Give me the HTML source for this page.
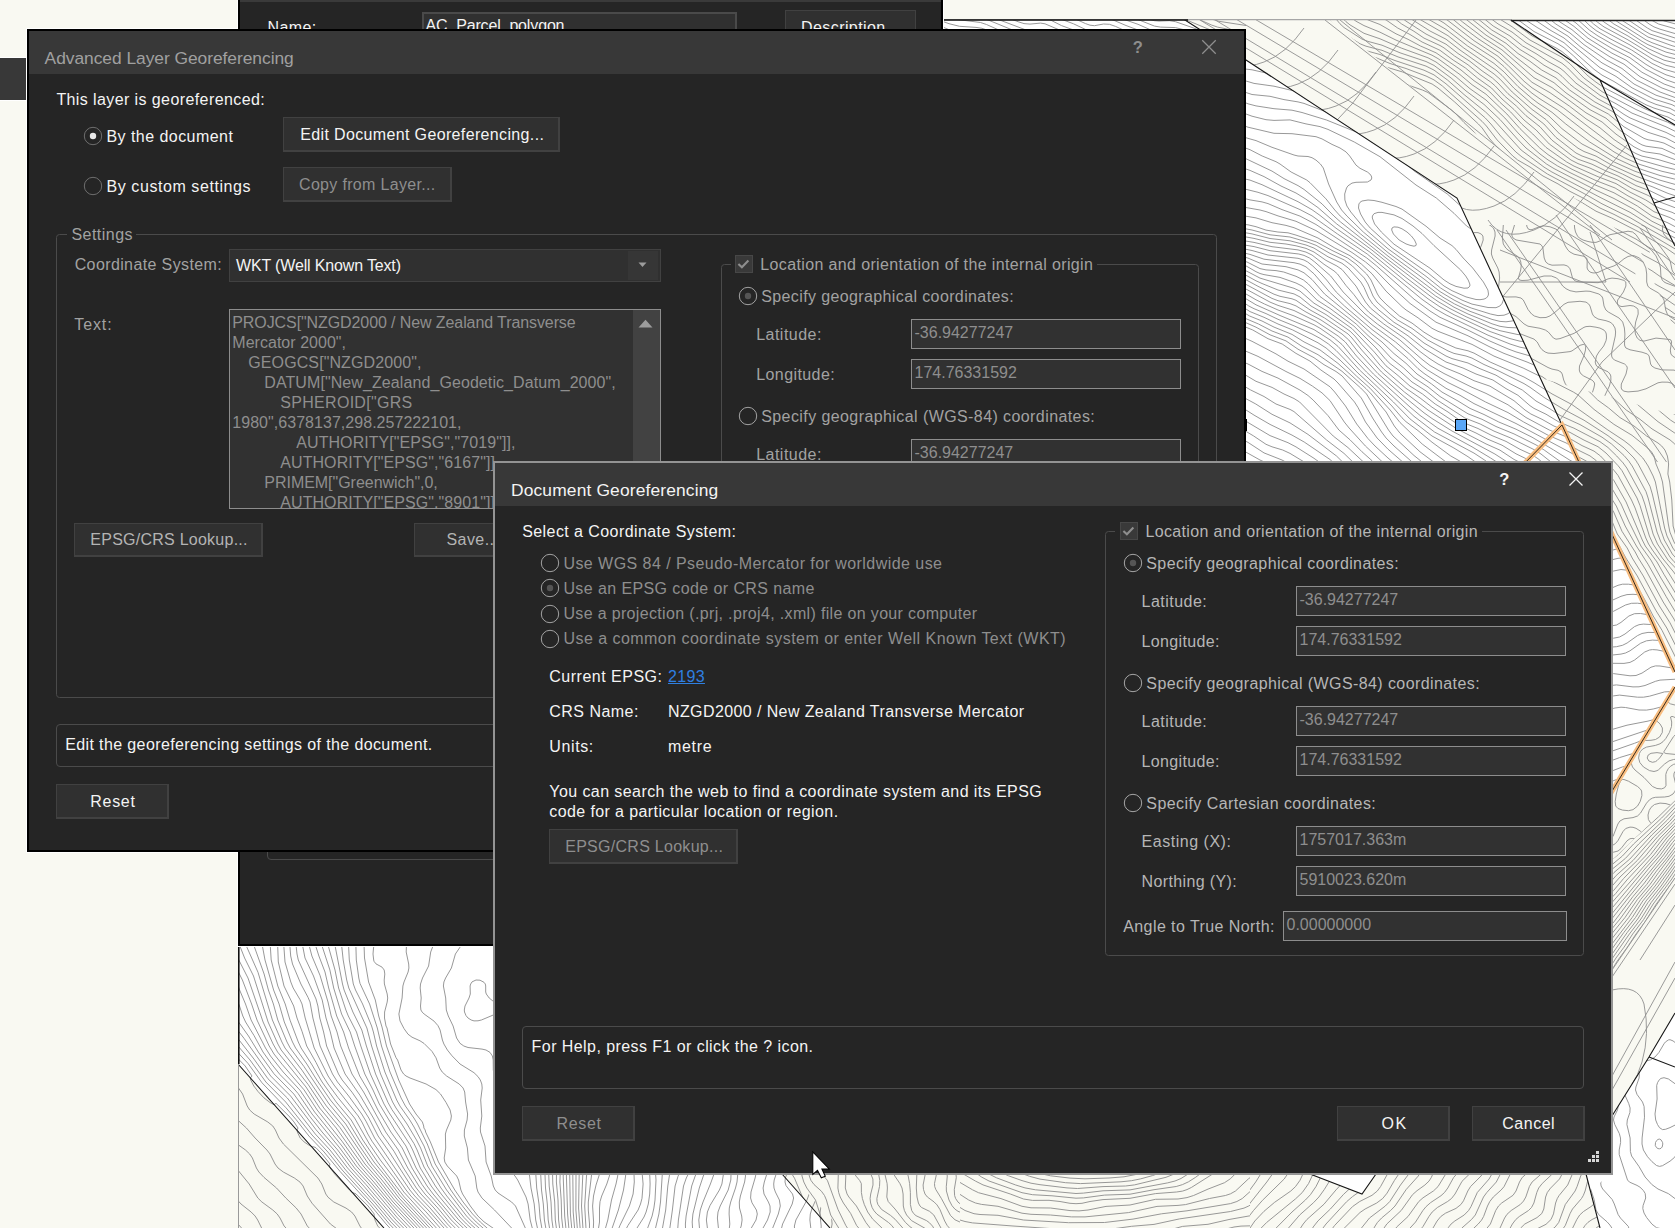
<!DOCTYPE html>
<html><head><meta charset="utf-8"><title>Document Georeferencing</title>
<style>
html,body{margin:0;padding:0;}
body{width:1675px;height:1228px;overflow:hidden;background:#f9f9f2;position:relative;font-family:"Liberation Sans",sans-serif;}
.b{position:absolute;box-sizing:border-box;}
.t{position:absolute;white-space:pre;font-family:"Liberation Sans",sans-serif;}
.dlg{position:absolute;box-sizing:border-box;overflow:hidden;}
.dlg .in{position:absolute;}
</style></head><body>

<svg class="b" style="left:0;top:0" width="1675" height="1228" viewBox="0 0 1675 1228"><defs><clipPath id="mapclip"><rect x="238" y="19" width="1437" height="1209"/></clipPath><clipPath id="c1"><path d="M1244 58 L1457 198 L1562 425 L1612 532 L1675 672 L1675 687 L1612 791 L1560 880 L1244 880Z"/></clipPath><clipPath id="c2"><path d="M1511 20 L1675 20 L1675 125 L1600 80Z"/><path d="M1600 80 L1675 125 L1675 197 L1654 203Z"/><path d="M1654 203 L1675 197 L1675 246 L1668 232Z"/></clipPath><clipPath id="c3"><path d="M1330 20 L1511 20 L1600 80 L1654 203 L1675 246 L1675 330 L1640 250 L1600 215 L1440 110Z"/></clipPath><clipPath id="c4"><path d="M1185 20 L1511 20 L1600 80 L1654 203 L1675 246 L1675 462 L1575 462 L1562 425 L1457 198 L1246 60 L1199 29Z"/></clipPath><clipPath id="c5"><path d="M1470 225 L1675 225 L1675 415 L1540 378Z"/></clipPath><clipPath id="c6"><path d="M1540 378 L1675 415 L1675 462 L1575 462 L1562 425Z"/></clipPath><clipPath id="c7"><path d="M1457 198 L1675 198 L1675 462 L1575 462 L1562 425Z"/></clipPath><clipPath id="c8"><path d="M1610 528 L1612 532 L1675 672 L1675 687 L1612 791 L1610 795Z"/></clipPath><clipPath id="c9"><path d="M1612 462 L1675 462 L1675 672 L1612 532Z"/></clipPath><clipPath id="c10"><path d="M1612 791 L1675 687 L1675 800 L1612 860Z"/></clipPath><clipPath id="c11"><path d="M1612 860 L1675 800 L1675 878 L1612 970Z"/></clipPath><clipPath id="c12"><path d="M1612 870 L1675 870 L1675 1013 L1649 1057 L1612 1116Z"/></clipPath><clipPath id="c13"><path d="M1612 1116 L1649 1057 L1675 1013 L1675 1228 L1600 1228 L1590 1190 L1612 1174Z"/></clipPath><clipPath id="c14"><path d="M238 944 L494 944 L494 1174 L790 1174 L840 1228 L238 1228Z"/></clipPath><clipPath id="c15"><path d="M782 1174 L960 1174 L960 1228 L830 1228Z"/></clipPath><clipPath id="c16"><path d="M960 1174 L1250 1174 L1250 1228 L960 1228Z"/></clipPath><clipPath id="c17"><path d="M1250 1174 L1310 1174 L1362 1194 L1376 1174 L1586 1174 L1600 1228 L1250 1228Z"/></clipPath><clipPath id="c18"><path d="M943 20 L1246 20 L1246 29 L943 29Z"/></clipPath></defs><g clip-path="url(#mapclip)"><rect x="238" y="20" width="1437" height="1208" fill="#ffffff"/><path d="M1185 20 L1511 20 L1600 80 L1654 203 L1668 232 L1675 246 L1675 1013 L1649 1057 L1612 1116 L1560 1195 L1560 880 L1612 791 L1675 687 L1675 672 L1562 425 L1457 198 L1246 60 L1199 29Z" fill="#f9f9f2"/><path d="M740 1128 L1290 1128 L1310 1174 L1362 1194 L1376 1174 L1586 1174 L1600 1228 L830 1228Z" fill="#f9f9f2"/><path d="M238 1064 L384 1228 L238 1228Z" fill="#f9f9f2"/><path clip-path="url(#c1)" d="M1666.5 16 L1680 19.8 M1654.4 16 L1658 18.3 L1664 20.9 L1680 25.1 M1646.4 16 L1652 20.4 L1658.6 24 L1680 30.1 M1638.4 16 L1649.1 24 L1654 26.9 L1660 29.2 L1680 35 M1629.9 16 L1647.4 28 L1652 30.6 L1680 39.6 M1622.6 16 L1644 30.5 L1650 34 L1680 43.8 M1616.3 16 L1621.5 20 L1648 37 L1672 45.7 L1680 47.9 M1610.1 16 L1617.8 22 L1646.2 40 L1652 42.7 L1668 48.6 L1680 51.8 M1603.5 16 L1613.9 24 L1628 32.1 L1642 41.3 L1648 44.7 L1666 52.1 L1680 55.7 M1596.8 16 L1604 22 L1609.9 26 L1628 36 L1648 48.5 L1664 55.8 L1670 57.6 L1680 59.7 M1590.8 16 L1597.3 22 L1604 26.9 L1628 39.9 L1652 54.6 L1664 60.2 L1680 64 M1585.3 16 L1593.6 24 L1600 28.8 L1630 45 L1654 60.1 L1666 65.3 L1680 68.7 M1579.9 16 L1590 25.8 L1596 30.5 L1610 38.7 L1631.7 50 L1652 63.4 L1664 69.2 L1680 73.8 M1573.7 16 L1589.3 30 L1598 36 L1614 45.1 L1630 53.2 L1646 64.4 L1654 69.1 L1666 74.8 L1680 79.2 M1566.4 16 L1576 23 L1586 32 L1591.2 36 L1612 48.5 L1630 57.8 L1646 69.4 L1666 79.8 L1680 84.6 M1559 16 L1574 26.4 L1588 38.2 L1612 53.2 L1626 60.2 L1642 72.3 L1664.1 84 L1680 89.7 M1552.5 16 L1560 22 L1572 29.7 L1586 41.5 L1610 56.9 L1624 64.2 L1640 76.7 L1662 88 L1680 94.6 M1546.1 16 L1555.8 24 L1570 33 L1584 44.7 L1606.4 60 L1622 68.5 L1636.3 80 L1660 92 L1680 99.4 M1538.3 16 L1552 26.3 L1568 36.2 L1580 46.5 L1602 62.9 L1618.6 72 L1634 84 L1656 95.2 L1672 100.4 L1680 104.1 M1529.1 16 L1550 30 L1564 38 L1600 67.7 L1616 76.4 L1632 87.8 L1654 99.1 L1672 104.7 L1680 108.9 M1520.7 16 L1528 21.5 L1538 28 L1564 42.7 L1594 69.3 L1602 75.1 L1614 81.5 L1630 91.6 L1648 101.1 L1656 104.4 L1670 108.4 L1680 113.8 M1512.9 16 L1534 31.5 L1558 43.8 L1564 47.7 L1573.7 56 L1592 73.6 L1602 80.9 L1646 104.8 L1654 108.1 L1670 113 L1680 118.6 M1504 16 L1514 22.6 L1532 35.9 L1556 47.9 L1562 51.6 L1572 59.9 L1588.1 76 L1596 82.2 L1604 87.6 L1644 108.4 L1652 111.8 L1668 117.1 L1680 123.5 M1494.9 16 L1512 26.7 L1529.9 40 L1562 57.3 L1570 63.8 L1583.9 78 L1602 91.6 L1636 109.5 L1650 115.7 L1667.3 122 L1680 128.5 M1487.5 16 L1498 23.9 L1512 32 L1526 42.8 L1562 63.3 L1567.7 68 L1579.4 80 L1600 95.3 L1616 103.7 L1632 113.1 L1666 126.8 L1680 133.7 M1480.9 16 L1493.2 26 L1510 36 L1522.7 46 L1536 53.6 L1548 61.5 L1560 68.1 L1564 71.3 L1576 83.2 L1598 98.9 L1614 107.5 L1624 114.4 L1630 117.9 L1652 127.1 L1666 132.4 L1680 139.4 M1474.5 16 L1491.8 30 L1506 38.4 L1520 49.5 L1534 58 L1544 65.2 L1558 73 L1562 76.3 L1570 84.3 L1574.7 88 L1594.9 102 L1612 111.2 L1626 121.8 L1648 132.3 L1666 138 L1680 145.4 M1468.1 16 L1490 33.4 L1506 43.3 L1518 53.5 L1530 61.3 L1541.7 70 L1556 77.9 L1569.6 90 L1592 105.4 L1608.3 114 L1624 126.8 L1644 138.4 L1648 139.8 L1658 141.5 L1664 143.1 L1680 151.2 M1461.9 16 L1486 35.1 L1503.1 46 L1516 57.2 L1536 72.6 L1554 82.7 L1566 92.9 L1590 109.7 L1606 118.2 L1620 130.4 L1638 142.7 L1642 144.9 L1646 146.2 L1662 148.4 L1680 156.6 M1455.7 16 L1462.6 22 L1483.7 38 L1502 49.9 L1534 77.7 L1552 87.6 L1586 112.8 L1602.1 122 L1616 134.1 L1634 146.8 L1642 150.9 L1646 152 L1660 154 L1680 161.5 M1449 16 L1461.1 26 L1478 38.6 L1500 53.1 L1532 82.3 L1550 92.7 L1569.3 106 L1586 118.8 L1600 127.8 L1614 139.5 L1629.6 150 L1636 153.6 L1642 156.1 L1658 159.5 L1680 166.1 M1441.1 16 L1448 20.6 L1474 40.7 L1498 56.3 L1508.7 66 L1524 81.2 L1532 87.8 L1563.7 108 L1608.4 142 L1617 148 L1630.7 156 L1640 160 L1664 166.8 L1680 170.7 M1432.1 16 L1444 23 L1470 42.8 L1494 58.2 L1504 66.6 L1522 84.8 L1532 93.2 L1540 98.9 L1557.6 110 L1591.1 136 L1614 151.9 L1624.9 158 L1640 164.5 L1662 171.3 L1680 175.4 M1422.9 16 L1446 29.4 L1467.7 46 L1494 63.4 L1504 71.9 L1518 86.5 L1532 98.5 L1538 103.1 L1552 112.3 L1565.8 124 L1589.7 142 L1615.4 158 L1632 165.7 L1642 169.6 L1660 175.5 L1680 180.4 M1414.1 16 L1448 35.7 L1463.8 48 L1496 70.1 L1502 75.4 L1513.8 88 L1532 103.9 L1548.9 116 L1562 128.7 L1582 144 L1598 152.2 L1614.1 162 L1634 170.9 L1660 180.2 L1680 185.8 M1406.5 16 L1430 31 L1446 39.2 L1460 50 L1494.1 74 L1500 79.1 L1512.2 92 L1532 109.4 L1546 119.6 L1559.7 134 L1578 148.2 L1584 151.5 L1596 156.1 L1612 165.3 L1636 176.2 L1666 187.1 L1680 191.5 M1399.4 16 L1406 21.1 L1426 34 L1446 44.2 L1458 53.5 L1470 61.4 L1482 70.8 L1492.4 78 L1498 83 L1508 93.7 L1518 102 L1528 111.6 L1543.9 124 L1556 137.4 L1576 153 L1582 156 L1596 161 L1608 167.6 L1622.4 174 L1636 180.9 L1652 186.6 L1668 193.4 L1680 197.4 M1391.4 16 L1401.7 24 L1414 31.3 L1424 38.1 L1440 45.5 L1444 47.9 L1454.6 56 L1468 64.8 L1480 74.6 L1490.7 82 L1495.3 86 L1504.6 96 L1516.3 106 L1526 115.7 L1540 126.8 L1552 140.2 L1572.4 156 L1578 159.2 L1592 164.2 L1606 171 L1618 176 L1636 185.6 L1650 190.8 L1666 198.5 L1680 203.3 M1375.6 16 L1386 19.9 L1397.7 28 L1410 34.5 L1422.1 42 L1440 50.3 L1453.1 60 L1465.5 68 L1477.5 78 L1491.5 88 L1502 99 L1514 109.5 L1524 120 L1536.1 130 L1549.3 144 L1571 160 L1578 163.6 L1590 168.1 L1602.7 174 L1617.7 180 L1632 188.4 L1648 195.4 L1660 202 L1680 209.6 M1360.3 16 L1368 19.9 L1380 24.5 L1396 33.8 L1408 39.3 L1420.5 46 L1436 52.8 L1461 70 L1474 80.7 L1486 88.8 L1489.9 92 L1500 102.4 L1510.7 112 L1522 124.3 L1532.8 134 L1546 147.4 L1566.7 162 L1574 166.1 L1598 176.7 L1616 183.6 L1630 192.1 L1645.8 200 L1656 206.5 L1660 208.3 L1672 212.3 L1680 216.3 M1348.9 16 L1356 21.2 L1364 25.6 L1380 32.2 L1396 40.1 L1432 55.2 L1438 58.6 L1460 74.6 L1472 84.7 L1486 94.2 L1506.9 114 L1520 128.6 L1539.8 148 L1548 154.6 L1559.1 162 L1572 169.3 L1596 180.6 L1615.1 188 L1628 195.9 L1640 202.2 L1654 211.7 L1670 217.6 L1680 223 M1340.5 16 L1346 21.7 L1350 24.9 L1364 33.3 L1380 38.8 L1401.2 48 L1428 57.8 L1436 62 L1456 76.8 L1470 88.7 L1486 100 L1504.9 118 L1518 132.9 L1530.8 146 L1540 154 L1548 159.9 L1557.7 166 L1570 172.6 L1596 185.3 L1614 192.8 L1637.3 206 L1652 216.2 L1668 222.9 L1680 229.3 M1333.5 16 L1340 23.8 L1344 27.5 L1362 39.1 L1368 41.4 L1382 45.2 L1400 52.8 L1426 61.5 L1434 65.4 L1451.1 78 L1466 90.9 L1484 104.4 L1500 119.5 L1518 139.7 L1526 148 L1546.5 164 L1554 168.6 L1570 176.9 L1596 190.2 L1614 198.5 L1634 209.3 L1652 221.3 L1680 235.1 M1325.1 16 L1328 18.4 L1338.8 30 L1360 43.8 L1366 46.2 L1382 50.3 L1398 56.9 L1426 66.1 L1434 70.1 L1447.5 80 L1464 94.5 L1485.6 112 L1493.9 120 L1521.1 150 L1544 167.1 L1551.9 172 L1600 197.3 L1630 212.3 L1650 224.9 L1680 240.6 M1304.7 16 L1318 20.3 L1322 22.2 L1335.4 34 L1360 48.6 L1366 50.7 L1380 54.5 L1394 60.2 L1424 70.2 L1434 74.9 L1446 83.8 L1485.3 118 L1490.9 124 L1500.7 136 L1515.9 152 L1522 157 L1547.4 174 L1586 194.6 L1602 203.8 L1630 217.6 L1650 229.4 L1680 246.1 M1291.1 16 L1302 22.2 L1318 28.2 L1332.1 38 L1358 52 L1376 57.7 L1390 63.5 L1406 68.5 L1426 76 L1434 79.9 L1442.4 86 L1482 121.3 L1486.4 126 L1497.2 140 L1512.8 156 L1517.7 160 L1530 167 L1543 176 L1558 183.9 L1570 191.4 L1584 198.5 L1600 208 L1614 214.4 L1638 226.9 L1680 251.8 M1277.4 16 L1296 26.3 L1315.7 34 L1330 42.5 L1342 48 L1354 54.5 L1360 57 L1374 61.5 L1386 67 L1402.7 72 L1432.1 84 L1438 88 L1454.7 102 L1478.4 124 L1482.2 128 L1489.1 138 L1494 143.8 L1510 159.9 L1516 164.6 L1526.3 170 L1540 179.1 L1553.7 186 L1570 196.6 L1581 202 L1596 211.2 L1611.7 218 L1639 232 L1666 248 L1680 257.7 M1251.6 16 L1258 17.5 L1264 19.9 L1279.1 30 L1288 34.4 L1316 44.9 L1350 60.6 L1369.7 68 L1384 75.4 L1398 80.2 L1410.7 86 L1422.4 90 L1428 92.5 L1451.5 110 L1456 114 L1464 122.5 L1476 133.9 L1484 145.1 L1488.2 150 L1504.7 166 L1510 170.4 L1534 185.6 L1551.6 194 L1564 202.4 L1576 208.8 L1590 217.6 L1608 224.7 L1636 239.1 L1648 246.9 L1662 254.6 L1680 268.5 M1240 26.7 L1254 28.5 L1260 30.3 L1274 38.7 L1294 47.9 L1300 50.1 L1314 53.7 L1320 56 L1342 66.2 L1366 75.7 L1402 95.4 L1408 97.6 L1418 100.1 L1424 102.8 L1448 119.7 L1458 130.2 L1468.6 140 L1478.3 152 L1484 158 L1504 175.7 L1528 193.4 L1534 197 L1546 202.5 L1570 215 L1586 224.9 L1604 231.8 L1628 243.8 L1644 255.3 L1658 262.8 L1669.9 272 L1680 278.9 M1240 39.7 L1254 42.5 L1266 47.2 L1280 51.7 L1296 59 L1310 62.3 L1316 64.3 L1366 86.9 L1398 105.8 L1406 109.3 L1418 113.5 L1428 118.7 L1437 124 L1442.4 128 L1462 146.9 L1476 161.9 L1486 171.2 L1516 195.8 L1530 206.4 L1540 212 L1566 222.5 L1584 232.4 L1600 239.3 L1622 250 L1627.9 254 L1640 263.9 L1652 270.8 L1662.3 278 L1674 284.9 L1680 289.1 M1240 55 L1250 56.2 L1274 61.7 L1290 67.2 L1306.9 72 L1320 78.4 L1335.7 84 L1350 91.9 L1364 97.5 L1378.5 106 L1404 119.3 L1424 128.9 L1436 136.5 L1446 144.3 L1482 178.7 L1495.8 190 L1508 201.4 L1528 216.9 L1536 221.1 L1572 235.1 L1613.4 256 L1620 260.1 L1636 272.4 L1658 285.6 L1670 292.1 L1680 299.3 M1240 68.4 L1252 69.8 L1300 80.7 L1316 88.5 L1330 93.8 L1342 99.5 L1358 105.1 L1374 113.8 L1390 120.9 L1401.9 128 L1416 135.5 L1429.8 146 L1442 154.1 L1453.1 164 L1466 174.1 L1478 185.9 L1490 195.6 L1502.2 208 L1524 225.8 L1530 228.9 L1542 233 L1556 239.1 L1570 244.1 L1598 257.7 L1608.2 264 L1634 282.1 L1664 297.7 L1680 308.7 M1240 79.2 L1254 83.4 L1274 86.2 L1302 92.8 L1336 107.2 L1356 113.5 L1368.8 120 L1384 126.8 L1410 142.1 L1424 154.2 L1436 162.3 L1448 172.7 L1460 180.7 L1472 192 L1484 201.2 L1497.2 214 L1522 234.9 L1526 237 L1548 246.4 L1564 252.4 L1580 261.3 L1590 264.6 L1596 267.2 L1618 281.3 L1632 291 L1658 303 L1670 310.4 L1680 317.8 M1240 89.7 L1246 92.5 L1252 94.5 L1270 96.3 L1284 99.6 L1298 101.9 L1304 103.4 L1336 115.7 L1354 121.7 L1378 132.5 L1404 149.2 L1418 161.6 L1430 169.7 L1442 179.5 L1454.2 188 L1468 200.7 L1480 209.5 L1502.4 228 L1515.6 240 L1522 244.6 L1540 254.9 L1558.5 262 L1572 270.4 L1576 272.1 L1592 276.9 L1612 286.6 L1632 299.9 L1648 306.9 L1666 316.8 L1672 320.9 L1680 328 M1392 228 L1391.7 230 L1393.4 234 L1399.1 240 L1406 243.9 L1410 245.3 L1414 246.2 L1416 245.5 L1416.3 244 L1414.5 240 L1411.4 236 L1407 232 L1402 228.8 L1398 227.2 L1394 226.9 L1392 228 M1240 100.5 L1248 103.8 L1256 105.9 L1274 108.7 L1292 110.2 L1302 112.5 L1326.5 120 L1361.2 134 L1373.9 140 L1396.5 156 L1414 170.8 L1447.3 194 L1468 212.6 L1496.4 234 L1518 252.7 L1528 260.2 L1542 268.3 L1566 279.9 L1586 285.6 L1606 292.4 L1612 295.1 L1628 305.8 L1640.3 312 L1664.7 326 L1669.9 330 L1680 339.4 M1374 213.7 L1372.4 216 L1372.3 218 L1374.6 224 L1381.3 232 L1394 244.2 L1430 268.2 L1444.1 280 L1450 283.8 L1456 286.4 L1464 288.2 L1468 288 L1469.9 286 L1469.8 284 L1468.2 280 L1465.7 276 L1460.7 270 L1434 245.6 L1422 233.5 L1413 226 L1402 218.5 L1394 214.9 L1382 212.4 L1378 212.4 L1374 213.7 M1240 111.8 L1252 116.2 L1266 119.7 L1274 120.4 L1290 119.9 L1306 123.9 L1320 126.6 L1328 129.4 L1354.3 142 L1380 156.7 L1416 185 L1436.3 198 L1454 213.3 L1466.6 226 L1481.8 236 L1486.9 240 L1503.9 254 L1514 264.6 L1518 267.8 L1544.6 282 L1562 289.5 L1570 291.9 L1584 294.7 L1598 298.4 L1604 300.3 L1610 302.9 L1622 310.7 L1636 318.7 L1648 327.2 L1659.3 334 L1664 337.7 L1672.6 346 L1680 351 M1368 200 L1362 201 L1360 202.3 L1358.9 204 L1358.5 208 L1360.6 214 L1365.2 222 L1370.2 228 L1392 247.8 L1428 273 L1444 286 L1452 290.7 L1466 296.9 L1476 299.5 L1480 299.7 L1484 299.1 L1486.4 298 L1488 296 L1488.5 294 L1487.9 290 L1483.4 282 L1472.7 268 L1463.2 258 L1456 249.4 L1452 245.6 L1440 238 L1426 226.2 L1402 209.1 L1396 206.5 L1382 202.3 L1374 200.5 L1368 200 M1240 124.3 L1248 127.2 L1274 133.3 L1292 133.7 L1316 136.7 L1322 138.9 L1332 144.4 L1340 148 L1346 151.9 L1349.7 156 L1356 165.1 L1360 168.3 L1367.4 172 L1369.9 174 L1371.3 176 L1371.8 178 L1371 180 L1367.4 182 L1356 182.3 L1352 183.1 L1348 185.8 L1346.5 188 L1344.7 194 L1344.9 200 L1346.9 206 L1350.8 212 L1360.7 224 L1366.3 230 L1388 248.8 L1426 276.3 L1440.6 288 L1450.1 294 L1462 300.1 L1472 304.1 L1488 307.5 L1496 307.7 L1499.9 306 L1502 303.5 L1503.4 300 L1505.2 290 L1506 287.8 L1507.5 286 L1512 284.4 L1520 284.4 L1526 285.6 L1548 293.3 L1566 300.9 L1572 302.2 L1586 303.9 L1596 306.3 L1602 308.4 L1608 311.3 L1631.2 326 L1654 342 L1670 356.2 L1680 363.3 M1240 136.1 L1256 140.6 L1272 147.3 L1294 155 L1298 156 L1308 156.5 L1312 157.7 L1316 160.1 L1320.4 164 L1323.3 168 L1328.6 184 L1336.7 202 L1341.6 210 L1346.9 216 L1363.3 232 L1388 252.6 L1424 279 L1440 291.6 L1454 300 L1464 305.1 L1471.2 308 L1490.5 314 L1498 315.6 L1504 315.2 L1508 313.7 L1512 310.7 L1518 304.3 L1522 301.8 L1526 300.7 L1534 300.2 L1540 300.5 L1546 301.7 L1566 310.2 L1586 313.1 L1596 315.7 L1604 319.1 L1610 322.6 L1626 334.3 L1646 347.8 L1656 355.5 L1674 371.4 L1680 375.9 M1240 146 L1250 149.7 L1262.2 156 L1276 161.7 L1280 164 L1291.1 172 L1306.7 180 L1310 182.7 L1326 198.9 L1334.8 210 L1340.2 216 L1360.6 234 L1388 256.1 L1436 292.4 L1444 297.8 L1454.7 304 L1470 311.3 L1492 319.4 L1500 321.4 L1506 321.8 L1512 321 L1516 319.7 L1530 313 L1536 311.5 L1542 311.4 L1548 312.8 L1562 318.1 L1600 327.8 L1607.7 332 L1620 342 L1634 350.9 L1654 365.2 L1659.6 370 L1670 380.7 L1680 387.9 M1240 155.9 L1272 171.1 L1284 178.6 L1298 185.6 L1304 189.4 L1322 203.9 L1333.9 216 L1340.6 222 L1388 259.6 L1435.6 296 L1454 307.2 L1468 314 L1492 323.8 L1500 326.3 L1508 327.5 L1516 327.8 L1522 327.1 L1536 324.1 L1544 324.2 L1568 329.7 L1582 334.7 L1598 338.9 L1603.8 342 L1614 349.5 L1628 357.5 L1650 373.5 L1654.8 378 L1664 388.9 L1680 401.6 M1240 166.9 L1250 170.4 L1264 176.6 L1281 186 L1296 193 L1306 199.2 L1318 207.6 L1336.8 224 L1371.9 250 L1406 277.5 L1430 295.9 L1438 301.5 L1450 308.6 L1466 316.7 L1490 327.3 L1500 330.7 L1518 334.6 L1524 334.9 L1536 334.4 L1544 335.3 L1568 341.3 L1588 347.2 L1594 349.5 L1608 357.8 L1622 364.6 L1643.5 380 L1648 384.2 L1660 398.7 L1674 410.9 L1680 415.3 M1240 177.8 L1250 180.1 L1262 184.7 L1298 201.7 L1312 209.7 L1320 215.4 L1336 228.2 L1370 252.2 L1406 281.7 L1428 298.8 L1440 306.9 L1454 314.7 L1490 331.5 L1510 338.6 L1520 341.2 L1536 342.6 L1542 343.9 L1556 348.6 L1582 355.5 L1594 360.7 L1616.8 374 L1636 387.1 L1641.6 392 L1652.4 404 L1660.7 412 L1670.4 420 L1680 426.3 M1240 187.8 L1258 192.3 L1268 195.6 L1300 209.6 L1312 215.9 L1337.5 234 L1367.2 254 L1422 299.3 L1436 309.2 L1446 314.9 L1488 335.2 L1510 344 L1520 347.2 L1536 350.3 L1552 355.8 L1566 359.9 L1586 367.1 L1594 371 L1601.4 376 L1622.6 392 L1658 421.7 L1680 436.6 M1240 197.4 L1250 199.9 L1262 201.9 L1268 203.6 L1282 209.6 L1300 216.1 L1316 224.5 L1366.8 258 L1376.7 266 L1414 299.1 L1430 311 L1440 317.3 L1468 330.1 L1490 341.1 L1508 348.9 L1516 351.9 L1532 356.5 L1546 361.7 L1560.3 366 L1588 378.3 L1593.6 382 L1604 391.3 L1614 398.8 L1626.2 410 L1640 419.3 L1652 428.9 L1670 439.9 L1674.8 444 L1680 449.6 M1240 206.5 L1260 210 L1266 211.6 L1278 215.9 L1296 221.3 L1316 230.6 L1352 252.5 L1365.6 262 L1375.2 270 L1390 285 L1410 303.4 L1436 322.2 L1468 335.8 L1490 347 L1504 353.4 L1527 362 L1542 368.4 L1558 373.6 L1582.3 386 L1587.6 390 L1597.7 400 L1608.7 408 L1620 417.6 L1634 426 L1646.6 436 L1658 443 L1661.7 446 L1664.9 450 L1667.4 456 L1668.4 462 L1668.2 470 M1240 215.2 L1256 217.9 L1272 222.7 L1286 225.4 L1294 227.7 L1318 238 L1334.8 248 L1350 255.7 L1361.3 264 L1372 273.8 L1386 291.1 L1402 306.6 L1406.1 310 L1418 317.8 L1432 328.3 L1438 331.3 L1472 344.4 L1494 356.1 L1523.1 368 L1538 375.3 L1553.8 382 L1573.3 392 L1578 394.9 L1594 409.4 L1614 424.4 L1632 435.3 L1647.7 448 L1651.6 452 L1654 456 L1656 464 L1658.6 470 M1240 224 L1248 224.8 L1256 226.7 L1266 230.1 L1277.9 232 L1288 232.8 L1296 235.1 L1316.5 242 L1332 250.4 L1347.7 258 L1355.9 264 L1366.6 274 L1371 280 L1377.4 294 L1380 298 L1385.9 304 L1399.5 316 L1412 323.1 L1424 332.2 L1433.5 338 L1455.9 348 L1468 350.8 L1474 353.1 L1490.1 362 L1524 377 L1534 382.6 L1552 393.9 L1572 404.6 L1607.9 430 L1624 440.6 L1630 445.3 L1642.8 458 L1646.9 464 L1650.2 470 M1240 227.8 L1252 230 L1270 234.8 L1290 237 L1308 242.3 L1316 245.3 L1330 253.4 L1344.3 260 L1352.4 266 L1364.3 278 L1368 284 L1373 296 L1377 302 L1390.1 314 L1397.6 320 L1412 328.4 L1427.7 340 L1448 350.9 L1454 353.4 L1466 356 L1472 358.1 L1484 364.5 L1498 370.6 L1524 383.6 L1530 387.3 L1545 398 L1564 409.5 L1584 420.2 L1608 435.7 L1624.1 448 L1634 458 L1637 462 L1641.6 470 M1240 231.8 L1252 233.9 L1270 238.5 L1290 240.8 L1306 245 L1314 248.1 L1328 256.8 L1342 263.3 L1348.2 268 L1360.8 282 L1364 287.3 L1368.7 298 L1372.7 304 L1378.9 310 L1394 322.3 L1410 332.1 L1424 343 L1446 356 L1452 358.6 L1468 363 L1480 368.7 L1496 375.2 L1510 383.7 L1522.3 390 L1536 401 L1550 408.9 L1560 415.4 L1580 424.6 L1602 437.2 L1611.5 444 L1624 455.5 L1629.6 462 L1634.3 470 M1240 235.9 L1254 238.4 L1270 242.3 L1286 244 L1296 245.8 L1306 248.4 L1314 252 L1326 260.4 L1336.9 266 L1342 269.5 L1356 286.1 L1365.5 302 L1370.4 308 L1388 322.5 L1408 335.8 L1424 348.6 L1446 362 L1463 368 L1476 374 L1492.9 380 L1506 388.6 L1518 395.3 L1530 405.7 L1534 408.4 L1546 414.2 L1558.9 422 L1574 428.2 L1600 441.7 L1608 447.5 L1616.7 456 L1624 463.9 L1628 470 M1240 240.1 L1254 242.4 L1272 246.7 L1298 249.9 L1306 252.1 L1312 255 L1324 264.3 L1334 270.9 L1337.5 274 L1346 285.5 L1354 294.7 L1361 304 L1368.6 312 L1383.8 324 L1404 338 L1420 351.5 L1430 358.9 L1438 364 L1446 368.1 L1460 373.8 L1474 380.7 L1490 386.2 L1514 400.7 L1525 410 L1530.9 414 L1542 419.3 L1554 426.1 L1570 432.4 L1584 440.1 L1598 446.7 L1606 453 L1618 465.6 L1621.5 470 M1240 244.2 L1254 246.6 L1270 250.7 L1298.8 254 L1304 255.4 L1309.5 258 L1314.8 262 L1330.7 276 L1343.2 292 L1365 314 L1377.3 324 L1399.9 340 L1422 359.3 L1430 365.5 L1444 373.5 L1472 387.3 L1486 393.4 L1508 404.8 L1526 417.5 L1549.3 430 L1568 437.5 L1582 445.6 L1594 451.1 L1600.5 456 L1613.7 470 M1240 248.1 L1252 250.5 L1268 255 L1298 258.3 L1304 260 L1307.7 262 L1312.8 266 L1321.1 274 L1326.6 280 L1336.2 292 L1352.7 308 L1372 324.8 L1395.6 342 L1409.6 354 L1422 365.8 L1427.5 370 L1448 382.5 L1462 389.4 L1485.6 402 L1508 412.6 L1523.7 422 L1548 435.2 L1566 442.9 L1578 450 L1590 455.9 L1596 460.4 L1604.7 470 M1240 252 L1250 254.4 L1264 259.2 L1294 262.7 L1300 264.1 L1306 266.9 L1314 273.8 L1329.6 292 L1344.5 306 L1372 329.5 L1388.7 342 L1408 358.6 L1418 368.6 L1424 373.4 L1446 388.3 L1460 395.3 L1474 403.6 L1516 423.5 L1586 460.9 L1590.3 464 L1596.3 470 M1240 255.8 L1248 258.1 L1262 264 L1286 266.7 L1298 269.9 L1304 272.8 L1312 279.5 L1324.6 294 L1358 321.5 L1372 334.2 L1382 342 L1394 353.6 L1406 363.3 L1417 374 L1431.6 384 L1442 392.1 L1458 401 L1470 408.4 L1484 414.5 L1498.8 422 L1516 429.2 L1532 437.2 L1553.7 450 L1570 460.3 L1584 467.7 L1587.2 470 M1240 259.6 L1247 262 L1260 268.6 L1266 269.9 L1276 270.6 L1283.7 272 L1296 276.3 L1303.5 280 L1308.4 284 L1320 296.5 L1332 305.2 L1356.2 324 L1368 335.5 L1380 346 L1391.1 358 L1403.8 368 L1414 377.7 L1428 386.9 L1440 396.5 L1468 413.8 L1482 419.3 L1496 426.5 L1514 433.9 L1536 444.9 L1544.2 450 L1572.1 470 M1240 263.5 L1246 265.9 L1256 271.7 L1260 273.5 L1264 274.6 L1280 277.4 L1296 283 L1302 286 L1306 289.2 L1316.9 300 L1330 308.4 L1354 326.2 L1376.1 348 L1386 359.7 L1390 363.6 L1400 371.2 L1412 382 L1426 390.9 L1438 400.6 L1464.9 418 L1480.2 424 L1494 431.1 L1510 437.7 L1534.8 450 L1541 454 L1561 470 M1240 267.7 L1260 278.1 L1294 288.3 L1300 291.1 L1314 303.2 L1328 311.6 L1352 328.6 L1374.3 352 L1386 365.8 L1398 375.5 L1410 386.1 L1422.5 394 L1435.2 404 L1448 412 L1460 420.6 L1466 423.7 L1478 428.5 L1492 435.6 L1506 441.4 L1520 449.3 L1532 454.8 L1538 458.7 L1551.3 470 M1240 272 L1256 280.8 L1262 283.5 L1278 290 L1294 293.9 L1300 297 L1311 306 L1326 314.6 L1350 331.1 L1354.9 336 L1362 344.7 L1370.8 354 L1380 365.2 L1384 369.3 L1406 388.3 L1420.1 398 L1432 407.2 L1460 425.7 L1476 433 L1488 439.3 L1502 445.2 L1516 453.8 L1530 460.6 L1534.8 464 L1541.5 470 M1240 276.6 L1258 286.3 L1274 294.2 L1280 296.3 L1292 298.8 L1296 300.3 L1310 309.9 L1324.6 318 L1348.1 334 L1352 338 L1361.7 350 L1381.5 372 L1404.4 392 L1428 410 L1456 428.3 L1486 443.9 L1500 450.2 L1514 459.4 L1526 465.5 L1532.1 470 M1240 281.2 L1272 298.4 L1278 300.7 L1290 303.6 L1296 305.9 L1306 312 L1321 320 L1342 334 L1348.8 340 L1358.2 352 L1378 373.6 L1404 396.6 L1424 412.8 L1432 418.5 L1452 431 L1494.9 454 L1510 463.8 L1521.7 470 M1240 285.8 L1270 302.1 L1278 305.4 L1294 310.5 L1316 321.4 L1338.1 336 L1345.3 342 L1356.5 356 L1373.4 374 L1410 407 L1420 415.4 L1438 428.3 L1472 446.8 L1490.6 458 L1509.1 470 M1240 290.5 L1256 299.8 L1264.5 304 L1278 310 L1294 315.9 L1314 324.8 L1320 328.2 L1334.2 338 L1342 344.5 L1353.2 358 L1366.5 372 L1414 416.3 L1434.5 432 L1474 453.1 L1484.5 460 L1497.5 470 M1240 295.2 L1256 304.8 L1280 315.5 L1314 329.6 L1330 339.8 L1338 346.4 L1359.6 370 L1393.4 402 L1410 418.9 L1432 436 L1453.9 448 L1468 456.7 L1475.5 462 L1485.1 470 M1240 300 L1248.8 306 L1254 308.7 L1266 313.6 L1278 319.3 L1294 325.8 L1312 334 L1320 338.3 L1328.5 344 L1336 350.4 L1358 373.1 L1374.2 388 L1391.9 406 L1402 417.8 L1406 421.7 L1418 430.6 L1432 442.2 L1450.8 456 L1466 464.6 L1473.7 470 M1240 305.1 L1250 311.6 L1264 317.3 L1278 324 L1292.8 330 L1318 342.8 L1326.1 348 L1340 360 L1356.4 376 L1370 388.2 L1390.2 410 L1400 422.5 L1422.2 444 L1448 463.5 L1459.8 470 M1240 310.3 L1249.6 316 L1262 321 L1274 327.1 L1292 334.4 L1304 341.9 L1320 349.9 L1338 363.4 L1366 388.6 L1371.2 394 L1386.1 412 L1394.3 426 L1400 433.2 L1420 451.8 L1444.3 470 M1240 315.3 L1246 318.7 L1258.5 324 L1272 331 L1288 337.1 L1302 346.4 L1318 354.7 L1342 371.3 L1360.7 388 L1366.5 394 L1388.5 430 L1393 436 L1414 455.5 L1432.1 470 M1240 320.1 L1256 327.2 L1270 334.8 L1286 340.9 L1298 349.2 L1314 357.7 L1324 364.7 L1336 371.5 L1342 375.9 L1361.3 398 L1372.6 418 L1381.6 432 L1386.1 438 L1394 446 L1421.2 470 M1240 324.8 L1252.8 330 L1268 338.7 L1282.2 344 L1296 353.4 L1310 361.1 L1320.9 370 L1334 379 L1338 383 L1354.5 402 L1358 407.5 L1365.5 422 L1377.1 438 L1388 449.2 L1411.9 470 M1240 336 L1252 341.3 L1276 353.9 L1288 361.2 L1304 369 L1330 386.8 L1334.7 392 L1345.5 406 L1356.7 424 L1368 438.6 L1375 446 L1388 458 L1402.4 470 M1240 348.7 L1258 356.4 L1286 371.5 L1300 378.4 L1312.3 386 L1322 392.9 L1330 400.6 L1344.3 422 L1349.1 428 L1365.4 446 L1391 470 M1240 360.7 L1248 364 L1262 371.4 L1278 378.1 L1300 390.1 L1308 395.5 L1313.1 400 L1328 415.6 L1338.9 430 L1350 439.8 L1362 451.8 L1372 460.7 L1380.6 470 M1240 371.8 L1256 381.3 L1272 387.4 L1284 394 L1294 398.5 L1299.6 402 L1333.2 436 L1348 447.6 L1366 464.4 L1371.3 470 M1240 383.8 L1250.7 390 L1264 396.5 L1276 404 L1290 409.4 L1294 411.6 L1326.6 440 L1344 453.4 L1361.1 470 M1240 395.5 L1255.8 404 L1272 414.3 L1290 422.9 L1308 434.4 L1336.5 456 L1350.7 470 M1240 406.2 L1254 415.1 L1270 424.4 L1292 435.1 L1304.2 442 L1330 459.5 L1341.2 470 M1240 416.9 L1248 422.5 L1270 435.6 L1288 442.7 L1296 446.9 L1314 458.3 L1330.3 470 M1240 427.8 L1253.7 436 L1266 444.3 L1272 446.8 L1282.7 450 L1290 453.4 L1307.5 464 L1315.4 470 M1240 438.3 L1248 442.4 L1264 452.9 L1282 460 L1300.5 470 M1240 448.8 L1260 460 L1272.9 466 L1280.1 470 M1240 459.7 L1260.9 470" fill="none" stroke="#8c8c8c" stroke-width="0.9" /><path clip-path="url(#c2)" d="M1666.5 16 L1680 19.8 M1654.4 16 L1658 18.3 L1664 20.9 L1680 25.1 M1646.4 16 L1652 20.4 L1658.6 24 L1680 30.1 M1638.4 16 L1649.1 24 L1654 26.9 L1660 29.2 L1680 35 M1629.9 16 L1647.4 28 L1652 30.6 L1680 39.6 M1622.6 16 L1644 30.5 L1650 34 L1680 43.8 M1616.3 16 L1621.5 20 L1648 37 L1672 45.7 L1680 47.9 M1610.1 16 L1617.8 22 L1646.2 40 L1652 42.7 L1668 48.6 L1680 51.8 M1603.5 16 L1613.9 24 L1628 32.1 L1642 41.3 L1648 44.7 L1666 52.1 L1680 55.7 M1596.8 16 L1604 22 L1609.9 26 L1628 36 L1648 48.5 L1664 55.8 L1670 57.6 L1680 59.7 M1590.8 16 L1597.3 22 L1604 26.9 L1628 39.9 L1652 54.6 L1664 60.2 L1680 64 M1585.3 16 L1593.6 24 L1600 28.8 L1630 45 L1654 60.1 L1666 65.3 L1680 68.7 M1579.9 16 L1590 25.8 L1596 30.5 L1610 38.7 L1631.7 50 L1652 63.4 L1664 69.2 L1680 73.8 M1573.7 16 L1589.3 30 L1598 36 L1614 45.1 L1630 53.2 L1646 64.4 L1654 69.1 L1666 74.8 L1680 79.2 M1566.4 16 L1576 23 L1586 32 L1591.2 36 L1612 48.5 L1630 57.8 L1646 69.4 L1666 79.8 L1680 84.6 M1559 16 L1574 26.4 L1588 38.2 L1612 53.2 L1626 60.2 L1642 72.3 L1664.1 84 L1680 89.7 M1552.5 16 L1560 22 L1572 29.7 L1586 41.5 L1610 56.9 L1624 64.2 L1640 76.7 L1662 88 L1680 94.6 M1546.1 16 L1555.8 24 L1570 33 L1584 44.7 L1606.4 60 L1622 68.5 L1636.3 80 L1660 92 L1680 99.4 M1538.3 16 L1552 26.3 L1568 36.2 L1580 46.5 L1602 62.9 L1618.6 72 L1634 84 L1656 95.2 L1672 100.4 L1680 104.1 M1529.1 16 L1550 30 L1564 38 L1600 67.7 L1616 76.4 L1632 87.8 L1654 99.1 L1672 104.7 L1680 108.9 M1520.7 16 L1528 21.5 L1538 28 L1564 42.7 L1594 69.3 L1602 75.1 L1614 81.5 L1630 91.6 L1648 101.1 L1656 104.4 L1670 108.4 L1680 113.8 M1512.9 16 L1534 31.5 L1558 43.8 L1564 47.7 L1573.7 56 L1592 73.6 L1602 80.9 L1646 104.8 L1654 108.1 L1670 113 L1680 118.6 M1504 16 L1514 22.6 L1532 35.9 L1556 47.9 L1562 51.6 L1572 59.9 L1588.1 76 L1596 82.2 L1604 87.6 L1644 108.4 L1652 111.8 L1668 117.1 L1680 123.5 M1494.9 16 L1512 26.7 L1529.9 40 L1562 57.3 L1570 63.8 L1583.9 78 L1602 91.6 L1636 109.5 L1650 115.7 L1667.3 122 L1680 128.5 M1487.5 16 L1498 23.9 L1512 32 L1526 42.8 L1562 63.3 L1567.7 68 L1579.4 80 L1600 95.3 L1616 103.7 L1632 113.1 L1666 126.8 L1680 133.7 M1480.9 16 L1493.2 26 L1510 36 L1522.7 46 L1536 53.6 L1548 61.5 L1560 68.1 L1564 71.3 L1576 83.2 L1598 98.9 L1614 107.5 L1624 114.4 L1630 117.9 L1652 127.1 L1666 132.4 L1680 139.4 M1474.5 16 L1491.8 30 L1506 38.4 L1520 49.5 L1534 58 L1544 65.2 L1558 73 L1562 76.3 L1570 84.3 L1574.7 88 L1594.9 102 L1612 111.2 L1626 121.8 L1648 132.3 L1666 138 L1680 145.4 M1468.1 16 L1490 33.4 L1506 43.3 L1518 53.5 L1530 61.3 L1541.7 70 L1556 77.9 L1569.6 90 L1592 105.4 L1608.3 114 L1624 126.8 L1644 138.4 L1648 139.8 L1658 141.5 L1664 143.1 L1680 151.2 M1461.9 16 L1486 35.1 L1503.1 46 L1516 57.2 L1536 72.6 L1554 82.7 L1566 92.9 L1590 109.7 L1606 118.2 L1620 130.4 L1638 142.7 L1642 144.9 L1646 146.2 L1662 148.4 L1680 156.6 M1455.7 16 L1462.6 22 L1483.7 38 L1502 49.9 L1534 77.7 L1552 87.6 L1586 112.8 L1602.1 122 L1616 134.1 L1634 146.8 L1642 150.9 L1646 152 L1660 154 L1680 161.5 M1449 16 L1461.1 26 L1478 38.6 L1500 53.1 L1532 82.3 L1550 92.7 L1569.3 106 L1586 118.8 L1600 127.8 L1614 139.5 L1629.6 150 L1636 153.6 L1642 156.1 L1658 159.5 L1680 166.1 M1441.1 16 L1448 20.6 L1474 40.7 L1498 56.3 L1508.7 66 L1524 81.2 L1532 87.8 L1563.7 108 L1608.4 142 L1617 148 L1630.7 156 L1640 160 L1664 166.8 L1680 170.7 M1432.1 16 L1444 23 L1470 42.8 L1494 58.2 L1504 66.6 L1522 84.8 L1532 93.2 L1540 98.9 L1557.6 110 L1591.1 136 L1614 151.9 L1624.9 158 L1640 164.5 L1662 171.3 L1680 175.4 M1422.9 16 L1446 29.4 L1467.7 46 L1494 63.4 L1504 71.9 L1518 86.5 L1532 98.5 L1538 103.1 L1552 112.3 L1565.8 124 L1589.7 142 L1615.4 158 L1632 165.7 L1642 169.6 L1660 175.5 L1680 180.4 M1414.1 16 L1448 35.7 L1463.8 48 L1496 70.1 L1502 75.4 L1513.8 88 L1532 103.9 L1548.9 116 L1562 128.7 L1582 144 L1598 152.2 L1614.1 162 L1634 170.9 L1660 180.2 L1680 185.8 M1406.5 16 L1430 31 L1446 39.2 L1460 50 L1494.1 74 L1500 79.1 L1512.2 92 L1532 109.4 L1546 119.6 L1559.7 134 L1578 148.2 L1584 151.5 L1596 156.1 L1612 165.3 L1636 176.2 L1666 187.1 L1680 191.5 M1399.4 16 L1406 21.1 L1426 34 L1446 44.2 L1458 53.5 L1470 61.4 L1482 70.8 L1492.4 78 L1498 83 L1508 93.7 L1518 102 L1528 111.6 L1543.9 124 L1556 137.4 L1576 153 L1582 156 L1596 161 L1608 167.6 L1622.4 174 L1636 180.9 L1652 186.6 L1668 193.4 L1680 197.4 M1391.4 16 L1401.7 24 L1414 31.3 L1424 38.1 L1440 45.5 L1444 47.9 L1454.6 56 L1468 64.8 L1480 74.6 L1490.7 82 L1495.3 86 L1504.6 96 L1516.3 106 L1526 115.7 L1540 126.8 L1552 140.2 L1572.4 156 L1578 159.2 L1592 164.2 L1606 171 L1618 176 L1636 185.6 L1650 190.8 L1666 198.5 L1680 203.3 M1375.6 16 L1386 19.9 L1397.7 28 L1410 34.5 L1422.1 42 L1440 50.3 L1453.1 60 L1465.5 68 L1477.5 78 L1491.5 88 L1502 99 L1514 109.5 L1524 120 L1536.1 130 L1549.3 144 L1571 160 L1578 163.6 L1590 168.1 L1602.7 174 L1617.7 180 L1632 188.4 L1648 195.4 L1660 202 L1680 209.6 M1360.3 16 L1368 19.9 L1380 24.5 L1396 33.8 L1408 39.3 L1420.5 46 L1436 52.8 L1461 70 L1474 80.7 L1486 88.8 L1489.9 92 L1500 102.4 L1510.7 112 L1522 124.3 L1532.8 134 L1546 147.4 L1566.7 162 L1574 166.1 L1598 176.7 L1616 183.6 L1630 192.1 L1645.8 200 L1656 206.5 L1660 208.3 L1672 212.3 L1680 216.3 M1348.9 16 L1356 21.2 L1364 25.6 L1380 32.2 L1396 40.1 L1432 55.2 L1438 58.6 L1460 74.6 L1472 84.7 L1486 94.2 L1506.9 114 L1520 128.6 L1539.8 148 L1548 154.6 L1559.1 162 L1572 169.3 L1596 180.6 L1615.1 188 L1628 195.9 L1640 202.2 L1654 211.7 L1670 217.6 L1680 223 M1340.5 16 L1346 21.7 L1350 24.9 L1364 33.3 L1380 38.8 L1401.2 48 L1428 57.8 L1436 62 L1456 76.8 L1470 88.7 L1486 100 L1504.9 118 L1518 132.9 L1530.8 146 L1540 154 L1548 159.9 L1557.7 166 L1570 172.6 L1596 185.3 L1614 192.8 L1637.3 206 L1652 216.2 L1668 222.9 L1680 229.3 M1333.5 16 L1340 23.8 L1344 27.5 L1362 39.1 L1368 41.4 L1382 45.2 L1400 52.8 L1426 61.5 L1434 65.4 L1451.1 78 L1466 90.9 L1484 104.4 L1500 119.5 L1518 139.7 L1526 148 L1546.5 164 L1554 168.6 L1570 176.9 L1596 190.2 L1614 198.5 L1634 209.3 L1652 221.3 L1680 235.1 M1325.1 16 L1328 18.4 L1338.8 30 L1360 43.8 L1366 46.2 L1382 50.3 L1398 56.9 L1426 66.1 L1434 70.1 L1447.5 80 L1464 94.5 L1485.6 112 L1493.9 120 L1521.1 150 L1544 167.1 L1551.9 172 L1600 197.3 L1630 212.3 L1650 224.9 L1680 240.6 M1304.7 16 L1318 20.3 L1322 22.2 L1335.4 34 L1360 48.6 L1366 50.7 L1380 54.5 L1394 60.2 L1424 70.2 L1434 74.9 L1446 83.8 L1485.3 118 L1490.9 124 L1500.7 136 L1515.9 152 L1522 157 L1547.4 174 L1586 194.6 L1602 203.8 L1630 217.6 L1650 229.4 L1680 246.1 M1291.1 16 L1302 22.2 L1318 28.2 L1332.1 38 L1358 52 L1376 57.7 L1390 63.5 L1406 68.5 L1426 76 L1434 79.9 L1442.4 86 L1482 121.3 L1486.4 126 L1497.2 140 L1512.8 156 L1517.7 160 L1530 167 L1543 176 L1558 183.9 L1570 191.4 L1584 198.5 L1600 208 L1614 214.4 L1638 226.9 L1680 251.8 M1277.4 16 L1296 26.3 L1315.7 34 L1330 42.5 L1342 48 L1354 54.5 L1360 57 L1374 61.5 L1386 67 L1402.7 72 L1432.1 84 L1438 88 L1454.7 102 L1478.4 124 L1482.2 128 L1489.1 138 L1494 143.8 L1510 159.9 L1516 164.6 L1526.3 170 L1540 179.1 L1553.7 186 L1570 196.6 L1581 202 L1596 211.2 L1611.7 218 L1639 232 L1666 248 L1680 257.7 M1251.6 16 L1258 17.5 L1264 19.9 L1279.1 30 L1288 34.4 L1316 44.9 L1350 60.6 L1369.7 68 L1384 75.4 L1398 80.2 L1410.7 86 L1422.4 90 L1428 92.5 L1451.5 110 L1456 114 L1464 122.5 L1476 133.9 L1484 145.1 L1488.2 150 L1504.7 166 L1510 170.4 L1534 185.6 L1551.6 194 L1564 202.4 L1576 208.8 L1590 217.6 L1608 224.7 L1636 239.1 L1648 246.9 L1662 254.6 L1680 268.5 M1240 26.7 L1254 28.5 L1260 30.3 L1274 38.7 L1294 47.9 L1300 50.1 L1314 53.7 L1320 56 L1342 66.2 L1366 75.7 L1402 95.4 L1408 97.6 L1418 100.1 L1424 102.8 L1448 119.7 L1458 130.2 L1468.6 140 L1478.3 152 L1484 158 L1504 175.7 L1528 193.4 L1534 197 L1546 202.5 L1570 215 L1586 224.9 L1604 231.8 L1628 243.8 L1644 255.3 L1658 262.8 L1669.9 272 L1680 278.9 M1240 39.7 L1254 42.5 L1266 47.2 L1280 51.7 L1296 59 L1310 62.3 L1316 64.3 L1366 86.9 L1398 105.8 L1406 109.3 L1418 113.5 L1428 118.7 L1437 124 L1442.4 128 L1462 146.9 L1476 161.9 L1486 171.2 L1516 195.8 L1530 206.4 L1540 212 L1566 222.5 L1584 232.4 L1600 239.3 L1622 250 L1627.9 254 L1640 263.9 L1652 270.8 L1662.3 278 L1674 284.9 L1680 289.1 M1240 55 L1250 56.2 L1274 61.7 L1290 67.2 L1306.9 72 L1320 78.4 L1335.7 84 L1350 91.9 L1364 97.5 L1378.5 106 L1404 119.3 L1424 128.9 L1436 136.5 L1446 144.3 L1482 178.7 L1495.8 190 L1508 201.4 L1528 216.9 L1536 221.1 L1572 235.1 L1613.4 256 L1620 260.1 L1636 272.4 L1658 285.6 L1670 292.1 L1680 299.3 M1240 68.4 L1252 69.8 L1300 80.7 L1316 88.5 L1330 93.8 L1342 99.5 L1358 105.1 L1374 113.8 L1390 120.9 L1401.9 128 L1416 135.5 L1429.8 146 L1442 154.1 L1453.1 164 L1466 174.1 L1478 185.9 L1490 195.6 L1502.2 208 L1524 225.8 L1530 228.9 L1542 233 L1556 239.1 L1570 244.1 L1598 257.7 L1608.2 264 L1634 282.1 L1664 297.7 L1680 308.7 M1240 79.2 L1254 83.4 L1274 86.2 L1302 92.8 L1336 107.2 L1356 113.5 L1368.8 120 L1384 126.8 L1410 142.1 L1424 154.2 L1436 162.3 L1448 172.7 L1460 180.7 L1472 192 L1484 201.2 L1497.2 214 L1522 234.9 L1526 237 L1548 246.4 L1564 252.4 L1580 261.3 L1590 264.6 L1596 267.2 L1618 281.3 L1632 291 L1658 303 L1670 310.4 L1680 317.8 M1240 89.7 L1246 92.5 L1252 94.5 L1270 96.3 L1284 99.6 L1298 101.9 L1304 103.4 L1336 115.7 L1354 121.7 L1378 132.5 L1404 149.2 L1418 161.6 L1430 169.7 L1442 179.5 L1454.2 188 L1468 200.7 L1480 209.5 L1502.4 228 L1515.6 240 L1522 244.6 L1540 254.9 L1558.5 262 L1572 270.4 L1576 272.1 L1592 276.9 L1612 286.6 L1632 299.9 L1648 306.9 L1666 316.8 L1672 320.9 L1680 328 M1392 228 L1391.7 230 L1393.4 234 L1399.1 240 L1406 243.9 L1410 245.3 L1414 246.2 L1416 245.5 L1416.3 244 L1414.5 240 L1411.4 236 L1407 232 L1402 228.8 L1398 227.2 L1394 226.9 L1392 228 M1240 100.5 L1248 103.8 L1256 105.9 L1274 108.7 L1292 110.2 L1302 112.5 L1326.5 120 L1361.2 134 L1373.9 140 L1396.5 156 L1414 170.8 L1447.3 194 L1468 212.6 L1496.4 234 L1518 252.7 L1528 260.2 L1542 268.3 L1566 279.9 L1586 285.6 L1606 292.4 L1612 295.1 L1628 305.8 L1640.3 312 L1664.7 326 L1669.9 330 L1680 339.4 M1374 213.7 L1372.4 216 L1372.3 218 L1374.6 224 L1381.3 232 L1394 244.2 L1430 268.2 L1444.1 280 L1450 283.8 L1456 286.4 L1464 288.2 L1468 288 L1469.9 286 L1469.8 284 L1468.2 280 L1465.7 276 L1460.7 270 L1434 245.6 L1422 233.5 L1413 226 L1402 218.5 L1394 214.9 L1382 212.4 L1378 212.4 L1374 213.7 M1240 111.8 L1252 116.2 L1266 119.7 L1274 120.4 L1290 119.9 L1306 123.9 L1320 126.6 L1328 129.4 L1354.3 142 L1380 156.7 L1416 185 L1436.3 198 L1454 213.3 L1466.6 226 L1481.8 236 L1486.9 240 L1503.9 254 L1514 264.6 L1518 267.8 L1544.6 282 L1562 289.5 L1570 291.9 L1584 294.7 L1598 298.4 L1604 300.3 L1610 302.9 L1622 310.7 L1636 318.7 L1648 327.2 L1659.3 334 L1664 337.7 L1672.6 346 L1680 351 M1368 200 L1362 201 L1360 202.3 L1358.9 204 L1358.5 208 L1360.6 214 L1365.2 222 L1370.2 228 L1392 247.8 L1428 273 L1444 286 L1452 290.7 L1466 296.9 L1476 299.5 L1480 299.7 L1484 299.1 L1486.4 298 L1488 296 L1488.5 294 L1487.9 290 L1483.4 282 L1472.7 268 L1463.2 258 L1456 249.4 L1452 245.6 L1440 238 L1426 226.2 L1402 209.1 L1396 206.5 L1382 202.3 L1374 200.5 L1368 200 M1240 124.3 L1248 127.2 L1274 133.3 L1292 133.7 L1316 136.7 L1322 138.9 L1332 144.4 L1340 148 L1346 151.9 L1349.7 156 L1356 165.1 L1360 168.3 L1367.4 172 L1369.9 174 L1371.3 176 L1371.8 178 L1371 180 L1367.4 182 L1356 182.3 L1352 183.1 L1348 185.8 L1346.5 188 L1344.7 194 L1344.9 200 L1346.9 206 L1350.8 212 L1360.7 224 L1366.3 230 L1388 248.8 L1426 276.3 L1440.6 288 L1450.1 294 L1462 300.1 L1472 304.1 L1488 307.5 L1496 307.7 L1499.9 306 L1502 303.5 L1503.4 300 L1505.2 290 L1506 287.8 L1507.5 286 L1512 284.4 L1520 284.4 L1526 285.6 L1548 293.3 L1566 300.9 L1572 302.2 L1586 303.9 L1596 306.3 L1602 308.4 L1608 311.3 L1631.2 326 L1654 342 L1670 356.2 L1680 363.3 M1240 136.1 L1256 140.6 L1272 147.3 L1294 155 L1298 156 L1308 156.5 L1312 157.7 L1316 160.1 L1320.4 164 L1323.3 168 L1328.6 184 L1336.7 202 L1341.6 210 L1346.9 216 L1363.3 232 L1388 252.6 L1424 279 L1440 291.6 L1454 300 L1464 305.1 L1471.2 308 L1490.5 314 L1498 315.6 L1504 315.2 L1508 313.7 L1512 310.7 L1518 304.3 L1522 301.8 L1526 300.7 L1534 300.2 L1540 300.5 L1546 301.7 L1566 310.2 L1586 313.1 L1596 315.7 L1604 319.1 L1610 322.6 L1626 334.3 L1646 347.8 L1656 355.5 L1674 371.4 L1680 375.9 M1240 146 L1250 149.7 L1262.2 156 L1276 161.7 L1280 164 L1291.1 172 L1306.7 180 L1310 182.7 L1326 198.9 L1334.8 210 L1340.2 216 L1360.6 234 L1388 256.1 L1436 292.4 L1444 297.8 L1454.7 304 L1470 311.3 L1492 319.4 L1500 321.4 L1506 321.8 L1512 321 L1516 319.7 L1530 313 L1536 311.5 L1542 311.4 L1548 312.8 L1562 318.1 L1600 327.8 L1607.7 332 L1620 342 L1634 350.9 L1654 365.2 L1659.6 370 L1670 380.7 L1680 387.9 M1240 155.9 L1272 171.1 L1284 178.6 L1298 185.6 L1304 189.4 L1322 203.9 L1333.9 216 L1340.6 222 L1388 259.6 L1435.6 296 L1454 307.2 L1468 314 L1492 323.8 L1500 326.3 L1508 327.5 L1516 327.8 L1522 327.1 L1536 324.1 L1544 324.2 L1568 329.7 L1582 334.7 L1598 338.9 L1603.8 342 L1614 349.5 L1628 357.5 L1650 373.5 L1654.8 378 L1664 388.9 L1680 401.6 M1240 166.9 L1250 170.4 L1264 176.6 L1281 186 L1296 193 L1306 199.2 L1318 207.6 L1336.8 224 L1371.9 250 L1406 277.5 L1430 295.9 L1438 301.5 L1450 308.6 L1466 316.7 L1490 327.3 L1500 330.7 L1518 334.6 L1524 334.9 L1536 334.4 L1544 335.3 L1568 341.3 L1588 347.2 L1594 349.5 L1608 357.8 L1622 364.6 L1643.5 380 L1648 384.2 L1660 398.7 L1674 410.9 L1680 415.3 M1240 177.8 L1250 180.1 L1262 184.7 L1298 201.7 L1312 209.7 L1320 215.4 L1336 228.2 L1370 252.2 L1406 281.7 L1428 298.8 L1440 306.9 L1454 314.7 L1490 331.5 L1510 338.6 L1520 341.2 L1536 342.6 L1542 343.9 L1556 348.6 L1582 355.5 L1594 360.7 L1616.8 374 L1636 387.1 L1641.6 392 L1652.4 404 L1660.7 412 L1670.4 420 L1680 426.3 M1240 187.8 L1258 192.3 L1268 195.6 L1300 209.6 L1312 215.9 L1337.5 234 L1367.2 254 L1422 299.3 L1436 309.2 L1446 314.9 L1488 335.2 L1510 344 L1520 347.2 L1536 350.3 L1552 355.8 L1566 359.9 L1586 367.1 L1594 371 L1601.4 376 L1622.6 392 L1658 421.7 L1680 436.6 M1240 197.4 L1250 199.9 L1262 201.9 L1268 203.6 L1282 209.6 L1300 216.1 L1316 224.5 L1366.8 258 L1376.7 266 L1414 299.1 L1430 311 L1440 317.3 L1468 330.1 L1490 341.1 L1508 348.9 L1516 351.9 L1532 356.5 L1546 361.7 L1560.3 366 L1588 378.3 L1593.6 382 L1604 391.3 L1614 398.8 L1626.2 410 L1640 419.3 L1652 428.9 L1670 439.9 L1674.8 444 L1680 449.6 M1240 206.5 L1260 210 L1266 211.6 L1278 215.9 L1296 221.3 L1316 230.6 L1352 252.5 L1365.6 262 L1375.2 270 L1390 285 L1410 303.4 L1436 322.2 L1468 335.8 L1490 347 L1504 353.4 L1527 362 L1542 368.4 L1558 373.6 L1582.3 386 L1587.6 390 L1597.7 400 L1608.7 408 L1620 417.6 L1634 426 L1646.6 436 L1658 443 L1661.7 446 L1664.9 450 L1667.4 456 L1668.4 462 L1668.2 470 M1240 215.2 L1256 217.9 L1272 222.7 L1286 225.4 L1294 227.7 L1318 238 L1334.8 248 L1350 255.7 L1361.3 264 L1372 273.8 L1386 291.1 L1402 306.6 L1406.1 310 L1418 317.8 L1432 328.3 L1438 331.3 L1472 344.4 L1494 356.1 L1523.1 368 L1538 375.3 L1553.8 382 L1573.3 392 L1578 394.9 L1594 409.4 L1614 424.4 L1632 435.3 L1647.7 448 L1651.6 452 L1654 456 L1656 464 L1658.6 470 M1240 224 L1248 224.8 L1256 226.7 L1266 230.1 L1277.9 232 L1288 232.8 L1296 235.1 L1316.5 242 L1332 250.4 L1347.7 258 L1355.9 264 L1366.6 274 L1371 280 L1377.4 294 L1380 298 L1385.9 304 L1399.5 316 L1412 323.1 L1424 332.2 L1433.5 338 L1455.9 348 L1468 350.8 L1474 353.1 L1490.1 362 L1524 377 L1534 382.6 L1552 393.9 L1572 404.6 L1607.9 430 L1624 440.6 L1630 445.3 L1642.8 458 L1646.9 464 L1650.2 470 M1240 227.8 L1252 230 L1270 234.8 L1290 237 L1308 242.3 L1316 245.3 L1330 253.4 L1344.3 260 L1352.4 266 L1364.3 278 L1368 284 L1373 296 L1377 302 L1390.1 314 L1397.6 320 L1412 328.4 L1427.7 340 L1448 350.9 L1454 353.4 L1466 356 L1472 358.1 L1484 364.5 L1498 370.6 L1524 383.6 L1530 387.3 L1545 398 L1564 409.5 L1584 420.2 L1608 435.7 L1624.1 448 L1634 458 L1637 462 L1641.6 470 M1240 231.8 L1252 233.9 L1270 238.5 L1290 240.8 L1306 245 L1314 248.1 L1328 256.8 L1342 263.3 L1348.2 268 L1360.8 282 L1364 287.3 L1368.7 298 L1372.7 304 L1378.9 310 L1394 322.3 L1410 332.1 L1424 343 L1446 356 L1452 358.6 L1468 363 L1480 368.7 L1496 375.2 L1510 383.7 L1522.3 390 L1536 401 L1550 408.9 L1560 415.4 L1580 424.6 L1602 437.2 L1611.5 444 L1624 455.5 L1629.6 462 L1634.3 470 M1240 235.9 L1254 238.4 L1270 242.3 L1286 244 L1296 245.8 L1306 248.4 L1314 252 L1326 260.4 L1336.9 266 L1342 269.5 L1356 286.1 L1365.5 302 L1370.4 308 L1388 322.5 L1408 335.8 L1424 348.6 L1446 362 L1463 368 L1476 374 L1492.9 380 L1506 388.6 L1518 395.3 L1530 405.7 L1534 408.4 L1546 414.2 L1558.9 422 L1574 428.2 L1600 441.7 L1608 447.5 L1616.7 456 L1624 463.9 L1628 470 M1240 240.1 L1254 242.4 L1272 246.7 L1298 249.9 L1306 252.1 L1312 255 L1324 264.3 L1334 270.9 L1337.5 274 L1346 285.5 L1354 294.7 L1361 304 L1368.6 312 L1383.8 324 L1404 338 L1420 351.5 L1430 358.9 L1438 364 L1446 368.1 L1460 373.8 L1474 380.7 L1490 386.2 L1514 400.7 L1525 410 L1530.9 414 L1542 419.3 L1554 426.1 L1570 432.4 L1584 440.1 L1598 446.7 L1606 453 L1618 465.6 L1621.5 470 M1240 244.2 L1254 246.6 L1270 250.7 L1298.8 254 L1304 255.4 L1309.5 258 L1314.8 262 L1330.7 276 L1343.2 292 L1365 314 L1377.3 324 L1399.9 340 L1422 359.3 L1430 365.5 L1444 373.5 L1472 387.3 L1486 393.4 L1508 404.8 L1526 417.5 L1549.3 430 L1568 437.5 L1582 445.6 L1594 451.1 L1600.5 456 L1613.7 470 M1240 248.1 L1252 250.5 L1268 255 L1298 258.3 L1304 260 L1307.7 262 L1312.8 266 L1321.1 274 L1326.6 280 L1336.2 292 L1352.7 308 L1372 324.8 L1395.6 342 L1409.6 354 L1422 365.8 L1427.5 370 L1448 382.5 L1462 389.4 L1485.6 402 L1508 412.6 L1523.7 422 L1548 435.2 L1566 442.9 L1578 450 L1590 455.9 L1596 460.4 L1604.7 470 M1240 252 L1250 254.4 L1264 259.2 L1294 262.7 L1300 264.1 L1306 266.9 L1314 273.8 L1329.6 292 L1344.5 306 L1372 329.5 L1388.7 342 L1408 358.6 L1418 368.6 L1424 373.4 L1446 388.3 L1460 395.3 L1474 403.6 L1516 423.5 L1586 460.9 L1590.3 464 L1596.3 470 M1240 255.8 L1248 258.1 L1262 264 L1286 266.7 L1298 269.9 L1304 272.8 L1312 279.5 L1324.6 294 L1358 321.5 L1372 334.2 L1382 342 L1394 353.6 L1406 363.3 L1417 374 L1431.6 384 L1442 392.1 L1458 401 L1470 408.4 L1484 414.5 L1498.8 422 L1516 429.2 L1532 437.2 L1553.7 450 L1570 460.3 L1584 467.7 L1587.2 470 M1240 259.6 L1247 262 L1260 268.6 L1266 269.9 L1276 270.6 L1283.7 272 L1296 276.3 L1303.5 280 L1308.4 284 L1320 296.5 L1332 305.2 L1356.2 324 L1368 335.5 L1380 346 L1391.1 358 L1403.8 368 L1414 377.7 L1428 386.9 L1440 396.5 L1468 413.8 L1482 419.3 L1496 426.5 L1514 433.9 L1536 444.9 L1544.2 450 L1572.1 470 M1240 263.5 L1246 265.9 L1256 271.7 L1260 273.5 L1264 274.6 L1280 277.4 L1296 283 L1302 286 L1306 289.2 L1316.9 300 L1330 308.4 L1354 326.2 L1376.1 348 L1386 359.7 L1390 363.6 L1400 371.2 L1412 382 L1426 390.9 L1438 400.6 L1464.9 418 L1480.2 424 L1494 431.1 L1510 437.7 L1534.8 450 L1541 454 L1561 470 M1240 267.7 L1260 278.1 L1294 288.3 L1300 291.1 L1314 303.2 L1328 311.6 L1352 328.6 L1374.3 352 L1386 365.8 L1398 375.5 L1410 386.1 L1422.5 394 L1435.2 404 L1448 412 L1460 420.6 L1466 423.7 L1478 428.5 L1492 435.6 L1506 441.4 L1520 449.3 L1532 454.8 L1538 458.7 L1551.3 470 M1240 272 L1256 280.8 L1262 283.5 L1278 290 L1294 293.9 L1300 297 L1311 306 L1326 314.6 L1350 331.1 L1354.9 336 L1362 344.7 L1370.8 354 L1380 365.2 L1384 369.3 L1406 388.3 L1420.1 398 L1432 407.2 L1460 425.7 L1476 433 L1488 439.3 L1502 445.2 L1516 453.8 L1530 460.6 L1534.8 464 L1541.5 470 M1240 276.6 L1258 286.3 L1274 294.2 L1280 296.3 L1292 298.8 L1296 300.3 L1310 309.9 L1324.6 318 L1348.1 334 L1352 338 L1361.7 350 L1381.5 372 L1404.4 392 L1428 410 L1456 428.3 L1486 443.9 L1500 450.2 L1514 459.4 L1526 465.5 L1532.1 470 M1240 281.2 L1272 298.4 L1278 300.7 L1290 303.6 L1296 305.9 L1306 312 L1321 320 L1342 334 L1348.8 340 L1358.2 352 L1378 373.6 L1404 396.6 L1424 412.8 L1432 418.5 L1452 431 L1494.9 454 L1510 463.8 L1521.7 470 M1240 285.8 L1270 302.1 L1278 305.4 L1294 310.5 L1316 321.4 L1338.1 336 L1345.3 342 L1356.5 356 L1373.4 374 L1410 407 L1420 415.4 L1438 428.3 L1472 446.8 L1490.6 458 L1509.1 470 M1240 290.5 L1256 299.8 L1264.5 304 L1278 310 L1294 315.9 L1314 324.8 L1320 328.2 L1334.2 338 L1342 344.5 L1353.2 358 L1366.5 372 L1414 416.3 L1434.5 432 L1474 453.1 L1484.5 460 L1497.5 470 M1240 295.2 L1256 304.8 L1280 315.5 L1314 329.6 L1330 339.8 L1338 346.4 L1359.6 370 L1393.4 402 L1410 418.9 L1432 436 L1453.9 448 L1468 456.7 L1475.5 462 L1485.1 470 M1240 300 L1248.8 306 L1254 308.7 L1266 313.6 L1278 319.3 L1294 325.8 L1312 334 L1320 338.3 L1328.5 344 L1336 350.4 L1358 373.1 L1374.2 388 L1391.9 406 L1402 417.8 L1406 421.7 L1418 430.6 L1432 442.2 L1450.8 456 L1466 464.6 L1473.7 470 M1240 305.1 L1250 311.6 L1264 317.3 L1278 324 L1292.8 330 L1318 342.8 L1326.1 348 L1340 360 L1356.4 376 L1370 388.2 L1390.2 410 L1400 422.5 L1422.2 444 L1448 463.5 L1459.8 470 M1240 310.3 L1249.6 316 L1262 321 L1274 327.1 L1292 334.4 L1304 341.9 L1320 349.9 L1338 363.4 L1366 388.6 L1371.2 394 L1386.1 412 L1394.3 426 L1400 433.2 L1420 451.8 L1444.3 470 M1240 315.3 L1246 318.7 L1258.5 324 L1272 331 L1288 337.1 L1302 346.4 L1318 354.7 L1342 371.3 L1360.7 388 L1366.5 394 L1388.5 430 L1393 436 L1414 455.5 L1432.1 470 M1240 320.1 L1256 327.2 L1270 334.8 L1286 340.9 L1298 349.2 L1314 357.7 L1324 364.7 L1336 371.5 L1342 375.9 L1361.3 398 L1372.6 418 L1381.6 432 L1386.1 438 L1394 446 L1421.2 470 M1240 324.8 L1252.8 330 L1268 338.7 L1282.2 344 L1296 353.4 L1310 361.1 L1320.9 370 L1334 379 L1338 383 L1354.5 402 L1358 407.5 L1365.5 422 L1377.1 438 L1388 449.2 L1411.9 470 M1240 336 L1252 341.3 L1276 353.9 L1288 361.2 L1304 369 L1330 386.8 L1334.7 392 L1345.5 406 L1356.7 424 L1368 438.6 L1375 446 L1388 458 L1402.4 470 M1240 348.7 L1258 356.4 L1286 371.5 L1300 378.4 L1312.3 386 L1322 392.9 L1330 400.6 L1344.3 422 L1349.1 428 L1365.4 446 L1391 470 M1240 360.7 L1248 364 L1262 371.4 L1278 378.1 L1300 390.1 L1308 395.5 L1313.1 400 L1328 415.6 L1338.9 430 L1350 439.8 L1362 451.8 L1372 460.7 L1380.6 470 M1240 371.8 L1256 381.3 L1272 387.4 L1284 394 L1294 398.5 L1299.6 402 L1333.2 436 L1348 447.6 L1366 464.4 L1371.3 470 M1240 383.8 L1250.7 390 L1264 396.5 L1276 404 L1290 409.4 L1294 411.6 L1326.6 440 L1344 453.4 L1361.1 470 M1240 395.5 L1255.8 404 L1272 414.3 L1290 422.9 L1308 434.4 L1336.5 456 L1350.7 470 M1240 406.2 L1254 415.1 L1270 424.4 L1292 435.1 L1304.2 442 L1330 459.5 L1341.2 470 M1240 416.9 L1248 422.5 L1270 435.6 L1288 442.7 L1296 446.9 L1314 458.3 L1330.3 470 M1240 427.8 L1253.7 436 L1266 444.3 L1272 446.8 L1282.7 450 L1290 453.4 L1307.5 464 L1315.4 470 M1240 438.3 L1248 442.4 L1264 452.9 L1282 460 L1300.5 470 M1240 448.8 L1260 460 L1272.9 466 L1280.1 470 M1240 459.7 L1260.9 470" fill="none" stroke="#8c8c8c" stroke-width="0.9" /><path clip-path="url(#c3)" d="M1666.5 16 L1680 19.8 M1654.4 16 L1658 18.3 L1664 20.9 L1680 25.1 M1646.4 16 L1652 20.4 L1658.6 24 L1680 30.1 M1638.4 16 L1649.1 24 L1654 26.9 L1660 29.2 L1680 35 M1629.9 16 L1647.4 28 L1652 30.6 L1680 39.6 M1622.6 16 L1644 30.5 L1650 34 L1680 43.8 M1616.3 16 L1621.5 20 L1648 37 L1672 45.7 L1680 47.9 M1610.1 16 L1617.8 22 L1646.2 40 L1652 42.7 L1668 48.6 L1680 51.8 M1603.5 16 L1613.9 24 L1628 32.1 L1642 41.3 L1648 44.7 L1666 52.1 L1680 55.7 M1596.8 16 L1604 22 L1609.9 26 L1628 36 L1648 48.5 L1664 55.8 L1670 57.6 L1680 59.7 M1590.8 16 L1597.3 22 L1604 26.9 L1628 39.9 L1652 54.6 L1664 60.2 L1680 64 M1585.3 16 L1593.6 24 L1600 28.8 L1630 45 L1654 60.1 L1666 65.3 L1680 68.7 M1579.9 16 L1590 25.8 L1596 30.5 L1610 38.7 L1631.7 50 L1652 63.4 L1664 69.2 L1680 73.8 M1573.7 16 L1589.3 30 L1598 36 L1614 45.1 L1630 53.2 L1646 64.4 L1654 69.1 L1666 74.8 L1680 79.2 M1566.4 16 L1576 23 L1586 32 L1591.2 36 L1612 48.5 L1630 57.8 L1646 69.4 L1666 79.8 L1680 84.6 M1559 16 L1574 26.4 L1588 38.2 L1612 53.2 L1626 60.2 L1642 72.3 L1664.1 84 L1680 89.7 M1552.5 16 L1560 22 L1572 29.7 L1586 41.5 L1610 56.9 L1624 64.2 L1640 76.7 L1662 88 L1680 94.6 M1546.1 16 L1555.8 24 L1570 33 L1584 44.7 L1606.4 60 L1622 68.5 L1636.3 80 L1660 92 L1680 99.4 M1538.3 16 L1552 26.3 L1568 36.2 L1580 46.5 L1602 62.9 L1618.6 72 L1634 84 L1656 95.2 L1672 100.4 L1680 104.1 M1529.1 16 L1550 30 L1564 38 L1600 67.7 L1616 76.4 L1632 87.8 L1654 99.1 L1672 104.7 L1680 108.9 M1520.7 16 L1528 21.5 L1538 28 L1564 42.7 L1594 69.3 L1602 75.1 L1614 81.5 L1630 91.6 L1648 101.1 L1656 104.4 L1670 108.4 L1680 113.8 M1512.9 16 L1534 31.5 L1558 43.8 L1564 47.7 L1573.7 56 L1592 73.6 L1602 80.9 L1646 104.8 L1654 108.1 L1670 113 L1680 118.6 M1504 16 L1514 22.6 L1532 35.9 L1556 47.9 L1562 51.6 L1572 59.9 L1588.1 76 L1596 82.2 L1604 87.6 L1644 108.4 L1652 111.8 L1668 117.1 L1680 123.5 M1494.9 16 L1512 26.7 L1529.9 40 L1562 57.3 L1570 63.8 L1583.9 78 L1602 91.6 L1636 109.5 L1650 115.7 L1667.3 122 L1680 128.5 M1487.5 16 L1498 23.9 L1512 32 L1526 42.8 L1562 63.3 L1567.7 68 L1579.4 80 L1600 95.3 L1616 103.7 L1632 113.1 L1666 126.8 L1680 133.7 M1480.9 16 L1493.2 26 L1510 36 L1522.7 46 L1536 53.6 L1548 61.5 L1560 68.1 L1564 71.3 L1576 83.2 L1598 98.9 L1614 107.5 L1624 114.4 L1630 117.9 L1652 127.1 L1666 132.4 L1680 139.4 M1474.5 16 L1491.8 30 L1506 38.4 L1520 49.5 L1534 58 L1544 65.2 L1558 73 L1562 76.3 L1570 84.3 L1574.7 88 L1594.9 102 L1612 111.2 L1626 121.8 L1648 132.3 L1666 138 L1680 145.4 M1468.1 16 L1490 33.4 L1506 43.3 L1518 53.5 L1530 61.3 L1541.7 70 L1556 77.9 L1569.6 90 L1592 105.4 L1608.3 114 L1624 126.8 L1644 138.4 L1648 139.8 L1658 141.5 L1664 143.1 L1680 151.2 M1461.9 16 L1486 35.1 L1503.1 46 L1516 57.2 L1536 72.6 L1554 82.7 L1566 92.9 L1590 109.7 L1606 118.2 L1620 130.4 L1638 142.7 L1642 144.9 L1646 146.2 L1662 148.4 L1680 156.6 M1455.7 16 L1462.6 22 L1483.7 38 L1502 49.9 L1534 77.7 L1552 87.6 L1586 112.8 L1602.1 122 L1616 134.1 L1634 146.8 L1642 150.9 L1646 152 L1660 154 L1680 161.5 M1449 16 L1461.1 26 L1478 38.6 L1500 53.1 L1532 82.3 L1550 92.7 L1569.3 106 L1586 118.8 L1600 127.8 L1614 139.5 L1629.6 150 L1636 153.6 L1642 156.1 L1658 159.5 L1680 166.1 M1441.1 16 L1448 20.6 L1474 40.7 L1498 56.3 L1508.7 66 L1524 81.2 L1532 87.8 L1563.7 108 L1608.4 142 L1617 148 L1630.7 156 L1640 160 L1664 166.8 L1680 170.7 M1432.1 16 L1444 23 L1470 42.8 L1494 58.2 L1504 66.6 L1522 84.8 L1532 93.2 L1540 98.9 L1557.6 110 L1591.1 136 L1614 151.9 L1624.9 158 L1640 164.5 L1662 171.3 L1680 175.4 M1422.9 16 L1446 29.4 L1467.7 46 L1494 63.4 L1504 71.9 L1518 86.5 L1532 98.5 L1538 103.1 L1552 112.3 L1565.8 124 L1589.7 142 L1615.4 158 L1632 165.7 L1642 169.6 L1660 175.5 L1680 180.4 M1414.1 16 L1448 35.7 L1463.8 48 L1496 70.1 L1502 75.4 L1513.8 88 L1532 103.9 L1548.9 116 L1562 128.7 L1582 144 L1598 152.2 L1614.1 162 L1634 170.9 L1660 180.2 L1680 185.8 M1406.5 16 L1430 31 L1446 39.2 L1460 50 L1494.1 74 L1500 79.1 L1512.2 92 L1532 109.4 L1546 119.6 L1559.7 134 L1578 148.2 L1584 151.5 L1596 156.1 L1612 165.3 L1636 176.2 L1666 187.1 L1680 191.5 M1399.4 16 L1406 21.1 L1426 34 L1446 44.2 L1458 53.5 L1470 61.4 L1482 70.8 L1492.4 78 L1498 83 L1508 93.7 L1518 102 L1528 111.6 L1543.9 124 L1556 137.4 L1576 153 L1582 156 L1596 161 L1608 167.6 L1622.4 174 L1636 180.9 L1652 186.6 L1668 193.4 L1680 197.4 M1391.4 16 L1401.7 24 L1414 31.3 L1424 38.1 L1440 45.5 L1444 47.9 L1454.6 56 L1468 64.8 L1480 74.6 L1490.7 82 L1495.3 86 L1504.6 96 L1516.3 106 L1526 115.7 L1540 126.8 L1552 140.2 L1572.4 156 L1578 159.2 L1592 164.2 L1606 171 L1618 176 L1636 185.6 L1650 190.8 L1666 198.5 L1680 203.3 M1375.6 16 L1386 19.9 L1397.7 28 L1410 34.5 L1422.1 42 L1440 50.3 L1453.1 60 L1465.5 68 L1477.5 78 L1491.5 88 L1502 99 L1514 109.5 L1524 120 L1536.1 130 L1549.3 144 L1571 160 L1578 163.6 L1590 168.1 L1602.7 174 L1617.7 180 L1632 188.4 L1648 195.4 L1660 202 L1680 209.6 M1360.3 16 L1368 19.9 L1380 24.5 L1396 33.8 L1408 39.3 L1420.5 46 L1436 52.8 L1461 70 L1474 80.7 L1486 88.8 L1489.9 92 L1500 102.4 L1510.7 112 L1522 124.3 L1532.8 134 L1546 147.4 L1566.7 162 L1574 166.1 L1598 176.7 L1616 183.6 L1630 192.1 L1645.8 200 L1656 206.5 L1660 208.3 L1672 212.3 L1680 216.3 M1348.9 16 L1356 21.2 L1364 25.6 L1380 32.2 L1396 40.1 L1432 55.2 L1438 58.6 L1460 74.6 L1472 84.7 L1486 94.2 L1506.9 114 L1520 128.6 L1539.8 148 L1548 154.6 L1559.1 162 L1572 169.3 L1596 180.6 L1615.1 188 L1628 195.9 L1640 202.2 L1654 211.7 L1670 217.6 L1680 223 M1340.5 16 L1346 21.7 L1350 24.9 L1364 33.3 L1380 38.8 L1401.2 48 L1428 57.8 L1436 62 L1456 76.8 L1470 88.7 L1486 100 L1504.9 118 L1518 132.9 L1530.8 146 L1540 154 L1548 159.9 L1557.7 166 L1570 172.6 L1596 185.3 L1614 192.8 L1637.3 206 L1652 216.2 L1668 222.9 L1680 229.3 M1333.5 16 L1340 23.8 L1344 27.5 L1362 39.1 L1368 41.4 L1382 45.2 L1400 52.8 L1426 61.5 L1434 65.4 L1451.1 78 L1466 90.9 L1484 104.4 L1500 119.5 L1518 139.7 L1526 148 L1546.5 164 L1554 168.6 L1570 176.9 L1596 190.2 L1614 198.5 L1634 209.3 L1652 221.3 L1680 235.1 M1325.1 16 L1328 18.4 L1338.8 30 L1360 43.8 L1366 46.2 L1382 50.3 L1398 56.9 L1426 66.1 L1434 70.1 L1447.5 80 L1464 94.5 L1485.6 112 L1493.9 120 L1521.1 150 L1544 167.1 L1551.9 172 L1600 197.3 L1630 212.3 L1650 224.9 L1680 240.6 M1304.7 16 L1318 20.3 L1322 22.2 L1335.4 34 L1360 48.6 L1366 50.7 L1380 54.5 L1394 60.2 L1424 70.2 L1434 74.9 L1446 83.8 L1485.3 118 L1490.9 124 L1500.7 136 L1515.9 152 L1522 157 L1547.4 174 L1586 194.6 L1602 203.8 L1630 217.6 L1650 229.4 L1680 246.1 M1291.1 16 L1302 22.2 L1318 28.2 L1332.1 38 L1358 52 L1376 57.7 L1390 63.5 L1406 68.5 L1426 76 L1434 79.9 L1442.4 86 L1482 121.3 L1486.4 126 L1497.2 140 L1512.8 156 L1517.7 160 L1530 167 L1543 176 L1558 183.9 L1570 191.4 L1584 198.5 L1600 208 L1614 214.4 L1638 226.9 L1680 251.8 M1277.4 16 L1296 26.3 L1315.7 34 L1330 42.5 L1342 48 L1354 54.5 L1360 57 L1374 61.5 L1386 67 L1402.7 72 L1432.1 84 L1438 88 L1454.7 102 L1478.4 124 L1482.2 128 L1489.1 138 L1494 143.8 L1510 159.9 L1516 164.6 L1526.3 170 L1540 179.1 L1553.7 186 L1570 196.6 L1581 202 L1596 211.2 L1611.7 218 L1639 232 L1666 248 L1680 257.7 M1251.6 16 L1258 17.5 L1264 19.9 L1279.1 30 L1288 34.4 L1316 44.9 L1350 60.6 L1369.7 68 L1384 75.4 L1398 80.2 L1410.7 86 L1422.4 90 L1428 92.5 L1451.5 110 L1456 114 L1464 122.5 L1476 133.9 L1484 145.1 L1488.2 150 L1504.7 166 L1510 170.4 L1534 185.6 L1551.6 194 L1564 202.4 L1576 208.8 L1590 217.6 L1608 224.7 L1636 239.1 L1648 246.9 L1662 254.6 L1680 268.5 M1240 26.7 L1254 28.5 L1260 30.3 L1274 38.7 L1294 47.9 L1300 50.1 L1314 53.7 L1320 56 L1342 66.2 L1366 75.7 L1402 95.4 L1408 97.6 L1418 100.1 L1424 102.8 L1448 119.7 L1458 130.2 L1468.6 140 L1478.3 152 L1484 158 L1504 175.7 L1528 193.4 L1534 197 L1546 202.5 L1570 215 L1586 224.9 L1604 231.8 L1628 243.8 L1644 255.3 L1658 262.8 L1669.9 272 L1680 278.9 M1240 39.7 L1254 42.5 L1266 47.2 L1280 51.7 L1296 59 L1310 62.3 L1316 64.3 L1366 86.9 L1398 105.8 L1406 109.3 L1418 113.5 L1428 118.7 L1437 124 L1442.4 128 L1462 146.9 L1476 161.9 L1486 171.2 L1516 195.8 L1530 206.4 L1540 212 L1566 222.5 L1584 232.4 L1600 239.3 L1622 250 L1627.9 254 L1640 263.9 L1652 270.8 L1662.3 278 L1674 284.9 L1680 289.1 M1240 55 L1250 56.2 L1274 61.7 L1290 67.2 L1306.9 72 L1320 78.4 L1335.7 84 L1350 91.9 L1364 97.5 L1378.5 106 L1404 119.3 L1424 128.9 L1436 136.5 L1446 144.3 L1482 178.7 L1495.8 190 L1508 201.4 L1528 216.9 L1536 221.1 L1572 235.1 L1613.4 256 L1620 260.1 L1636 272.4 L1658 285.6 L1670 292.1 L1680 299.3 M1240 68.4 L1252 69.8 L1300 80.7 L1316 88.5 L1330 93.8 L1342 99.5 L1358 105.1 L1374 113.8 L1390 120.9 L1401.9 128 L1416 135.5 L1429.8 146 L1442 154.1 L1453.1 164 L1466 174.1 L1478 185.9 L1490 195.6 L1502.2 208 L1524 225.8 L1530 228.9 L1542 233 L1556 239.1 L1570 244.1 L1598 257.7 L1608.2 264 L1634 282.1 L1664 297.7 L1680 308.7 M1240 79.2 L1254 83.4 L1274 86.2 L1302 92.8 L1336 107.2 L1356 113.5 L1368.8 120 L1384 126.8 L1410 142.1 L1424 154.2 L1436 162.3 L1448 172.7 L1460 180.7 L1472 192 L1484 201.2 L1497.2 214 L1522 234.9 L1526 237 L1548 246.4 L1564 252.4 L1580 261.3 L1590 264.6 L1596 267.2 L1618 281.3 L1632 291 L1658 303 L1670 310.4 L1680 317.8 M1240 89.7 L1246 92.5 L1252 94.5 L1270 96.3 L1284 99.6 L1298 101.9 L1304 103.4 L1336 115.7 L1354 121.7 L1378 132.5 L1404 149.2 L1418 161.6 L1430 169.7 L1442 179.5 L1454.2 188 L1468 200.7 L1480 209.5 L1502.4 228 L1515.6 240 L1522 244.6 L1540 254.9 L1558.5 262 L1572 270.4 L1576 272.1 L1592 276.9 L1612 286.6 L1632 299.9 L1648 306.9 L1666 316.8 L1672 320.9 L1680 328 M1392 228 L1391.7 230 L1393.4 234 L1399.1 240 L1406 243.9 L1410 245.3 L1414 246.2 L1416 245.5 L1416.3 244 L1414.5 240 L1411.4 236 L1407 232 L1402 228.8 L1398 227.2 L1394 226.9 L1392 228 M1240 100.5 L1248 103.8 L1256 105.9 L1274 108.7 L1292 110.2 L1302 112.5 L1326.5 120 L1361.2 134 L1373.9 140 L1396.5 156 L1414 170.8 L1447.3 194 L1468 212.6 L1496.4 234 L1518 252.7 L1528 260.2 L1542 268.3 L1566 279.9 L1586 285.6 L1606 292.4 L1612 295.1 L1628 305.8 L1640.3 312 L1664.7 326 L1669.9 330 L1680 339.4 M1374 213.7 L1372.4 216 L1372.3 218 L1374.6 224 L1381.3 232 L1394 244.2 L1430 268.2 L1444.1 280 L1450 283.8 L1456 286.4 L1464 288.2 L1468 288 L1469.9 286 L1469.8 284 L1468.2 280 L1465.7 276 L1460.7 270 L1434 245.6 L1422 233.5 L1413 226 L1402 218.5 L1394 214.9 L1382 212.4 L1378 212.4 L1374 213.7 M1240 111.8 L1252 116.2 L1266 119.7 L1274 120.4 L1290 119.9 L1306 123.9 L1320 126.6 L1328 129.4 L1354.3 142 L1380 156.7 L1416 185 L1436.3 198 L1454 213.3 L1466.6 226 L1481.8 236 L1486.9 240 L1503.9 254 L1514 264.6 L1518 267.8 L1544.6 282 L1562 289.5 L1570 291.9 L1584 294.7 L1598 298.4 L1604 300.3 L1610 302.9 L1622 310.7 L1636 318.7 L1648 327.2 L1659.3 334 L1664 337.7 L1672.6 346 L1680 351 M1368 200 L1362 201 L1360 202.3 L1358.9 204 L1358.5 208 L1360.6 214 L1365.2 222 L1370.2 228 L1392 247.8 L1428 273 L1444 286 L1452 290.7 L1466 296.9 L1476 299.5 L1480 299.7 L1484 299.1 L1486.4 298 L1488 296 L1488.5 294 L1487.9 290 L1483.4 282 L1472.7 268 L1463.2 258 L1456 249.4 L1452 245.6 L1440 238 L1426 226.2 L1402 209.1 L1396 206.5 L1382 202.3 L1374 200.5 L1368 200 M1240 124.3 L1248 127.2 L1274 133.3 L1292 133.7 L1316 136.7 L1322 138.9 L1332 144.4 L1340 148 L1346 151.9 L1349.7 156 L1356 165.1 L1360 168.3 L1367.4 172 L1369.9 174 L1371.3 176 L1371.8 178 L1371 180 L1367.4 182 L1356 182.3 L1352 183.1 L1348 185.8 L1346.5 188 L1344.7 194 L1344.9 200 L1346.9 206 L1350.8 212 L1360.7 224 L1366.3 230 L1388 248.8 L1426 276.3 L1440.6 288 L1450.1 294 L1462 300.1 L1472 304.1 L1488 307.5 L1496 307.7 L1499.9 306 L1502 303.5 L1503.4 300 L1505.2 290 L1506 287.8 L1507.5 286 L1512 284.4 L1520 284.4 L1526 285.6 L1548 293.3 L1566 300.9 L1572 302.2 L1586 303.9 L1596 306.3 L1602 308.4 L1608 311.3 L1631.2 326 L1654 342 L1670 356.2 L1680 363.3 M1240 136.1 L1256 140.6 L1272 147.3 L1294 155 L1298 156 L1308 156.5 L1312 157.7 L1316 160.1 L1320.4 164 L1323.3 168 L1328.6 184 L1336.7 202 L1341.6 210 L1346.9 216 L1363.3 232 L1388 252.6 L1424 279 L1440 291.6 L1454 300 L1464 305.1 L1471.2 308 L1490.5 314 L1498 315.6 L1504 315.2 L1508 313.7 L1512 310.7 L1518 304.3 L1522 301.8 L1526 300.7 L1534 300.2 L1540 300.5 L1546 301.7 L1566 310.2 L1586 313.1 L1596 315.7 L1604 319.1 L1610 322.6 L1626 334.3 L1646 347.8 L1656 355.5 L1674 371.4 L1680 375.9 M1240 146 L1250 149.7 L1262.2 156 L1276 161.7 L1280 164 L1291.1 172 L1306.7 180 L1310 182.7 L1326 198.9 L1334.8 210 L1340.2 216 L1360.6 234 L1388 256.1 L1436 292.4 L1444 297.8 L1454.7 304 L1470 311.3 L1492 319.4 L1500 321.4 L1506 321.8 L1512 321 L1516 319.7 L1530 313 L1536 311.5 L1542 311.4 L1548 312.8 L1562 318.1 L1600 327.8 L1607.7 332 L1620 342 L1634 350.9 L1654 365.2 L1659.6 370 L1670 380.7 L1680 387.9 M1240 155.9 L1272 171.1 L1284 178.6 L1298 185.6 L1304 189.4 L1322 203.9 L1333.9 216 L1340.6 222 L1388 259.6 L1435.6 296 L1454 307.2 L1468 314 L1492 323.8 L1500 326.3 L1508 327.5 L1516 327.8 L1522 327.1 L1536 324.1 L1544 324.2 L1568 329.7 L1582 334.7 L1598 338.9 L1603.8 342 L1614 349.5 L1628 357.5 L1650 373.5 L1654.8 378 L1664 388.9 L1680 401.6 M1240 166.9 L1250 170.4 L1264 176.6 L1281 186 L1296 193 L1306 199.2 L1318 207.6 L1336.8 224 L1371.9 250 L1406 277.5 L1430 295.9 L1438 301.5 L1450 308.6 L1466 316.7 L1490 327.3 L1500 330.7 L1518 334.6 L1524 334.9 L1536 334.4 L1544 335.3 L1568 341.3 L1588 347.2 L1594 349.5 L1608 357.8 L1622 364.6 L1643.5 380 L1648 384.2 L1660 398.7 L1674 410.9 L1680 415.3 M1240 177.8 L1250 180.1 L1262 184.7 L1298 201.7 L1312 209.7 L1320 215.4 L1336 228.2 L1370 252.2 L1406 281.7 L1428 298.8 L1440 306.9 L1454 314.7 L1490 331.5 L1510 338.6 L1520 341.2 L1536 342.6 L1542 343.9 L1556 348.6 L1582 355.5 L1594 360.7 L1616.8 374 L1636 387.1 L1641.6 392 L1652.4 404 L1660.7 412 L1670.4 420 L1680 426.3 M1240 187.8 L1258 192.3 L1268 195.6 L1300 209.6 L1312 215.9 L1337.5 234 L1367.2 254 L1422 299.3 L1436 309.2 L1446 314.9 L1488 335.2 L1510 344 L1520 347.2 L1536 350.3 L1552 355.8 L1566 359.9 L1586 367.1 L1594 371 L1601.4 376 L1622.6 392 L1658 421.7 L1680 436.6 M1240 197.4 L1250 199.9 L1262 201.9 L1268 203.6 L1282 209.6 L1300 216.1 L1316 224.5 L1366.8 258 L1376.7 266 L1414 299.1 L1430 311 L1440 317.3 L1468 330.1 L1490 341.1 L1508 348.9 L1516 351.9 L1532 356.5 L1546 361.7 L1560.3 366 L1588 378.3 L1593.6 382 L1604 391.3 L1614 398.8 L1626.2 410 L1640 419.3 L1652 428.9 L1670 439.9 L1674.8 444 L1680 449.6 M1240 206.5 L1260 210 L1266 211.6 L1278 215.9 L1296 221.3 L1316 230.6 L1352 252.5 L1365.6 262 L1375.2 270 L1390 285 L1410 303.4 L1436 322.2 L1468 335.8 L1490 347 L1504 353.4 L1527 362 L1542 368.4 L1558 373.6 L1582.3 386 L1587.6 390 L1597.7 400 L1608.7 408 L1620 417.6 L1634 426 L1646.6 436 L1658 443 L1661.7 446 L1664.9 450 L1667.4 456 L1668.4 462 L1668.2 470 M1240 215.2 L1256 217.9 L1272 222.7 L1286 225.4 L1294 227.7 L1318 238 L1334.8 248 L1350 255.7 L1361.3 264 L1372 273.8 L1386 291.1 L1402 306.6 L1406.1 310 L1418 317.8 L1432 328.3 L1438 331.3 L1472 344.4 L1494 356.1 L1523.1 368 L1538 375.3 L1553.8 382 L1573.3 392 L1578 394.9 L1594 409.4 L1614 424.4 L1632 435.3 L1647.7 448 L1651.6 452 L1654 456 L1656 464 L1658.6 470 M1240 224 L1248 224.8 L1256 226.7 L1266 230.1 L1277.9 232 L1288 232.8 L1296 235.1 L1316.5 242 L1332 250.4 L1347.7 258 L1355.9 264 L1366.6 274 L1371 280 L1377.4 294 L1380 298 L1385.9 304 L1399.5 316 L1412 323.1 L1424 332.2 L1433.5 338 L1455.9 348 L1468 350.8 L1474 353.1 L1490.1 362 L1524 377 L1534 382.6 L1552 393.9 L1572 404.6 L1607.9 430 L1624 440.6 L1630 445.3 L1642.8 458 L1646.9 464 L1650.2 470 M1240 227.8 L1252 230 L1270 234.8 L1290 237 L1308 242.3 L1316 245.3 L1330 253.4 L1344.3 260 L1352.4 266 L1364.3 278 L1368 284 L1373 296 L1377 302 L1390.1 314 L1397.6 320 L1412 328.4 L1427.7 340 L1448 350.9 L1454 353.4 L1466 356 L1472 358.1 L1484 364.5 L1498 370.6 L1524 383.6 L1530 387.3 L1545 398 L1564 409.5 L1584 420.2 L1608 435.7 L1624.1 448 L1634 458 L1637 462 L1641.6 470 M1240 231.8 L1252 233.9 L1270 238.5 L1290 240.8 L1306 245 L1314 248.1 L1328 256.8 L1342 263.3 L1348.2 268 L1360.8 282 L1364 287.3 L1368.7 298 L1372.7 304 L1378.9 310 L1394 322.3 L1410 332.1 L1424 343 L1446 356 L1452 358.6 L1468 363 L1480 368.7 L1496 375.2 L1510 383.7 L1522.3 390 L1536 401 L1550 408.9 L1560 415.4 L1580 424.6 L1602 437.2 L1611.5 444 L1624 455.5 L1629.6 462 L1634.3 470 M1240 235.9 L1254 238.4 L1270 242.3 L1286 244 L1296 245.8 L1306 248.4 L1314 252 L1326 260.4 L1336.9 266 L1342 269.5 L1356 286.1 L1365.5 302 L1370.4 308 L1388 322.5 L1408 335.8 L1424 348.6 L1446 362 L1463 368 L1476 374 L1492.9 380 L1506 388.6 L1518 395.3 L1530 405.7 L1534 408.4 L1546 414.2 L1558.9 422 L1574 428.2 L1600 441.7 L1608 447.5 L1616.7 456 L1624 463.9 L1628 470 M1240 240.1 L1254 242.4 L1272 246.7 L1298 249.9 L1306 252.1 L1312 255 L1324 264.3 L1334 270.9 L1337.5 274 L1346 285.5 L1354 294.7 L1361 304 L1368.6 312 L1383.8 324 L1404 338 L1420 351.5 L1430 358.9 L1438 364 L1446 368.1 L1460 373.8 L1474 380.7 L1490 386.2 L1514 400.7 L1525 410 L1530.9 414 L1542 419.3 L1554 426.1 L1570 432.4 L1584 440.1 L1598 446.7 L1606 453 L1618 465.6 L1621.5 470 M1240 244.2 L1254 246.6 L1270 250.7 L1298.8 254 L1304 255.4 L1309.5 258 L1314.8 262 L1330.7 276 L1343.2 292 L1365 314 L1377.3 324 L1399.9 340 L1422 359.3 L1430 365.5 L1444 373.5 L1472 387.3 L1486 393.4 L1508 404.8 L1526 417.5 L1549.3 430 L1568 437.5 L1582 445.6 L1594 451.1 L1600.5 456 L1613.7 470 M1240 248.1 L1252 250.5 L1268 255 L1298 258.3 L1304 260 L1307.7 262 L1312.8 266 L1321.1 274 L1326.6 280 L1336.2 292 L1352.7 308 L1372 324.8 L1395.6 342 L1409.6 354 L1422 365.8 L1427.5 370 L1448 382.5 L1462 389.4 L1485.6 402 L1508 412.6 L1523.7 422 L1548 435.2 L1566 442.9 L1578 450 L1590 455.9 L1596 460.4 L1604.7 470 M1240 252 L1250 254.4 L1264 259.2 L1294 262.7 L1300 264.1 L1306 266.9 L1314 273.8 L1329.6 292 L1344.5 306 L1372 329.5 L1388.7 342 L1408 358.6 L1418 368.6 L1424 373.4 L1446 388.3 L1460 395.3 L1474 403.6 L1516 423.5 L1586 460.9 L1590.3 464 L1596.3 470 M1240 255.8 L1248 258.1 L1262 264 L1286 266.7 L1298 269.9 L1304 272.8 L1312 279.5 L1324.6 294 L1358 321.5 L1372 334.2 L1382 342 L1394 353.6 L1406 363.3 L1417 374 L1431.6 384 L1442 392.1 L1458 401 L1470 408.4 L1484 414.5 L1498.8 422 L1516 429.2 L1532 437.2 L1553.7 450 L1570 460.3 L1584 467.7 L1587.2 470 M1240 259.6 L1247 262 L1260 268.6 L1266 269.9 L1276 270.6 L1283.7 272 L1296 276.3 L1303.5 280 L1308.4 284 L1320 296.5 L1332 305.2 L1356.2 324 L1368 335.5 L1380 346 L1391.1 358 L1403.8 368 L1414 377.7 L1428 386.9 L1440 396.5 L1468 413.8 L1482 419.3 L1496 426.5 L1514 433.9 L1536 444.9 L1544.2 450 L1572.1 470 M1240 263.5 L1246 265.9 L1256 271.7 L1260 273.5 L1264 274.6 L1280 277.4 L1296 283 L1302 286 L1306 289.2 L1316.9 300 L1330 308.4 L1354 326.2 L1376.1 348 L1386 359.7 L1390 363.6 L1400 371.2 L1412 382 L1426 390.9 L1438 400.6 L1464.9 418 L1480.2 424 L1494 431.1 L1510 437.7 L1534.8 450 L1541 454 L1561 470 M1240 267.7 L1260 278.1 L1294 288.3 L1300 291.1 L1314 303.2 L1328 311.6 L1352 328.6 L1374.3 352 L1386 365.8 L1398 375.5 L1410 386.1 L1422.5 394 L1435.2 404 L1448 412 L1460 420.6 L1466 423.7 L1478 428.5 L1492 435.6 L1506 441.4 L1520 449.3 L1532 454.8 L1538 458.7 L1551.3 470 M1240 272 L1256 280.8 L1262 283.5 L1278 290 L1294 293.9 L1300 297 L1311 306 L1326 314.6 L1350 331.1 L1354.9 336 L1362 344.7 L1370.8 354 L1380 365.2 L1384 369.3 L1406 388.3 L1420.1 398 L1432 407.2 L1460 425.7 L1476 433 L1488 439.3 L1502 445.2 L1516 453.8 L1530 460.6 L1534.8 464 L1541.5 470 M1240 276.6 L1258 286.3 L1274 294.2 L1280 296.3 L1292 298.8 L1296 300.3 L1310 309.9 L1324.6 318 L1348.1 334 L1352 338 L1361.7 350 L1381.5 372 L1404.4 392 L1428 410 L1456 428.3 L1486 443.9 L1500 450.2 L1514 459.4 L1526 465.5 L1532.1 470 M1240 281.2 L1272 298.4 L1278 300.7 L1290 303.6 L1296 305.9 L1306 312 L1321 320 L1342 334 L1348.8 340 L1358.2 352 L1378 373.6 L1404 396.6 L1424 412.8 L1432 418.5 L1452 431 L1494.9 454 L1510 463.8 L1521.7 470 M1240 285.8 L1270 302.1 L1278 305.4 L1294 310.5 L1316 321.4 L1338.1 336 L1345.3 342 L1356.5 356 L1373.4 374 L1410 407 L1420 415.4 L1438 428.3 L1472 446.8 L1490.6 458 L1509.1 470 M1240 290.5 L1256 299.8 L1264.5 304 L1278 310 L1294 315.9 L1314 324.8 L1320 328.2 L1334.2 338 L1342 344.5 L1353.2 358 L1366.5 372 L1414 416.3 L1434.5 432 L1474 453.1 L1484.5 460 L1497.5 470 M1240 295.2 L1256 304.8 L1280 315.5 L1314 329.6 L1330 339.8 L1338 346.4 L1359.6 370 L1393.4 402 L1410 418.9 L1432 436 L1453.9 448 L1468 456.7 L1475.5 462 L1485.1 470 M1240 300 L1248.8 306 L1254 308.7 L1266 313.6 L1278 319.3 L1294 325.8 L1312 334 L1320 338.3 L1328.5 344 L1336 350.4 L1358 373.1 L1374.2 388 L1391.9 406 L1402 417.8 L1406 421.7 L1418 430.6 L1432 442.2 L1450.8 456 L1466 464.6 L1473.7 470 M1240 305.1 L1250 311.6 L1264 317.3 L1278 324 L1292.8 330 L1318 342.8 L1326.1 348 L1340 360 L1356.4 376 L1370 388.2 L1390.2 410 L1400 422.5 L1422.2 444 L1448 463.5 L1459.8 470 M1240 310.3 L1249.6 316 L1262 321 L1274 327.1 L1292 334.4 L1304 341.9 L1320 349.9 L1338 363.4 L1366 388.6 L1371.2 394 L1386.1 412 L1394.3 426 L1400 433.2 L1420 451.8 L1444.3 470 M1240 315.3 L1246 318.7 L1258.5 324 L1272 331 L1288 337.1 L1302 346.4 L1318 354.7 L1342 371.3 L1360.7 388 L1366.5 394 L1388.5 430 L1393 436 L1414 455.5 L1432.1 470 M1240 320.1 L1256 327.2 L1270 334.8 L1286 340.9 L1298 349.2 L1314 357.7 L1324 364.7 L1336 371.5 L1342 375.9 L1361.3 398 L1372.6 418 L1381.6 432 L1386.1 438 L1394 446 L1421.2 470 M1240 324.8 L1252.8 330 L1268 338.7 L1282.2 344 L1296 353.4 L1310 361.1 L1320.9 370 L1334 379 L1338 383 L1354.5 402 L1358 407.5 L1365.5 422 L1377.1 438 L1388 449.2 L1411.9 470 M1240 336 L1252 341.3 L1276 353.9 L1288 361.2 L1304 369 L1330 386.8 L1334.7 392 L1345.5 406 L1356.7 424 L1368 438.6 L1375 446 L1388 458 L1402.4 470 M1240 348.7 L1258 356.4 L1286 371.5 L1300 378.4 L1312.3 386 L1322 392.9 L1330 400.6 L1344.3 422 L1349.1 428 L1365.4 446 L1391 470 M1240 360.7 L1248 364 L1262 371.4 L1278 378.1 L1300 390.1 L1308 395.5 L1313.1 400 L1328 415.6 L1338.9 430 L1350 439.8 L1362 451.8 L1372 460.7 L1380.6 470 M1240 371.8 L1256 381.3 L1272 387.4 L1284 394 L1294 398.5 L1299.6 402 L1333.2 436 L1348 447.6 L1366 464.4 L1371.3 470 M1240 383.8 L1250.7 390 L1264 396.5 L1276 404 L1290 409.4 L1294 411.6 L1326.6 440 L1344 453.4 L1361.1 470 M1240 395.5 L1255.8 404 L1272 414.3 L1290 422.9 L1308 434.4 L1336.5 456 L1350.7 470 M1240 406.2 L1254 415.1 L1270 424.4 L1292 435.1 L1304.2 442 L1330 459.5 L1341.2 470 M1240 416.9 L1248 422.5 L1270 435.6 L1288 442.7 L1296 446.9 L1314 458.3 L1330.3 470 M1240 427.8 L1253.7 436 L1266 444.3 L1272 446.8 L1282.7 450 L1290 453.4 L1307.5 464 L1315.4 470 M1240 438.3 L1248 442.4 L1264 452.9 L1282 460 L1300.5 470 M1240 448.8 L1260 460 L1272.9 466 L1280.1 470 M1240 459.7 L1260.9 470" fill="none" stroke="#8c8c8c" stroke-width="0.9" /><path clip-path="url(#c4)" d="M1200.0 20.0L1630.0 282.0 M1210.8 17.3L1635.4 273.9 M1226.4 13.4L1643.2 262.2 M1239.6 10.1L1649.8 252.3 M1325 20L1600 235 M1340 20L1612 240 M1416 20L1352 104 M1352 104L1300 160 M1627 145L1545 245 M1545 245L1500 300 M1218 52 q14 22 46 10 q22 -8 40 -34 M1252 74 q14 22 46 10 q22 -8 40 -34 M1290 96 q14 22 46 10 q22 -8 40 -34 M1328 120 q14 22 46 10 q22 -8 40 -34 M1368 144 q14 22 46 10 q22 -8 40 -34 M1408 170 q14 22 46 10 q22 -8 40 -34 M1448 196 q14 22 46 10 q22 -8 40 -34 M1488 220 q14 22 46 10 q22 -8 40 -34" fill="none" stroke="#909090" stroke-width="0.9" /><path clip-path="url(#c5)" d="M1620.4 180 L1624 181 L1642 183.4 L1650 182 L1654 181.9 L1658.7 184 L1668 192.6 L1672 194.1 L1680 194.7 M1587 180 L1590.1 186 L1593.4 190 L1598 192.5 L1608.9 196 L1611.5 198 L1616.7 204 L1620 206.1 L1622 206.7 L1626 206.7 L1632 204.9 L1636 204.6 L1644 207.7 L1648 208.6 L1662 209.7 L1672 208.8 L1674 209.3 L1674.8 210 L1674.9 212 L1674 213.5 L1666.4 218 L1664 221.2 L1662.6 226 L1662.5 230 L1663.8 234 L1667.1 238 L1672 241.8 L1680 246.8 M1566.5 180 L1572 186 L1578.4 196 L1581.3 198 L1589.3 202 L1592 204.6 L1593.9 208 L1595.9 218 L1598 221 L1602 222.3 L1614 221.3 L1630 221.1 L1638 223 L1644 226 L1646.2 228 L1650.7 236 L1659.8 246 L1668.6 258 L1670.4 262 L1672 269.8 L1673 272 L1676 275.2 L1680 277.7 M1544.2 180 L1558.8 192 L1560.6 196 L1561 204 L1561.6 206 L1563.5 208 L1570 211.9 L1572.2 214 L1574 218 L1574.6 228 L1575.5 232 L1577.5 236 L1579.3 238 L1583 240 L1588 241.5 L1592 242.3 L1596 242.4 L1600 240.9 L1606 236.5 L1610 234.7 L1628 231.2 L1632.6 232 L1636 234.7 L1641.1 242 L1651.4 250 L1656 255.9 L1659.6 264 L1660.5 268 L1660.9 276 L1662.2 280 L1664 281.9 L1666 283 L1676 286.7 L1680 290 M1512.8 180 L1509.6 186 L1509.4 190 L1510.6 192 L1514 193.6 L1522 195.4 L1533.1 200 L1536.6 202 L1537.4 204 L1536.6 208 L1534.8 212 L1529 220 L1526.9 224 L1526.7 226 L1528 228.8 L1530 229.7 L1532 229.6 L1540 226.5 L1544 225.9 L1550 226.8 L1556 229.1 L1558 230.7 L1560 233.8 L1565.3 246 L1568 250.2 L1570 252 L1574 254.2 L1584 256.3 L1586.6 258 L1587.2 260 L1587.1 268 L1588 270.1 L1590 272 L1592 272.7 L1594 273 L1598 272.4 L1606 268.7 L1614 265.9 L1617.6 264 L1624 258.8 L1628 256.5 L1632 255.6 L1634 255.7 L1639.5 258 L1643.2 262 L1645.9 268 L1646.7 274 L1646.7 282 L1647.8 286 L1649.7 288 L1658 292.7 L1661.8 296 L1664 300 L1665.7 310 L1667.3 314 L1669 316 L1680 323 M1450 180.7 L1453.5 184 L1460 186.1 L1466 186.2 L1476 184.1 L1480 183.8 L1486 184.4 L1490.7 186 L1492.8 188 L1496.9 198 L1499.9 202 L1504.2 206 L1513.7 212 L1515.6 214 L1516.3 216 L1516 220 L1511.8 234 L1512 236 L1513 238 L1516 239.9 L1518 240.3 L1540 244 L1542 245.9 L1542.9 248 L1544.2 258 L1545.8 262 L1548.3 264 L1552 265.2 L1564 264.9 L1567.6 266 L1570 268.8 L1572.5 278 L1574 280 L1576 281.3 L1580 282 L1598 282.7 L1602 281.6 L1608 278.9 L1612 278.1 L1618 278.7 L1624 280.4 L1625.8 282 L1625.9 286 L1623.4 292 L1617.7 300 L1617.3 302 L1617.6 304 L1619.5 306 L1622 306.6 L1630 305.5 L1633.6 306 L1636.9 308 L1638 309.7 L1638.2 314 L1635.7 322 L1634.8 328 L1635.4 334 L1637.2 338 L1640 340.4 L1644 341.1 L1656 338.1 L1670 339.5 L1670.9 340 L1671.6 342 L1670.3 350 L1670.9 354 L1672.5 356 L1680 360.7 M1450 198 L1456 195.7 L1463.9 194 L1472 193.1 L1477.4 194 L1479.5 196 L1483 206 L1485.7 210 L1490 213.2 L1498 216.8 L1501.8 220 L1503.4 224 L1502.4 238 L1503.3 244 L1505.8 248 L1508 250 L1518 256.7 L1520 259.7 L1520.8 262 L1521.2 266 L1520.7 270 L1518.4 278 L1519.3 280 L1522 280.5 L1528 280.2 L1544 276 L1551.3 276 L1556.6 278 L1558.6 280 L1562.7 286 L1566 288.7 L1570 290.7 L1576 291.9 L1586 291.1 L1590 291.3 L1598.9 294 L1601.5 296 L1602.7 298 L1604 306 L1605.9 310 L1608.3 312 L1619 318 L1622.7 322 L1624.4 328 L1624.9 334 L1624.5 344 L1624.8 346 L1625.9 348 L1630 349.8 L1642 352.2 L1647.4 354 L1649.1 356 L1650.6 364 L1651.8 366 L1654.9 368 L1662 369.9 L1674 370.1 L1680 372.6 M1450 216.5 L1452 214 L1454 213.6 L1464 217.6 L1470 217.3 L1474 217.8 L1490 225.2 L1493.5 228 L1495 232 L1495.1 236 L1491.6 250 L1491.4 254 L1492.7 258 L1497.8 268 L1499.1 272 L1499.6 278 L1498.2 290 L1498.5 292 L1500 294.4 L1502.3 296 L1506 297 L1516 296.9 L1520.9 298 L1523.3 300 L1528 309.5 L1531.6 314 L1534.4 316 L1540 317.7 L1546 317.5 L1550 315.9 L1556 311.4 L1564 304.3 L1568 302.3 L1580 301.3 L1586 302.1 L1588.7 304 L1590 306 L1592.4 314 L1594 316.5 L1598 319 L1606 320.7 L1610 322.1 L1612.6 324 L1615 328 L1615.6 332 L1615.3 336 L1611.7 352 L1611.6 356 L1612.4 358 L1614.4 360 L1624.6 364 L1626.7 366 L1627.3 368 L1626 374 L1621.3 384 L1621.2 388 L1622.2 390 L1624 391.2 L1628 391.9 L1638 391.1 L1646 388.8 L1658 382.8 L1662 382.1 L1668 382.2 L1672 383.3 L1674.9 386 L1676.1 390 L1676.5 396 L1677.3 398 L1680 399.6 M1450 243.6 L1456 241.2 L1466 234.6 L1472 232.6 L1478 232.6 L1481.2 234 L1482.9 236 L1483.2 240 L1481.2 246 L1478 252.1 L1471.8 260 L1471.2 262 L1472.2 266 L1481.6 280 L1483.7 284 L1484.8 290 L1483.9 302 L1484.5 304 L1486 305.4 L1498 307.7 L1512 314.3 L1516 316.6 L1524 323.9 L1528 326.2 L1540 328.3 L1545.3 330 L1548.3 332 L1553.4 338 L1556 339.2 L1560 338.6 L1574 333.4 L1584 327.3 L1586 326.6 L1590 326.3 L1596 327.2 L1600 328.1 L1604 330.1 L1605.6 332 L1606.3 334 L1606.5 338 L1606 340.7 L1603.7 346 L1598.9 352 L1596.5 356 L1595.2 362 L1596 365 L1598 367.3 L1608 371.8 L1610 374 L1610.8 376 L1610.9 380 L1609.4 386 L1603.7 398 L1603.9 402 L1605.5 404 L1608 405.4 L1612 406.3 L1616 406.3 L1628 404.3 L1632 404.6 L1636 405.7 L1639.3 408 L1640 409.4 L1642 418.1 L1644 420.1 L1648 421.1 L1656 420.5 L1664 419 L1680 412.6 M1450 259.9 L1455.5 270 L1464 280 L1470.2 286 L1472.4 290 L1472.2 294 L1466.5 306 L1464.6 312 L1464.7 316 L1466 318.6 L1468 320.5 L1477 326 L1482 327.8 L1488 327.3 L1496 324.5 L1498 324.3 L1502 325.3 L1515.5 332 L1534 339.1 L1537.2 342 L1540 347.1 L1542 349.7 L1545.2 352 L1548 353.1 L1554 353.5 L1570 351.6 L1572 350.9 L1580 345.3 L1584 344.2 L1585.7 346 L1585.5 350 L1584 355.6 L1579.5 366 L1579.3 370 L1579.8 372 L1581.1 374 L1583.7 376 L1592 380.1 L1594 382 L1594.7 384 L1593.9 388 L1588.6 404 L1588.4 410 L1590 414.1 L1592 416.2 L1596 417.3 L1608 416.3 L1622 417.7 L1624 418.3 L1625.6 420 L1627.4 426 L1628.8 428 L1631.6 430 L1638 432 L1650 433 L1652.9 434 L1655.8 436 L1658.7 440 L1662.8 450 L1664 451.6 L1666 452.8 L1668 453.2 L1672 452.9 L1674.8 452 L1680 449 M1450 283.9 L1453.2 290 L1455.1 298 L1454.6 302 L1451.5 312 L1451.2 316 L1451.7 320 L1455.5 332 L1455.1 348 L1458.1 356 L1460 359.2 L1462 361.2 L1464 362.4 L1468 362.7 L1480 360.7 L1484 359.2 L1486 357.9 L1492 351.2 L1496 348.4 L1506 346.9 L1514 344.4 L1518 344.4 L1520 345.1 L1523.5 348 L1528.7 356 L1532 358.7 L1548 367.5 L1552 369.1 L1558 370.3 L1561 372 L1562.2 374 L1563.7 380 L1565.4 384 L1568 387.1 L1574.8 392 L1576 394 L1576.3 396 L1575.3 406 L1575.7 412 L1577.9 424 L1580 427 L1584 428.5 L1594 431.1 L1598 431.2 L1604 429.6 L1606 429.9 L1607.1 432 L1606.5 438 L1608 439.4 L1612 440.3 L1626 440 L1634 441.8 L1642 445 L1646 447.4 L1648.5 450 L1654 459.2 L1658 462.3 L1662 463.4 L1676 463.4 L1680 464.5 M1592 443.7 L1586.5 446 L1584.3 448 L1583.6 450 L1584 452 L1586 454.1 L1590 455 L1592 454.5 L1594 452.9 L1596 450 L1597.7 446 L1597.9 444 L1596 443 L1592 443.7 M1450 364.4 L1455.8 370 L1462 373.4 L1470 375.2 L1478 375.7 L1482 374.9 L1486 373.2 L1502 362.9 L1506 362.2 L1510 362.4 L1514 363.2 L1518 365 L1530 373 L1538 375 L1542 376.5 L1546 379.4 L1548 381.7 L1553.1 392 L1561.1 398 L1563.6 402 L1564.1 408 L1561.7 432 L1561.7 438 L1567.1 458 L1569.3 462 L1571.3 464 L1574 465.6 L1578 466.8 L1590 468.5 L1594 468.2 L1598.4 466 L1604.2 460 L1608 456.9 L1622 450.5 L1626 449.4 L1628 449.5 L1632 450.6 L1637.1 454 L1640.7 458 L1644.5 464 L1648 467.2 L1653.8 470 L1666 474.4 L1668 476.1 L1669.5 480 M1450 378.1 L1458 382.7 L1462 384.3 L1484 388.8 L1492 389 L1494.1 390 L1499.3 396 L1504 398.3 L1508 398.8 L1512 398.3 L1518 396.5 L1522.5 394 L1524 393.7 L1526 394.5 L1526.8 396 L1524.4 400 L1524.2 402 L1526 405.6 L1528 406.5 L1530 406.4 L1534 404.7 L1536 404.7 L1540 406.7 L1542.9 410 L1544.2 414 L1544.3 424 L1548.1 444 L1558.3 464 L1561.3 468 L1570 476.5 L1574 479 L1578.4 480 M1587.1 480 L1594 479.4 L1602 477.2 L1606 475.2 L1614.4 468 L1622 464.5 L1626 463.7 L1628 464.4 L1629.1 466 L1629.5 468 L1629.3 476 L1630.4 478 L1633.9 480 M1640.8 480 L1648 478.8 L1652 480 M1450 396.9 L1460 397 L1470 395.5 L1474 396.5 L1476.6 398 L1484 404.3 L1496 410.2 L1506 417.3 L1516.3 422 L1518 424 L1518.9 426 L1520 432.7 L1521.3 436 L1524 438.4 L1532 441.3 L1534.8 444 L1541.7 460 L1542.6 470 L1543.7 474 L1546 477.2 L1549.2 480 M1450 412 L1454 409.9 L1458 409.3 L1464 409.6 L1470 410.7 L1490 419.3 L1495.9 424 L1499 428 L1500.3 432 L1499.9 436 L1497.2 444 L1497 448 L1497.5 450 L1498.6 452 L1502 455.4 L1506 457.7 L1512.3 460 L1516 463 L1517.5 466 L1518.3 470 L1516.6 480 M1450 428.6 L1458 427.3 L1464 425.2 L1468 424.6 L1472.3 426 L1478.7 432 L1482 436 L1483.9 440 L1484.3 444 L1483.3 454 L1483.9 458 L1486 461 L1492 465.6 L1494 468.1 L1495.9 474 L1495.8 480 M1450 452 L1454 450 L1460 448.6 L1464 448.5 L1466 448.9 L1468 450.2 L1469.7 454 L1470.8 464 L1474.4 474 L1475.1 480 M1450 470.4 L1455.2 480" fill="none" stroke="#8c8c8c" stroke-width="0.9" /><path clip-path="url(#c6)" d="M1666.5 16 L1680 19.8 M1654.4 16 L1658 18.3 L1664 20.9 L1680 25.1 M1646.4 16 L1652 20.4 L1658.6 24 L1680 30.1 M1638.4 16 L1649.1 24 L1654 26.9 L1660 29.2 L1680 35 M1629.9 16 L1647.4 28 L1652 30.6 L1680 39.6 M1622.6 16 L1644 30.5 L1650 34 L1680 43.8 M1616.3 16 L1621.5 20 L1648 37 L1672 45.7 L1680 47.9 M1610.1 16 L1617.8 22 L1646.2 40 L1652 42.7 L1668 48.6 L1680 51.8 M1603.5 16 L1613.9 24 L1628 32.1 L1642 41.3 L1648 44.7 L1666 52.1 L1680 55.7 M1596.8 16 L1604 22 L1609.9 26 L1628 36 L1648 48.5 L1664 55.8 L1670 57.6 L1680 59.7 M1590.8 16 L1597.3 22 L1604 26.9 L1628 39.9 L1652 54.6 L1664 60.2 L1680 64 M1585.3 16 L1593.6 24 L1600 28.8 L1630 45 L1654 60.1 L1666 65.3 L1680 68.7 M1579.9 16 L1590 25.8 L1596 30.5 L1610 38.7 L1631.7 50 L1652 63.4 L1664 69.2 L1680 73.8 M1573.7 16 L1589.3 30 L1598 36 L1614 45.1 L1630 53.2 L1646 64.4 L1654 69.1 L1666 74.8 L1680 79.2 M1566.4 16 L1576 23 L1586 32 L1591.2 36 L1612 48.5 L1630 57.8 L1646 69.4 L1666 79.8 L1680 84.6 M1559 16 L1574 26.4 L1588 38.2 L1612 53.2 L1626 60.2 L1642 72.3 L1664.1 84 L1680 89.7 M1552.5 16 L1560 22 L1572 29.7 L1586 41.5 L1610 56.9 L1624 64.2 L1640 76.7 L1662 88 L1680 94.6 M1546.1 16 L1555.8 24 L1570 33 L1584 44.7 L1606.4 60 L1622 68.5 L1636.3 80 L1660 92 L1680 99.4 M1538.3 16 L1552 26.3 L1568 36.2 L1580 46.5 L1602 62.9 L1618.6 72 L1634 84 L1656 95.2 L1672 100.4 L1680 104.1 M1529.1 16 L1550 30 L1564 38 L1600 67.7 L1616 76.4 L1632 87.8 L1654 99.1 L1672 104.7 L1680 108.9 M1520.7 16 L1528 21.5 L1538 28 L1564 42.7 L1594 69.3 L1602 75.1 L1614 81.5 L1630 91.6 L1648 101.1 L1656 104.4 L1670 108.4 L1680 113.8 M1512.9 16 L1534 31.5 L1558 43.8 L1564 47.7 L1573.7 56 L1592 73.6 L1602 80.9 L1646 104.8 L1654 108.1 L1670 113 L1680 118.6 M1504 16 L1514 22.6 L1532 35.9 L1556 47.9 L1562 51.6 L1572 59.9 L1588.1 76 L1596 82.2 L1604 87.6 L1644 108.4 L1652 111.8 L1668 117.1 L1680 123.5 M1494.9 16 L1512 26.7 L1529.9 40 L1562 57.3 L1570 63.8 L1583.9 78 L1602 91.6 L1636 109.5 L1650 115.7 L1667.3 122 L1680 128.5 M1487.5 16 L1498 23.9 L1512 32 L1526 42.8 L1562 63.3 L1567.7 68 L1579.4 80 L1600 95.3 L1616 103.7 L1632 113.1 L1666 126.8 L1680 133.7 M1480.9 16 L1493.2 26 L1510 36 L1522.7 46 L1536 53.6 L1548 61.5 L1560 68.1 L1564 71.3 L1576 83.2 L1598 98.9 L1614 107.5 L1624 114.4 L1630 117.9 L1652 127.1 L1666 132.4 L1680 139.4 M1474.5 16 L1491.8 30 L1506 38.4 L1520 49.5 L1534 58 L1544 65.2 L1558 73 L1562 76.3 L1570 84.3 L1574.7 88 L1594.9 102 L1612 111.2 L1626 121.8 L1648 132.3 L1666 138 L1680 145.4 M1468.1 16 L1490 33.4 L1506 43.3 L1518 53.5 L1530 61.3 L1541.7 70 L1556 77.9 L1569.6 90 L1592 105.4 L1608.3 114 L1624 126.8 L1644 138.4 L1648 139.8 L1658 141.5 L1664 143.1 L1680 151.2 M1461.9 16 L1486 35.1 L1503.1 46 L1516 57.2 L1536 72.6 L1554 82.7 L1566 92.9 L1590 109.7 L1606 118.2 L1620 130.4 L1638 142.7 L1642 144.9 L1646 146.2 L1662 148.4 L1680 156.6 M1455.7 16 L1462.6 22 L1483.7 38 L1502 49.9 L1534 77.7 L1552 87.6 L1586 112.8 L1602.1 122 L1616 134.1 L1634 146.8 L1642 150.9 L1646 152 L1660 154 L1680 161.5 M1449 16 L1461.1 26 L1478 38.6 L1500 53.1 L1532 82.3 L1550 92.7 L1569.3 106 L1586 118.8 L1600 127.8 L1614 139.5 L1629.6 150 L1636 153.6 L1642 156.1 L1658 159.5 L1680 166.1 M1441.1 16 L1448 20.6 L1474 40.7 L1498 56.3 L1508.7 66 L1524 81.2 L1532 87.8 L1563.7 108 L1608.4 142 L1617 148 L1630.7 156 L1640 160 L1664 166.8 L1680 170.7 M1432.1 16 L1444 23 L1470 42.8 L1494 58.2 L1504 66.6 L1522 84.8 L1532 93.2 L1540 98.9 L1557.6 110 L1591.1 136 L1614 151.9 L1624.9 158 L1640 164.5 L1662 171.3 L1680 175.4 M1422.9 16 L1446 29.4 L1467.7 46 L1494 63.4 L1504 71.9 L1518 86.5 L1532 98.5 L1538 103.1 L1552 112.3 L1565.8 124 L1589.7 142 L1615.4 158 L1632 165.7 L1642 169.6 L1660 175.5 L1680 180.4 M1414.1 16 L1448 35.7 L1463.8 48 L1496 70.1 L1502 75.4 L1513.8 88 L1532 103.9 L1548.9 116 L1562 128.7 L1582 144 L1598 152.2 L1614.1 162 L1634 170.9 L1660 180.2 L1680 185.8 M1406.5 16 L1430 31 L1446 39.2 L1460 50 L1494.1 74 L1500 79.1 L1512.2 92 L1532 109.4 L1546 119.6 L1559.7 134 L1578 148.2 L1584 151.5 L1596 156.1 L1612 165.3 L1636 176.2 L1666 187.1 L1680 191.5 M1399.4 16 L1406 21.1 L1426 34 L1446 44.2 L1458 53.5 L1470 61.4 L1482 70.8 L1492.4 78 L1498 83 L1508 93.7 L1518 102 L1528 111.6 L1543.9 124 L1556 137.4 L1576 153 L1582 156 L1596 161 L1608 167.6 L1622.4 174 L1636 180.9 L1652 186.6 L1668 193.4 L1680 197.4 M1391.4 16 L1401.7 24 L1414 31.3 L1424 38.1 L1440 45.5 L1444 47.9 L1454.6 56 L1468 64.8 L1480 74.6 L1490.7 82 L1495.3 86 L1504.6 96 L1516.3 106 L1526 115.7 L1540 126.8 L1552 140.2 L1572.4 156 L1578 159.2 L1592 164.2 L1606 171 L1618 176 L1636 185.6 L1650 190.8 L1666 198.5 L1680 203.3 M1375.6 16 L1386 19.9 L1397.7 28 L1410 34.5 L1422.1 42 L1440 50.3 L1453.1 60 L1465.5 68 L1477.5 78 L1491.5 88 L1502 99 L1514 109.5 L1524 120 L1536.1 130 L1549.3 144 L1571 160 L1578 163.6 L1590 168.1 L1602.7 174 L1617.7 180 L1632 188.4 L1648 195.4 L1660 202 L1680 209.6 M1360.3 16 L1368 19.9 L1380 24.5 L1396 33.8 L1408 39.3 L1420.5 46 L1436 52.8 L1461 70 L1474 80.7 L1486 88.8 L1489.9 92 L1500 102.4 L1510.7 112 L1522 124.3 L1532.8 134 L1546 147.4 L1566.7 162 L1574 166.1 L1598 176.7 L1616 183.6 L1630 192.1 L1645.8 200 L1656 206.5 L1660 208.3 L1672 212.3 L1680 216.3 M1348.9 16 L1356 21.2 L1364 25.6 L1380 32.2 L1396 40.1 L1432 55.2 L1438 58.6 L1460 74.6 L1472 84.7 L1486 94.2 L1506.9 114 L1520 128.6 L1539.8 148 L1548 154.6 L1559.1 162 L1572 169.3 L1596 180.6 L1615.1 188 L1628 195.9 L1640 202.2 L1654 211.7 L1670 217.6 L1680 223 M1340.5 16 L1346 21.7 L1350 24.9 L1364 33.3 L1380 38.8 L1401.2 48 L1428 57.8 L1436 62 L1456 76.8 L1470 88.7 L1486 100 L1504.9 118 L1518 132.9 L1530.8 146 L1540 154 L1548 159.9 L1557.7 166 L1570 172.6 L1596 185.3 L1614 192.8 L1637.3 206 L1652 216.2 L1668 222.9 L1680 229.3 M1333.5 16 L1340 23.8 L1344 27.5 L1362 39.1 L1368 41.4 L1382 45.2 L1400 52.8 L1426 61.5 L1434 65.4 L1451.1 78 L1466 90.9 L1484 104.4 L1500 119.5 L1518 139.7 L1526 148 L1546.5 164 L1554 168.6 L1570 176.9 L1596 190.2 L1614 198.5 L1634 209.3 L1652 221.3 L1680 235.1 M1325.1 16 L1328 18.4 L1338.8 30 L1360 43.8 L1366 46.2 L1382 50.3 L1398 56.9 L1426 66.1 L1434 70.1 L1447.5 80 L1464 94.5 L1485.6 112 L1493.9 120 L1521.1 150 L1544 167.1 L1551.9 172 L1600 197.3 L1630 212.3 L1650 224.9 L1680 240.6 M1304.7 16 L1318 20.3 L1322 22.2 L1335.4 34 L1360 48.6 L1366 50.7 L1380 54.5 L1394 60.2 L1424 70.2 L1434 74.9 L1446 83.8 L1485.3 118 L1490.9 124 L1500.7 136 L1515.9 152 L1522 157 L1547.4 174 L1586 194.6 L1602 203.8 L1630 217.6 L1650 229.4 L1680 246.1 M1291.1 16 L1302 22.2 L1318 28.2 L1332.1 38 L1358 52 L1376 57.7 L1390 63.5 L1406 68.5 L1426 76 L1434 79.9 L1442.4 86 L1482 121.3 L1486.4 126 L1497.2 140 L1512.8 156 L1517.7 160 L1530 167 L1543 176 L1558 183.9 L1570 191.4 L1584 198.5 L1600 208 L1614 214.4 L1638 226.9 L1680 251.8 M1277.4 16 L1296 26.3 L1315.7 34 L1330 42.5 L1342 48 L1354 54.5 L1360 57 L1374 61.5 L1386 67 L1402.7 72 L1432.1 84 L1438 88 L1454.7 102 L1478.4 124 L1482.2 128 L1489.1 138 L1494 143.8 L1510 159.9 L1516 164.6 L1526.3 170 L1540 179.1 L1553.7 186 L1570 196.6 L1581 202 L1596 211.2 L1611.7 218 L1639 232 L1666 248 L1680 257.7 M1251.6 16 L1258 17.5 L1264 19.9 L1279.1 30 L1288 34.4 L1316 44.9 L1350 60.6 L1369.7 68 L1384 75.4 L1398 80.2 L1410.7 86 L1422.4 90 L1428 92.5 L1451.5 110 L1456 114 L1464 122.5 L1476 133.9 L1484 145.1 L1488.2 150 L1504.7 166 L1510 170.4 L1534 185.6 L1551.6 194 L1564 202.4 L1576 208.8 L1590 217.6 L1608 224.7 L1636 239.1 L1648 246.9 L1662 254.6 L1680 268.5 M1240 26.7 L1254 28.5 L1260 30.3 L1274 38.7 L1294 47.9 L1300 50.1 L1314 53.7 L1320 56 L1342 66.2 L1366 75.7 L1402 95.4 L1408 97.6 L1418 100.1 L1424 102.8 L1448 119.7 L1458 130.2 L1468.6 140 L1478.3 152 L1484 158 L1504 175.7 L1528 193.4 L1534 197 L1546 202.5 L1570 215 L1586 224.9 L1604 231.8 L1628 243.8 L1644 255.3 L1658 262.8 L1669.9 272 L1680 278.9 M1240 39.7 L1254 42.5 L1266 47.2 L1280 51.7 L1296 59 L1310 62.3 L1316 64.3 L1366 86.9 L1398 105.8 L1406 109.3 L1418 113.5 L1428 118.7 L1437 124 L1442.4 128 L1462 146.9 L1476 161.9 L1486 171.2 L1516 195.8 L1530 206.4 L1540 212 L1566 222.5 L1584 232.4 L1600 239.3 L1622 250 L1627.9 254 L1640 263.9 L1652 270.8 L1662.3 278 L1674 284.9 L1680 289.1 M1240 55 L1250 56.2 L1274 61.7 L1290 67.2 L1306.9 72 L1320 78.4 L1335.7 84 L1350 91.9 L1364 97.5 L1378.5 106 L1404 119.3 L1424 128.9 L1436 136.5 L1446 144.3 L1482 178.7 L1495.8 190 L1508 201.4 L1528 216.9 L1536 221.1 L1572 235.1 L1613.4 256 L1620 260.1 L1636 272.4 L1658 285.6 L1670 292.1 L1680 299.3 M1240 68.4 L1252 69.8 L1300 80.7 L1316 88.5 L1330 93.8 L1342 99.5 L1358 105.1 L1374 113.8 L1390 120.9 L1401.9 128 L1416 135.5 L1429.8 146 L1442 154.1 L1453.1 164 L1466 174.1 L1478 185.9 L1490 195.6 L1502.2 208 L1524 225.8 L1530 228.9 L1542 233 L1556 239.1 L1570 244.1 L1598 257.7 L1608.2 264 L1634 282.1 L1664 297.7 L1680 308.7 M1240 79.2 L1254 83.4 L1274 86.2 L1302 92.8 L1336 107.2 L1356 113.5 L1368.8 120 L1384 126.8 L1410 142.1 L1424 154.2 L1436 162.3 L1448 172.7 L1460 180.7 L1472 192 L1484 201.2 L1497.2 214 L1522 234.9 L1526 237 L1548 246.4 L1564 252.4 L1580 261.3 L1590 264.6 L1596 267.2 L1618 281.3 L1632 291 L1658 303 L1670 310.4 L1680 317.8 M1240 89.7 L1246 92.5 L1252 94.5 L1270 96.3 L1284 99.6 L1298 101.9 L1304 103.4 L1336 115.7 L1354 121.7 L1378 132.5 L1404 149.2 L1418 161.6 L1430 169.7 L1442 179.5 L1454.2 188 L1468 200.7 L1480 209.5 L1502.4 228 L1515.6 240 L1522 244.6 L1540 254.9 L1558.5 262 L1572 270.4 L1576 272.1 L1592 276.9 L1612 286.6 L1632 299.9 L1648 306.9 L1666 316.8 L1672 320.9 L1680 328 M1392 228 L1391.7 230 L1393.4 234 L1399.1 240 L1406 243.9 L1410 245.3 L1414 246.2 L1416 245.5 L1416.3 244 L1414.5 240 L1411.4 236 L1407 232 L1402 228.8 L1398 227.2 L1394 226.9 L1392 228 M1240 100.5 L1248 103.8 L1256 105.9 L1274 108.7 L1292 110.2 L1302 112.5 L1326.5 120 L1361.2 134 L1373.9 140 L1396.5 156 L1414 170.8 L1447.3 194 L1468 212.6 L1496.4 234 L1518 252.7 L1528 260.2 L1542 268.3 L1566 279.9 L1586 285.6 L1606 292.4 L1612 295.1 L1628 305.8 L1640.3 312 L1664.7 326 L1669.9 330 L1680 339.4 M1374 213.7 L1372.4 216 L1372.3 218 L1374.6 224 L1381.3 232 L1394 244.2 L1430 268.2 L1444.1 280 L1450 283.8 L1456 286.4 L1464 288.2 L1468 288 L1469.9 286 L1469.8 284 L1468.2 280 L1465.7 276 L1460.7 270 L1434 245.6 L1422 233.5 L1413 226 L1402 218.5 L1394 214.9 L1382 212.4 L1378 212.4 L1374 213.7 M1240 111.8 L1252 116.2 L1266 119.7 L1274 120.4 L1290 119.9 L1306 123.9 L1320 126.6 L1328 129.4 L1354.3 142 L1380 156.7 L1416 185 L1436.3 198 L1454 213.3 L1466.6 226 L1481.8 236 L1486.9 240 L1503.9 254 L1514 264.6 L1518 267.8 L1544.6 282 L1562 289.5 L1570 291.9 L1584 294.7 L1598 298.4 L1604 300.3 L1610 302.9 L1622 310.7 L1636 318.7 L1648 327.2 L1659.3 334 L1664 337.7 L1672.6 346 L1680 351 M1368 200 L1362 201 L1360 202.3 L1358.9 204 L1358.5 208 L1360.6 214 L1365.2 222 L1370.2 228 L1392 247.8 L1428 273 L1444 286 L1452 290.7 L1466 296.9 L1476 299.5 L1480 299.7 L1484 299.1 L1486.4 298 L1488 296 L1488.5 294 L1487.9 290 L1483.4 282 L1472.7 268 L1463.2 258 L1456 249.4 L1452 245.6 L1440 238 L1426 226.2 L1402 209.1 L1396 206.5 L1382 202.3 L1374 200.5 L1368 200 M1240 124.3 L1248 127.2 L1274 133.3 L1292 133.7 L1316 136.7 L1322 138.9 L1332 144.4 L1340 148 L1346 151.9 L1349.7 156 L1356 165.1 L1360 168.3 L1367.4 172 L1369.9 174 L1371.3 176 L1371.8 178 L1371 180 L1367.4 182 L1356 182.3 L1352 183.1 L1348 185.8 L1346.5 188 L1344.7 194 L1344.9 200 L1346.9 206 L1350.8 212 L1360.7 224 L1366.3 230 L1388 248.8 L1426 276.3 L1440.6 288 L1450.1 294 L1462 300.1 L1472 304.1 L1488 307.5 L1496 307.7 L1499.9 306 L1502 303.5 L1503.4 300 L1505.2 290 L1506 287.8 L1507.5 286 L1512 284.4 L1520 284.4 L1526 285.6 L1548 293.3 L1566 300.9 L1572 302.2 L1586 303.9 L1596 306.3 L1602 308.4 L1608 311.3 L1631.2 326 L1654 342 L1670 356.2 L1680 363.3 M1240 136.1 L1256 140.6 L1272 147.3 L1294 155 L1298 156 L1308 156.5 L1312 157.7 L1316 160.1 L1320.4 164 L1323.3 168 L1328.6 184 L1336.7 202 L1341.6 210 L1346.9 216 L1363.3 232 L1388 252.6 L1424 279 L1440 291.6 L1454 300 L1464 305.1 L1471.2 308 L1490.5 314 L1498 315.6 L1504 315.2 L1508 313.7 L1512 310.7 L1518 304.3 L1522 301.8 L1526 300.7 L1534 300.2 L1540 300.5 L1546 301.7 L1566 310.2 L1586 313.1 L1596 315.7 L1604 319.1 L1610 322.6 L1626 334.3 L1646 347.8 L1656 355.5 L1674 371.4 L1680 375.9 M1240 146 L1250 149.7 L1262.2 156 L1276 161.7 L1280 164 L1291.1 172 L1306.7 180 L1310 182.7 L1326 198.9 L1334.8 210 L1340.2 216 L1360.6 234 L1388 256.1 L1436 292.4 L1444 297.8 L1454.7 304 L1470 311.3 L1492 319.4 L1500 321.4 L1506 321.8 L1512 321 L1516 319.7 L1530 313 L1536 311.5 L1542 311.4 L1548 312.8 L1562 318.1 L1600 327.8 L1607.7 332 L1620 342 L1634 350.9 L1654 365.2 L1659.6 370 L1670 380.7 L1680 387.9 M1240 155.9 L1272 171.1 L1284 178.6 L1298 185.6 L1304 189.4 L1322 203.9 L1333.9 216 L1340.6 222 L1388 259.6 L1435.6 296 L1454 307.2 L1468 314 L1492 323.8 L1500 326.3 L1508 327.5 L1516 327.8 L1522 327.1 L1536 324.1 L1544 324.2 L1568 329.7 L1582 334.7 L1598 338.9 L1603.8 342 L1614 349.5 L1628 357.5 L1650 373.5 L1654.8 378 L1664 388.9 L1680 401.6 M1240 166.9 L1250 170.4 L1264 176.6 L1281 186 L1296 193 L1306 199.2 L1318 207.6 L1336.8 224 L1371.9 250 L1406 277.5 L1430 295.9 L1438 301.5 L1450 308.6 L1466 316.7 L1490 327.3 L1500 330.7 L1518 334.6 L1524 334.9 L1536 334.4 L1544 335.3 L1568 341.3 L1588 347.2 L1594 349.5 L1608 357.8 L1622 364.6 L1643.5 380 L1648 384.2 L1660 398.7 L1674 410.9 L1680 415.3 M1240 177.8 L1250 180.1 L1262 184.7 L1298 201.7 L1312 209.7 L1320 215.4 L1336 228.2 L1370 252.2 L1406 281.7 L1428 298.8 L1440 306.9 L1454 314.7 L1490 331.5 L1510 338.6 L1520 341.2 L1536 342.6 L1542 343.9 L1556 348.6 L1582 355.5 L1594 360.7 L1616.8 374 L1636 387.1 L1641.6 392 L1652.4 404 L1660.7 412 L1670.4 420 L1680 426.3 M1240 187.8 L1258 192.3 L1268 195.6 L1300 209.6 L1312 215.9 L1337.5 234 L1367.2 254 L1422 299.3 L1436 309.2 L1446 314.9 L1488 335.2 L1510 344 L1520 347.2 L1536 350.3 L1552 355.8 L1566 359.9 L1586 367.1 L1594 371 L1601.4 376 L1622.6 392 L1658 421.7 L1680 436.6 M1240 197.4 L1250 199.9 L1262 201.9 L1268 203.6 L1282 209.6 L1300 216.1 L1316 224.5 L1366.8 258 L1376.7 266 L1414 299.1 L1430 311 L1440 317.3 L1468 330.1 L1490 341.1 L1508 348.9 L1516 351.9 L1532 356.5 L1546 361.7 L1560.3 366 L1588 378.3 L1593.6 382 L1604 391.3 L1614 398.8 L1626.2 410 L1640 419.3 L1652 428.9 L1670 439.9 L1674.8 444 L1680 449.6 M1240 206.5 L1260 210 L1266 211.6 L1278 215.9 L1296 221.3 L1316 230.6 L1352 252.5 L1365.6 262 L1375.2 270 L1390 285 L1410 303.4 L1436 322.2 L1468 335.8 L1490 347 L1504 353.4 L1527 362 L1542 368.4 L1558 373.6 L1582.3 386 L1587.6 390 L1597.7 400 L1608.7 408 L1620 417.6 L1634 426 L1646.6 436 L1658 443 L1661.7 446 L1664.9 450 L1667.4 456 L1668.4 462 L1668.2 470 M1240 215.2 L1256 217.9 L1272 222.7 L1286 225.4 L1294 227.7 L1318 238 L1334.8 248 L1350 255.7 L1361.3 264 L1372 273.8 L1386 291.1 L1402 306.6 L1406.1 310 L1418 317.8 L1432 328.3 L1438 331.3 L1472 344.4 L1494 356.1 L1523.1 368 L1538 375.3 L1553.8 382 L1573.3 392 L1578 394.9 L1594 409.4 L1614 424.4 L1632 435.3 L1647.7 448 L1651.6 452 L1654 456 L1656 464 L1658.6 470 M1240 224 L1248 224.8 L1256 226.7 L1266 230.1 L1277.9 232 L1288 232.8 L1296 235.1 L1316.5 242 L1332 250.4 L1347.7 258 L1355.9 264 L1366.6 274 L1371 280 L1377.4 294 L1380 298 L1385.9 304 L1399.5 316 L1412 323.1 L1424 332.2 L1433.5 338 L1455.9 348 L1468 350.8 L1474 353.1 L1490.1 362 L1524 377 L1534 382.6 L1552 393.9 L1572 404.6 L1607.9 430 L1624 440.6 L1630 445.3 L1642.8 458 L1646.9 464 L1650.2 470 M1240 227.8 L1252 230 L1270 234.8 L1290 237 L1308 242.3 L1316 245.3 L1330 253.4 L1344.3 260 L1352.4 266 L1364.3 278 L1368 284 L1373 296 L1377 302 L1390.1 314 L1397.6 320 L1412 328.4 L1427.7 340 L1448 350.9 L1454 353.4 L1466 356 L1472 358.1 L1484 364.5 L1498 370.6 L1524 383.6 L1530 387.3 L1545 398 L1564 409.5 L1584 420.2 L1608 435.7 L1624.1 448 L1634 458 L1637 462 L1641.6 470 M1240 231.8 L1252 233.9 L1270 238.5 L1290 240.8 L1306 245 L1314 248.1 L1328 256.8 L1342 263.3 L1348.2 268 L1360.8 282 L1364 287.3 L1368.7 298 L1372.7 304 L1378.9 310 L1394 322.3 L1410 332.1 L1424 343 L1446 356 L1452 358.6 L1468 363 L1480 368.7 L1496 375.2 L1510 383.7 L1522.3 390 L1536 401 L1550 408.9 L1560 415.4 L1580 424.6 L1602 437.2 L1611.5 444 L1624 455.5 L1629.6 462 L1634.3 470 M1240 235.9 L1254 238.4 L1270 242.3 L1286 244 L1296 245.8 L1306 248.4 L1314 252 L1326 260.4 L1336.9 266 L1342 269.5 L1356 286.1 L1365.5 302 L1370.4 308 L1388 322.5 L1408 335.8 L1424 348.6 L1446 362 L1463 368 L1476 374 L1492.9 380 L1506 388.6 L1518 395.3 L1530 405.7 L1534 408.4 L1546 414.2 L1558.9 422 L1574 428.2 L1600 441.7 L1608 447.5 L1616.7 456 L1624 463.9 L1628 470 M1240 240.1 L1254 242.4 L1272 246.7 L1298 249.9 L1306 252.1 L1312 255 L1324 264.3 L1334 270.9 L1337.5 274 L1346 285.5 L1354 294.7 L1361 304 L1368.6 312 L1383.8 324 L1404 338 L1420 351.5 L1430 358.9 L1438 364 L1446 368.1 L1460 373.8 L1474 380.7 L1490 386.2 L1514 400.7 L1525 410 L1530.9 414 L1542 419.3 L1554 426.1 L1570 432.4 L1584 440.1 L1598 446.7 L1606 453 L1618 465.6 L1621.5 470 M1240 244.2 L1254 246.6 L1270 250.7 L1298.8 254 L1304 255.4 L1309.5 258 L1314.8 262 L1330.7 276 L1343.2 292 L1365 314 L1377.3 324 L1399.9 340 L1422 359.3 L1430 365.5 L1444 373.5 L1472 387.3 L1486 393.4 L1508 404.8 L1526 417.5 L1549.3 430 L1568 437.5 L1582 445.6 L1594 451.1 L1600.5 456 L1613.7 470 M1240 248.1 L1252 250.5 L1268 255 L1298 258.3 L1304 260 L1307.7 262 L1312.8 266 L1321.1 274 L1326.6 280 L1336.2 292 L1352.7 308 L1372 324.8 L1395.6 342 L1409.6 354 L1422 365.8 L1427.5 370 L1448 382.5 L1462 389.4 L1485.6 402 L1508 412.6 L1523.7 422 L1548 435.2 L1566 442.9 L1578 450 L1590 455.9 L1596 460.4 L1604.7 470 M1240 252 L1250 254.4 L1264 259.2 L1294 262.7 L1300 264.1 L1306 266.9 L1314 273.8 L1329.6 292 L1344.5 306 L1372 329.5 L1388.7 342 L1408 358.6 L1418 368.6 L1424 373.4 L1446 388.3 L1460 395.3 L1474 403.6 L1516 423.5 L1586 460.9 L1590.3 464 L1596.3 470 M1240 255.8 L1248 258.1 L1262 264 L1286 266.7 L1298 269.9 L1304 272.8 L1312 279.5 L1324.6 294 L1358 321.5 L1372 334.2 L1382 342 L1394 353.6 L1406 363.3 L1417 374 L1431.6 384 L1442 392.1 L1458 401 L1470 408.4 L1484 414.5 L1498.8 422 L1516 429.2 L1532 437.2 L1553.7 450 L1570 460.3 L1584 467.7 L1587.2 470 M1240 259.6 L1247 262 L1260 268.6 L1266 269.9 L1276 270.6 L1283.7 272 L1296 276.3 L1303.5 280 L1308.4 284 L1320 296.5 L1332 305.2 L1356.2 324 L1368 335.5 L1380 346 L1391.1 358 L1403.8 368 L1414 377.7 L1428 386.9 L1440 396.5 L1468 413.8 L1482 419.3 L1496 426.5 L1514 433.9 L1536 444.9 L1544.2 450 L1572.1 470 M1240 263.5 L1246 265.9 L1256 271.7 L1260 273.5 L1264 274.6 L1280 277.4 L1296 283 L1302 286 L1306 289.2 L1316.9 300 L1330 308.4 L1354 326.2 L1376.1 348 L1386 359.7 L1390 363.6 L1400 371.2 L1412 382 L1426 390.9 L1438 400.6 L1464.9 418 L1480.2 424 L1494 431.1 L1510 437.7 L1534.8 450 L1541 454 L1561 470 M1240 267.7 L1260 278.1 L1294 288.3 L1300 291.1 L1314 303.2 L1328 311.6 L1352 328.6 L1374.3 352 L1386 365.8 L1398 375.5 L1410 386.1 L1422.5 394 L1435.2 404 L1448 412 L1460 420.6 L1466 423.7 L1478 428.5 L1492 435.6 L1506 441.4 L1520 449.3 L1532 454.8 L1538 458.7 L1551.3 470 M1240 272 L1256 280.8 L1262 283.5 L1278 290 L1294 293.9 L1300 297 L1311 306 L1326 314.6 L1350 331.1 L1354.9 336 L1362 344.7 L1370.8 354 L1380 365.2 L1384 369.3 L1406 388.3 L1420.1 398 L1432 407.2 L1460 425.7 L1476 433 L1488 439.3 L1502 445.2 L1516 453.8 L1530 460.6 L1534.8 464 L1541.5 470 M1240 276.6 L1258 286.3 L1274 294.2 L1280 296.3 L1292 298.8 L1296 300.3 L1310 309.9 L1324.6 318 L1348.1 334 L1352 338 L1361.7 350 L1381.5 372 L1404.4 392 L1428 410 L1456 428.3 L1486 443.9 L1500 450.2 L1514 459.4 L1526 465.5 L1532.1 470 M1240 281.2 L1272 298.4 L1278 300.7 L1290 303.6 L1296 305.9 L1306 312 L1321 320 L1342 334 L1348.8 340 L1358.2 352 L1378 373.6 L1404 396.6 L1424 412.8 L1432 418.5 L1452 431 L1494.9 454 L1510 463.8 L1521.7 470 M1240 285.8 L1270 302.1 L1278 305.4 L1294 310.5 L1316 321.4 L1338.1 336 L1345.3 342 L1356.5 356 L1373.4 374 L1410 407 L1420 415.4 L1438 428.3 L1472 446.8 L1490.6 458 L1509.1 470 M1240 290.5 L1256 299.8 L1264.5 304 L1278 310 L1294 315.9 L1314 324.8 L1320 328.2 L1334.2 338 L1342 344.5 L1353.2 358 L1366.5 372 L1414 416.3 L1434.5 432 L1474 453.1 L1484.5 460 L1497.5 470 M1240 295.2 L1256 304.8 L1280 315.5 L1314 329.6 L1330 339.8 L1338 346.4 L1359.6 370 L1393.4 402 L1410 418.9 L1432 436 L1453.9 448 L1468 456.7 L1475.5 462 L1485.1 470 M1240 300 L1248.8 306 L1254 308.7 L1266 313.6 L1278 319.3 L1294 325.8 L1312 334 L1320 338.3 L1328.5 344 L1336 350.4 L1358 373.1 L1374.2 388 L1391.9 406 L1402 417.8 L1406 421.7 L1418 430.6 L1432 442.2 L1450.8 456 L1466 464.6 L1473.7 470 M1240 305.1 L1250 311.6 L1264 317.3 L1278 324 L1292.8 330 L1318 342.8 L1326.1 348 L1340 360 L1356.4 376 L1370 388.2 L1390.2 410 L1400 422.5 L1422.2 444 L1448 463.5 L1459.8 470 M1240 310.3 L1249.6 316 L1262 321 L1274 327.1 L1292 334.4 L1304 341.9 L1320 349.9 L1338 363.4 L1366 388.6 L1371.2 394 L1386.1 412 L1394.3 426 L1400 433.2 L1420 451.8 L1444.3 470 M1240 315.3 L1246 318.7 L1258.5 324 L1272 331 L1288 337.1 L1302 346.4 L1318 354.7 L1342 371.3 L1360.7 388 L1366.5 394 L1388.5 430 L1393 436 L1414 455.5 L1432.1 470 M1240 320.1 L1256 327.2 L1270 334.8 L1286 340.9 L1298 349.2 L1314 357.7 L1324 364.7 L1336 371.5 L1342 375.9 L1361.3 398 L1372.6 418 L1381.6 432 L1386.1 438 L1394 446 L1421.2 470 M1240 324.8 L1252.8 330 L1268 338.7 L1282.2 344 L1296 353.4 L1310 361.1 L1320.9 370 L1334 379 L1338 383 L1354.5 402 L1358 407.5 L1365.5 422 L1377.1 438 L1388 449.2 L1411.9 470 M1240 336 L1252 341.3 L1276 353.9 L1288 361.2 L1304 369 L1330 386.8 L1334.7 392 L1345.5 406 L1356.7 424 L1368 438.6 L1375 446 L1388 458 L1402.4 470 M1240 348.7 L1258 356.4 L1286 371.5 L1300 378.4 L1312.3 386 L1322 392.9 L1330 400.6 L1344.3 422 L1349.1 428 L1365.4 446 L1391 470 M1240 360.7 L1248 364 L1262 371.4 L1278 378.1 L1300 390.1 L1308 395.5 L1313.1 400 L1328 415.6 L1338.9 430 L1350 439.8 L1362 451.8 L1372 460.7 L1380.6 470 M1240 371.8 L1256 381.3 L1272 387.4 L1284 394 L1294 398.5 L1299.6 402 L1333.2 436 L1348 447.6 L1366 464.4 L1371.3 470 M1240 383.8 L1250.7 390 L1264 396.5 L1276 404 L1290 409.4 L1294 411.6 L1326.6 440 L1344 453.4 L1361.1 470 M1240 395.5 L1255.8 404 L1272 414.3 L1290 422.9 L1308 434.4 L1336.5 456 L1350.7 470 M1240 406.2 L1254 415.1 L1270 424.4 L1292 435.1 L1304.2 442 L1330 459.5 L1341.2 470 M1240 416.9 L1248 422.5 L1270 435.6 L1288 442.7 L1296 446.9 L1314 458.3 L1330.3 470 M1240 427.8 L1253.7 436 L1266 444.3 L1272 446.8 L1282.7 450 L1290 453.4 L1307.5 464 L1315.4 470 M1240 438.3 L1248 442.4 L1264 452.9 L1282 460 L1300.5 470 M1240 448.8 L1260 460 L1272.9 466 L1280.1 470 M1240 459.7 L1260.9 470" fill="none" stroke="#8c8c8c" stroke-width="0.9" /><path clip-path="url(#c7)" d="M1497 230L1663 470 M1506 230L1672 470 M1556 215L1675 388 M1590 225L1675 350 M1640 228L1675 280 M1675 292L1602 362 M1602 362L1560 420 M1500 282L1606 282 M1606 282L1590 232 M1675 318L1500 250" fill="none" stroke="#8e8e8e" stroke-width="0.9" /><path clip-path="url(#c8)" d="M1606 527.9 L1642.3 520 M1606 541.3 L1613.5 539.1 L1630 536.1 L1649.5 531 L1657 530.4 L1673.5 530.8 L1681 529.9 M1606 552.4 L1615 549.4 L1634.5 546.1 L1648 541.4 L1654 540 L1661.5 539.4 L1675 539.8 L1681 539.1 M1606 562.5 L1612 559.8 L1618 558.3 L1637.5 556.8 L1642 555.3 L1652.5 550.5 L1658.5 549 L1664.5 548.7 L1676.5 549.7 L1681 549.6 M1606 574.9 L1613.7 571 L1621 569.5 L1627 570.2 L1637.5 573 L1643.5 573.1 L1648 571.3 L1657 564.1 L1661.5 561.8 L1667.5 560.9 L1681 561.7 M1606 590.5 L1618 585.3 L1622.5 584.2 L1628.5 584.2 L1642 586.1 L1648 585.5 L1653.6 583 L1663 576.1 L1667.5 573.8 L1672 572.7 L1681 572.1 M1606 601.9 L1610.6 601 L1621 596.3 L1627 594.6 L1633 594.3 L1646.5 595.3 L1652.5 594.3 L1657 592.2 L1666 585.7 L1670.5 583.2 L1675 581.9 L1681 581.3 M1606 612.1 L1610.5 612 L1613.5 611.3 L1625.5 605 L1631.5 603.3 L1637.5 603.2 L1649.5 604.8 L1655.5 604.3 L1661.5 601.5 L1672 593.5 L1676.5 591.8 L1681 591.3 M1606 624.6 L1612 625.8 L1616.5 625 L1621 622.4 L1628.9 616 L1634.5 613.7 L1640.5 613.5 L1654 615.7 L1660 615.3 L1665.5 613 L1675 606.2 L1678 604.9 L1681 604.2 M1606 637.9 L1613.5 638.2 L1619.6 637 L1625 634 L1634.5 626.6 L1639 624.7 L1643.5 624.1 L1657 624.9 L1663 624.4 L1669 622.3 L1681 616.2 M1606 647.5 L1616.5 646.7 L1622.5 645.3 L1627.1 643 L1637.5 635.6 L1642 633.5 L1648 632.4 L1660 632.6 L1666 632 L1672 630.1 L1681 625.6 M1606 655.7 L1621 654.1 L1625.5 653 L1630 650.8 L1640.5 643.3 L1646.5 640.8 L1652.5 640.1 L1664.5 640.7 L1669 640.3 L1673.5 639.1 L1681 635.4 M1606 664.4 L1612 663.3 L1624 663.4 L1630 662.4 L1634.5 660.1 L1644.7 652 L1649.5 650 L1652.5 649.6 L1657 649.9 L1672 652.9 L1676.5 652.3 L1681 650.1 M1606 675.3 L1609 674.2 L1613.5 673.6 L1630 675.8 L1636 675.5 L1642 673.1 L1651 667.2 L1655.5 665.9 L1660 666 L1673.5 668.2 L1681 667.1 M1606 687.4 L1612 685.4 L1616.5 684.9 L1633 686.9 L1639 686.8 L1645 685.5 L1655.5 681.3 L1660 680.1 L1681 678.9 M1606 698.3 L1613.5 695.9 L1619.5 695.1 L1637.5 697.2 L1643.5 697.2 L1649.5 696.2 L1664.5 691.9 L1681 691 M1606 710.6 L1615 708 L1621 707.2 L1625.5 707.5 L1639 710 L1646.5 710.1 L1653.2 709 L1669 704.9 L1681 703.2 M1606 731.2 L1627 725.2 L1648 721.1 L1681 712.4 M1606 743.9 L1654 727.8 L1681 720.1 M1606 753.2 L1634.5 743.3 L1657 734.4 L1681 727.8 M1606 762.7 L1619.5 757.6 L1639 751.7 L1661.5 741.6 L1669 739.5 L1681 737.3 M1606 773.3 L1622.5 766.9 L1645 762.8 L1649.5 760.9 L1660 754.8 L1666 752.5 L1672 751.6 L1681 751.8 M1606 783.5 L1625.5 776.2 L1631.5 775.3 L1648 774.6 L1654 772.9 L1664.5 767.9 L1669 766.3 L1675 765.6 L1681 766 M1606 792.3 L1610.5 791.1 L1622.5 786.3 L1628.5 784.5 L1636 784 L1649.5 785.2 L1654 785.1 L1660 783.7 L1672 778.6 L1676.5 778.1 L1681 778.5 M1612.5 800.5 L1627 794.5 L1634.5 793.3 L1642 794.5 L1654 799.4 L1657.8 800.5 M1662.4 800.5 L1666 799.3 L1675 794.5 L1681 793.3" fill="none" stroke="#8c8c8c" stroke-width="0.9" /><path clip-path="url(#c9)" d="M1680 473.5 L1676.9 480 L1678.3 502 L1677.7 522 L1678.5 528 L1680 533.4 M1667.4 456 L1668.6 464 L1667.9 474 L1669.7 482 L1671.8 500 L1673.1 526 L1675.9 536 L1680 544.4 M1654 456 L1656 464 L1660.2 474 L1662.5 482 L1668.3 524 L1669.9 532 L1674 542 L1680 551.8 M1641.1 456 L1644.3 460 L1648.1 466 L1653.1 476 L1655.4 482 L1664.6 528 L1667 536 L1672.8 548 L1680 557.7 M1632.3 456 L1638.2 464 L1650 486.3 L1652.3 494 L1660.8 530 L1664.3 540 L1672.3 554 L1680 562.7 M1624.4 456 L1628 460 L1632.2 466 L1646 491.7 L1648.1 498 L1657 532 L1660.9 542 L1670 557 L1674 561.7 L1680 567.5 M1616.7 456 L1622.4 462 L1626.8 468 L1642 495.9 L1644.8 504 L1653.1 534 L1657.5 544 L1668 560.1 L1680 572.7 M1608.9 456 L1618 465.6 L1622 470.7 L1637 498 L1640 505.5 L1649.4 536 L1653 544 L1662.3 558 L1673.7 572 L1680 581.3 M1606 461.9 L1614 470.4 L1618 475.4 L1631.5 500 L1635.1 508 L1645.8 538 L1648.6 544 L1652.4 550 L1665.5 568 L1680 591.1 M1606 471.3 L1614 480.7 L1626.1 502 L1642.3 540 L1645.3 546 L1657 562 L1664 574.4 L1680 600.5 M1606 480.5 L1612 488.6 L1621.1 504 L1629.1 522 L1640.9 546 L1650.9 560 L1660.9 578 L1680 609.6 M1606 489.9 L1616.3 506 L1625.2 526 L1636.4 546 L1648 564.2 L1666 596.3 L1680 619.5 M1606 499.5 L1613.7 512 L1622 531.3 L1635.2 552 L1638.3 558 L1645.8 570 L1663.2 602 L1674 619.1 L1680 630.8 M1606 509.2 L1610 516.3 L1617.3 534 L1627.2 548 L1632.2 558 L1643.3 576 L1659.4 606 L1670 622.8 L1680 642.5 M1606 520.2 L1612.6 536 L1619.5 546 L1625.9 558 L1637.3 576 L1656 610.7 L1666.8 628 L1680 654.4 M1606 532.6 L1618.3 556 L1631.3 576 L1644 598.3 L1653.2 616 L1662 630.3 L1680 666.2 M1606 542.9 L1613.4 558 L1626.7 578 L1641.5 604 L1649.7 620 L1659.1 636 L1680 676.7 M1606 554.9 L1612 565.3 L1623.2 582 L1638 607.9 L1671.4 672 L1680 686.9 M1606 564.9 L1618.5 584 L1634 611.2 L1666.7 674 L1676.1 690 M1606 574.5 L1614.9 588 L1630.8 616 L1650.3 654 L1664 679.2 L1670.5 690 M1606 583.5 L1611.4 592 L1627.3 620 L1637 638 L1646 656.5 L1665 690 M1606 592.7 L1631.7 638 L1642.5 660 L1659.7 690 M1606 602.5 L1629.6 644 L1639.2 664 L1654.3 690 M1606 612.7 L1626 647.5 L1635.8 668 L1648.8 690 M1606 622.5 L1622.6 652 L1632 671.4 L1643.1 690 M1606 632.8 L1619.7 658 L1627.7 674 L1637.2 690 M1606 644 L1623 676 L1631.2 690 M1606 655.2 L1616.9 676 L1625.3 690 M1606 667 L1611.7 678 L1619.1 690 M1606 679.8 L1612.4 690" fill="none" stroke="#8c8c8c" stroke-width="0.9" /><path clip-path="url(#c10)" d="M1632.2 680 L1633.1 683 L1634.8 684.5 L1638.8 686 L1643.5 686.5 L1647.5 686 L1651 684.7 L1657.1 680 M1621.8 680 L1618 681.4 L1609.1 683 L1606 684.7 M1606 697 L1610.6 701 L1613.5 702 L1616.5 701.8 L1619.5 699.8 L1625.5 693.6 L1628.2 692 L1631.5 691.1 L1643.5 690.8 L1649.5 689.8 L1654.3 687.5 L1664.3 680 M1681 738.3 L1677.2 741.5 L1675.8 744.5 L1675.7 746 L1676.2 747.5 L1677.7 749 L1681 750.1 M1606 708.6 L1612 714.3 L1615 716.3 L1618 717.5 L1621.3 717.5 L1622.5 716.9 L1624 714.8 L1625.7 707 L1627.4 702.5 L1629.5 699.5 L1631.5 697.8 L1636 695.9 L1648 694.4 L1652.5 693.1 L1655.5 691.4 L1666.4 683 L1670.5 681.2 L1675.9 680 M1681 731.6 L1676.5 733.7 L1673.5 736.6 L1663.7 752 L1664.5 753 L1666.1 753.5 L1681 755 M1651 753.3 L1648.2 755 L1647.2 758 L1648.9 761 L1652.5 762.3 L1655.5 761.6 L1657 760.6 L1659.6 758 L1662.9 753.5 L1657 752.6 L1651 753.3 M1681 720.4 L1673.5 716.8 L1672 716.4 L1670.5 717 L1671.7 722 L1671.5 726.5 L1669.4 732.5 L1665.8 738.5 L1663 741.7 L1660 743.8 L1655.5 745.4 L1646.5 747.1 L1642.7 749 L1640.5 751.4 L1639.4 753.5 L1638.6 758 L1639.8 762.5 L1643.5 767 L1649.5 770.6 L1654 771.5 L1657 770.7 L1658.5 769.8 L1664.6 764 L1669 760.9 L1673.5 759.5 L1681 758.7 M1606 734 L1609 729.9 L1612 728.3 L1625.5 727.7 L1628.5 727 L1631.4 725 L1633.3 722 L1634 719 L1633.9 707 L1635.2 704 L1636.6 702.5 L1640.5 700.6 L1651 699.3 L1654 698.4 L1657 696.5 L1664.2 689 L1668.2 686 L1673.5 683.8 L1681 682.5 M1681 704.7 L1676.5 705.4 L1670.5 703.9 L1666.4 701 L1665.2 698 L1666.5 693.5 L1670.5 689.3 L1675 687.2 L1681 686.3 M1606 760.1 L1607.4 758 L1607.9 749 L1608.7 744.5 L1610.5 740.2 L1612 738.1 L1615 735.8 L1618 734.9 L1622.5 734.7 L1631.5 735.3 L1634.5 734.8 L1635.9 734 L1639 729.7 L1645 716.9 L1646.5 715.5 L1648 715.3 L1651 716.4 L1654 718.5 L1660 723.9 L1662.4 728 L1662.3 732.5 L1659.6 737 L1655.5 739.5 L1651 740.3 L1640.5 740.7 L1637.5 742.4 L1634 749 L1631.3 758 L1631 762.5 L1632.5 767 L1635 770 L1644 777.5 L1652.5 786.5 L1657 788.5 L1661.5 788.9 L1664.5 787.8 L1666 785.5 L1665.8 774.5 L1666.7 771.5 L1668.4 768.5 L1670.5 766.3 L1673.5 764.4 L1681 762.6 M1621 780.4 L1618.7 785 L1616.3 794 L1615.2 801.5 L1615.7 806 L1618 808.5 L1622.5 810.1 L1628.5 810.7 L1633 809.7 L1637.5 806.1 L1640.2 801.5 L1641.9 795.5 L1641.6 791 L1640.5 789.2 L1637.6 786.5 L1628.5 781.2 L1624 779.5 L1622.5 779.5 L1621 780.4 M1606 833.6 L1607.8 831.5 L1609.2 828.5 L1610.5 819.5 L1609.8 813.5 L1608.9 812 L1606 810.2 M1619.3 746 L1621 745.1 L1622.5 745.5 L1623.3 747.5 L1622.5 749.3 L1621 749.9 L1619.5 749.2 L1618.9 747.5 L1619.3 746 M1606 775.8 L1608.7 780.5 L1609.9 786.5 L1609 792.8 L1607.8 795.5 L1606 797.8 M1681 813.5 L1678 816.2 L1675.9 819.5 L1674.3 824 L1674 827 L1675.6 831.5 L1681 836 M1606 841.3 L1610.5 839.1 L1613.2 836 L1617.9 824 L1619.9 821 L1624 818.8 L1633 817.6 L1637.5 816 L1640.5 813.1 L1646.5 803.2 L1649.5 799.8 L1652.5 798 L1655.5 797.3 L1664.5 797 L1669 796.3 L1673 794 L1675.2 791 L1676.2 786.5 L1673.8 776 L1674.1 773 L1676.5 769.5 L1681 767.6 M1675.2 866 L1675.2 863 L1673.4 860 L1670.5 858 L1666 857.2 L1663 858.4 L1661.5 859.9 L1659.9 863 L1659.4 866 M1654.5 804.5 L1660 803.1 L1666 803.6 L1672 805.5 L1673.5 807.5 L1672.6 812 L1669 819.6 L1666 823.9 L1663 826.1 L1658.5 826.5 L1654 825.1 L1650.3 822.5 L1648.4 819.5 L1648 815 L1649.2 810.5 L1651 807.4 L1654.5 804.5 M1606 846.9 L1612 845.7 L1615.5 843.5 L1618 840.5 L1623 831.5 L1625.7 828.5 L1630 827.1 L1633 827.3 L1636 828.3 L1640.5 831.2 L1645 835.8 L1652 843.5 L1654.5 848 L1654.9 851 L1654.2 855.5 L1652.3 861.5 L1649.9 866 M1681 849.2 L1679.5 849.3 L1678 848.7 L1675.3 846.5 L1676.6 845 L1679.5 846.2 L1681 847.6 M1606 852.2 L1613.5 852.2 L1618 851 L1621 848.6 L1627 840.8 L1630 838.7 L1633 838.4 L1637.5 840.1 L1642 843.7 L1645.4 848 L1646.9 852.5 L1646.4 857 L1644.7 860 L1642 862.2 L1639 863.4 L1630 864.9 L1627.4 866 M1606 858.2 L1610.5 859.2 L1613.5 860.8 L1615.5 863 L1616.5 866" fill="none" stroke="#8c8c8c" stroke-width="0.9" /><path clip-path="url(#c11)" d="M1606 796.9 L1615.5 790 M1606 802.1 L1622.8 790 M1606 806.9 L1629.9 790 M1606 811.6 L1636.8 790 M1606 816.6 L1624 803.3 L1643.2 790 M1606 822.2 L1625.5 806.5 L1641.7 796 L1649.3 790 M1606 828.1 L1613.5 821 L1627.5 809.5 L1645.9 797.5 L1655.1 790 M1606 833.8 L1630 812.2 L1649.5 799.2 L1660.7 790 M1606 838.9 L1634.5 813.5 L1652.5 801 L1665.8 790 M1606 843.9 L1639 814.8 L1655.5 802.8 L1670.6 790 M1606 849 L1619.8 836.5 L1632.7 826 L1642.3 817 L1657 805.5 L1674.8 790 M1606 854.2 L1622 839.5 L1634.9 829 L1678.8 790 M1606 859.5 L1615 851.9 L1625.9 841 L1638.6 830.5 L1658.5 812.5 L1681 791.4 M1606 864.6 L1618 854.7 L1629.8 842.5 L1658.5 816.8 L1681 794.8 M1606 869.6 L1622.4 856 L1633.6 844 L1661.5 818.1 L1681 798.1 M1606 875 L1611.8 869.5 L1625.5 858.3 L1638.7 844 L1665.1 818.5 L1681 801.4 M1606 880.9 L1614 872.5 L1629.9 859 L1651.8 835 L1667.5 819.9 L1681 804.8 M1606 887.2 L1616.2 875.5 L1633 860.5 L1654.2 836.5 L1669.6 821.5 L1681 808.3 M1606 893 L1620 877 L1637.5 860.3 L1657.9 836.5 L1672 822.5 L1681 812 M1606 898.4 L1613.5 890.6 L1623.6 878.5 L1645.5 856 L1660.1 838 L1673.5 824.4 L1681 815.7 M1606 903.7 L1615.7 893.5 L1626.9 880 L1650.6 854.5 L1663.5 838 L1681 819.4 M1606 909.3 L1654 854.8 L1666.8 838 L1681 822.9 M1606 915.3 L1645.7 868 L1657 855.2 L1668.8 839.5 L1681 826.2 M1606 921 L1649.1 868 L1659.6 856 L1670.7 841 L1681 829.5 M1606 926.2 L1630.6 895 L1662.7 856 L1672.6 842.5 L1681 832.8 M1606 931.1 L1613.8 922 L1633 896.5 L1644.4 883 L1653.3 871 L1664.5 857.6 L1674.5 844 L1681 836.2 M1606 935.9 L1620 919 L1635.2 898 L1646.7 884.5 L1656.5 871 L1666.4 859 L1681 839.7 M1606 940.9 L1625 917.5 L1637.4 899.5 L1650 884.5 L1658.6 872.5 L1681 843.3 M1606 946.2 L1628.7 917.5 L1640.7 899.5 L1652.5 885.4 L1681 847 M1606 951.8 L1632.2 917.5 L1642.8 901 L1655.1 886 L1681 850.6 M1606 957.3 L1623.8 932.5 L1635.5 917.5 L1646 901 L1658.1 886 L1681 854.2 M1606 962.8 L1627.2 932.5 L1637.7 919 L1648 902.5 L1661.1 886 L1681 857.7 M1606 968.3 L1612.6 958 L1629.4 934 L1640.9 919 L1651.2 902.5 L1666.1 883 L1681 861.3 M1606 973.8 L1616 958 L1624 947.2 L1632.7 934 L1643.5 919.7 L1653.2 904 L1671.1 880 L1681 865.1 M1608.1 976 L1617.3 961 L1627 947.7 L1636 934 L1645 921.9 L1656.3 904 L1673.9 880 L1681 869 M1611.7 976 L1620.6 961 L1629.4 949 L1638.1 935.5 L1648 921.8 L1659.3 904 L1681 873.1 M1615.1 976 L1622.9 962.5 L1632.7 949 L1665.2 899.5 L1681 877.2 M1618.3 976 L1625.1 964 L1635.8 949 L1669.9 896.5 L1681 880.9 M1621.5 976 L1628.4 964 L1638.8 949 L1672.4 896.5 L1681 884.4 M1624.7 976 L1630.6 965.5 L1642.8 947.5 L1673.9 898 L1681 887.7 M1627.7 976 L1633.7 965.5 L1649.6 941.5 L1681 891 M1630.8 976 L1637.7 964 L1652.5 941.5 L1662 925 L1681 894.4 M1633.7 976 L1642.5 961 L1655.5 941 L1663.6 926.5 L1673.1 911.5 L1681 897.9 M1636.6 976 L1646.1 959.5 L1657.9 941.5 L1666 926.5 L1681 901.6 M1639.4 976 L1648.8 959.5 L1660 942.1 L1668.3 926.5 L1681 905.4 M1642.2 976 L1651.3 959.5 L1661.9 943 L1669.7 928 L1681 909.2 M1644.9 976 L1652.9 961 L1663.4 944.5 L1671.9 928 L1681 912.8 M1647.4 976 L1655.3 961 L1665.7 944.5 L1674 928 L1681 916.2 M1649.9 976 L1657.6 961 L1667.8 944.5 L1675.2 929.5 L1681 919.6 M1652.3 976 L1659.9 961 L1669.9 944.5 L1681 922.8 M1654.6 976 L1662.1 961 L1671.9 944.5 L1681 926.2 M1656.8 976 L1663.4 962.5 L1673.5 945.2 L1681 929.8 M1658.9 976 L1665.5 962.5 L1675 946 L1681 933.5 M1661 976 L1681 937.4 M1663 976 L1681 941.1 M1664.9 976 L1681 944.7 M1666.8 976 L1681 948.1 M1668.7 976 L1681 951.5 M1670.5 976 L1681 954.9 M1672.3 976 L1681 958.3 M1674.1 976 L1681 961.9 M1675.8 976 L1681 965.5 M1677.5 976 L1681 969 M1679.2 976 L1681 972.5" fill="none" stroke="#8c8c8c" stroke-width="0.9" /><path clip-path="url(#c12)" d="M1675 878L1612 970 M1675 884L1612 977 M1675 962L1612 1076 M1675 978L1612 1090 M1675 905L1640 960 M1612 990 q26 -6 32 14 q6 30 -2 58 q-4 14 -10 22" fill="none" stroke="#8e8e8e" stroke-width="0.9" /><path clip-path="url(#c13)" d="M1680.5 1089.8 L1675.4 1084 L1668.5 1079 L1664 1077.7 L1661 1078.4 L1659.5 1079.5 L1657.6 1082.5 L1656.7 1085.5 L1657.1 1099 L1655 1114 L1655.7 1120 L1657.5 1124.5 L1659.5 1127.7 L1662.5 1129.6 L1665.5 1129.3 L1670 1127.6 L1676.2 1124.5 L1680.5 1121.6 M1658 1139.4 L1656.5 1140.7 L1655.5 1142.5 L1655.3 1145.5 L1656.5 1147.6 L1658 1148.6 L1659.5 1148.8 L1661 1148.3 L1662.2 1147 L1662.8 1144 L1662.5 1142.3 L1661 1139.8 L1659.5 1139.1 L1658 1139.4 M1680.5 1046.7 L1673 1040.9 L1670 1039.7 L1668.5 1039.9 L1665.5 1041.9 L1664 1043.8 L1658.9 1052.5 L1655 1057 L1650.5 1059.8 L1643 1061.9 L1640 1063.4 L1638.5 1065.8 L1638.3 1067.5 L1639.3 1075 L1639.1 1078 L1635.9 1087 L1635.5 1090 L1637 1094.4 L1642.5 1102 L1644.1 1106.5 L1644.5 1117.2 L1642.1 1138 L1642 1144 L1643.4 1150 L1647.5 1156.7 L1652 1161.7 L1656.5 1165.5 L1659.5 1166.4 L1662.5 1165.7 L1670 1161.2 L1674.5 1157.4 L1677.5 1153 L1680.5 1145 M1680.5 1070.1 L1679.5 1067.5 L1680.5 1065.2 M1680.5 1014.2 L1670 1009.5 L1667 1009.6 L1665.5 1010.3 L1663.9 1012 L1658 1022.5 L1651.8 1031.5 L1650.7 1034.5 L1649.1 1042 L1647.4 1045 L1644.5 1047.2 L1632.5 1051.8 L1628.3 1055.5 L1626.6 1058.5 L1625.9 1061.5 L1626.5 1075 L1623.9 1088.5 L1624.7 1094.5 L1628.7 1103.5 L1630.1 1108 L1629.9 1112.5 L1627.3 1120 L1626.9 1124.5 L1630.1 1138 L1630.4 1151.5 L1631.6 1156 L1639 1166.5 L1645.1 1177 L1651.8 1184.5 L1658 1189 L1668.5 1193.7 L1676.2 1199.5 L1680.5 1200.6 M1634 1000 L1634.1 1003 L1636.2 1012 L1634.9 1015 L1631 1019.9 L1628.7 1024 L1627.4 1028.5 L1626.2 1039 L1624.8 1042 L1618.5 1051 L1616.6 1058.5 L1617.3 1073.5 L1614.9 1090 L1615.5 1094.5 L1618 1103.5 L1618.2 1106.5 L1617.5 1109.9 L1614 1117 L1613.5 1120 L1614.8 1124.5 L1619.3 1133.5 L1620.5 1138 L1620.6 1142.5 L1619.2 1150 L1619.2 1154.5 L1627.5 1180 L1629.5 1182.1 L1637 1185.4 L1640 1187.2 L1643.4 1190.5 L1645.2 1193.5 L1645.7 1198 L1643.1 1205.5 L1642.8 1208.5 L1644 1213 L1646.6 1217.5 L1652 1224.2 L1656.5 1227.7 L1667 1230.1 L1673.8 1232.5 M1677.9 1232.5 L1679 1231.7 L1679.9 1229.5 L1680.5 1223.1 M1613.9 1000 L1611.4 1003 L1610 1006.4 L1609.7 1009 L1610.1 1018 L1609.1 1022.5 L1602.5 1032.9 L1601.4 1036 L1601.5 1040.5 L1604.4 1052.5 L1604.3 1066 L1605 1079.5 L1602.9 1090 L1596.2 1105 L1595.2 1112.5 L1594.8 1121.5 L1595.4 1126 L1596.6 1129 L1603.9 1139.5 L1604.6 1151.5 L1610 1162.2 L1611.5 1166.5 L1611.5 1169.5 L1610.2 1172.5 L1601.7 1180 L1600.7 1183 L1601.1 1186 L1602.7 1189 L1612.2 1199.5 L1614.3 1204 L1618.1 1214.5 L1620.5 1218.1 L1628.4 1226.5 L1629.7 1232.5 M1600.7 1000 L1599.2 1006 L1599.3 1015 L1598.5 1019.5 L1596.2 1024 L1590.3 1031.5 L1589.1 1034.5 L1589.4 1039 L1592.4 1046.5 L1593.6 1051 L1593.5 1055.5 L1591.9 1063 L1591.7 1066 L1594.2 1076.5 L1594.4 1081 L1593.9 1084 L1592 1087.8 L1584 1096 L1582.6 1099 L1582.6 1102 L1584.3 1112.5 L1582.4 1127.5 L1583.6 1132 L1587.8 1141 L1589.7 1148.5 L1591.7 1163.5 L1589.6 1178.5 L1589.7 1184.5 L1590.6 1189 L1594.1 1199.5 L1596 1210 L1598.6 1214.5 L1607 1221.8 L1609.9 1225 L1611.9 1228 L1613.7 1232.5 M1590.4 1000 L1588.1 1015 L1586 1018.2 L1580 1023 M1580 1172 L1581.7 1187.5 L1584 1199.5 L1585.2 1210 L1586.3 1214.5 L1587.7 1217.5 L1590.5 1221.4 L1599.1 1229.5 L1601.1 1232.5" fill="none" stroke="#8c8c8c" stroke-width="0.9" /><path clip-path="url(#c14)" d="M245.1 1232 L236 1221.8 M264.1 1232 L261.6 1228 L257.7 1220 L255.1 1216 L251.1 1212 L241 1204 L236 1198.5 M289.8 1232 L284.1 1226 L280 1218 L277.2 1214 L272.8 1210 L261.9 1202 L257.8 1198 L249.2 1184 L236 1167.8 M313.1 1232 L307.3 1226 L301 1214 L296.2 1208 L285.8 1198 L276.5 1188 L264 1177.4 L258.9 1172 L256.4 1168 L252.4 1158 L249.7 1154 L245.5 1150 L236 1143.2 M341.1 1232 L330.4 1224 L312 1203.2 L307.3 1196 L303.1 1186 L300 1182.1 L294.4 1178 L283.3 1172 L278 1168 L275 1164 L270 1154 L266.9 1150 L255.1 1138 L246.4 1128 L236 1118.5 M364.1 1232 L359.9 1226 L354.9 1216 L351.6 1212 L346 1208.1 L333.8 1202 L328 1197.2 L325.8 1194 L321.8 1184 L318 1178.1 L283.4 1144 L279 1138 L275.4 1130 L272.8 1126 L267.8 1122 L254.1 1114 L249.7 1110 L247.2 1106 L242.6 1094 L236 1084.4 M383.6 1232 L377.7 1226 L375 1220 L374.1 1216 L374.2 1214 L368.1 1206 L356 1193.9 L352 1192.3 L349.5 1190 L334.7 1174 L330.1 1168 L329.4 1166 L330 1164 L322 1154 L316 1147.8 L314 1146.9 L312 1146.7 L308 1144.6 L304 1141.8 L300.2 1138 L297.3 1132 L297.1 1130 L298 1128 L294 1122 L290 1117.2 L276 1103.3 L274 1104.7 L270 1102.5 L264 1097.9 L258 1091.5 L253.8 1086 L250.7 1080 L250.3 1078 L252 1076 L245.2 1066 L236 1056.6 M393.6 1232 L386 1223.9 L370 1204.5 L340 1171.4 L324.1 1152 L308.9 1136 L296 1119.5 L286 1107.8 L262 1082.8 L248 1063.4 L236 1050.6 M397.1 1232 L389.4 1224 L372.8 1204 L342.2 1170 L327.9 1152 L312 1135 L285.7 1102 L265.9 1082 L250 1060 L236 1043.7 M400.6 1232 L390.9 1222 L376 1204 L345.7 1170 L330 1150 L315.3 1134 L287.3 1098 L268 1078.8 L254 1059.1 L236 1036.1 M404.1 1232 L392.5 1220 L364 1186.3 L347.6 1168 L334 1150.1 L316 1129.7 L290.6 1096 L270.7 1076 L244 1038.3 L236 1028.1 M407.5 1232 L395.9 1220 L366 1184.6 L351.1 1168 L337.7 1150 L322.1 1132 L310 1116.7 L293.8 1094 L274 1073.8 L258.3 1052 L248.5 1036 L238.5 1022 L236 1017.1 M410.9 1232 L397.5 1218 L368.9 1184 L354.5 1168 L339.8 1148 L312 1114 L298 1093.4 L293.3 1088 L280 1074.6 L272 1064.6 L263 1052 L254 1035.5 L245.6 1022 L242.8 1016 L239.5 1006 L236 997.5 M414.3 1232 L398 1214.8 L370.5 1182 L356.3 1166 L342 1146 L314.6 1112 L300 1090.2 L283.2 1072 L270.5 1056 L265.5 1048 L251.1 1020 L245.5 1004 L239.6 990 L236 980.1 M417.6 1232 L392 1204.3 L373.8 1182 L359.7 1166 L342 1141.2 L317.2 1110 L304 1089.8 L282 1064.2 L274 1054 L269.2 1046 L257 1020 L251.6 1004 L242.4 980 L236 967.2 M420.8 1232 L393.1 1202 L376 1180.7 L363.2 1166 L336.2 1128 L319.7 1108 L306 1087 L277.6 1052 L273.1 1044 L263.1 1022 L248 978 L238.8 960 L236 952.5 M424 1232 L394.4 1200 L378.7 1180 L365 1164 L340 1127.6 L323.8 1108 L308 1084.3 L281.2 1050 L277.9 1044 L268.1 1022 L253.5 976 L244.6 958 L237.5 940 M427.2 1232 L397.6 1200 L381.9 1180 L368.5 1164 L343 1126 L326.4 1106 L302 1070.2 L285 1048 L281.9 1042 L272.4 1020 L258 972.3 L243.7 940 M430.3 1232 L399 1198 L384 1178.5 L371.9 1164 L358.3 1144 L345.7 1124 L329.1 1104 L304 1066.6 L290.2 1048 L287 1042 L277.8 1020 L273.4 1004 L268.4 990 L264.1 974 L254.1 946 L251.4 940 M433.4 1232 L400.4 1196 L386.9 1178 L374 1162 L360.5 1142 L348.4 1122 L330.4 1100 L316.8 1080 L306.8 1064 L295.6 1048 L292.5 1042 L284.3 1022 L279.1 1004 L273.6 990 L265 960 L262.4 946 L260.6 940 M436.5 1232 L403.5 1196 L377.6 1162 L362.8 1140 L351.2 1120 L336.2 1102 L322.1 1082 L311.5 1064 L301.1 1048 L298.3 1042 L290 1020.1 L285.2 1004 L277.8 986 L271.2 960 L270.3 946 L269.3 940 M440 1232 L403.8 1192 L394 1177.9 L380.3 1160 L369.4 1144 L354.6 1118 L338 1097.6 L328 1084 L322.9 1076 L316 1062.4 L306.7 1046 L302 1031.3 L297 1018 L293.7 1006 L284 986 L278.3 962 L277.7 946 L276.9 940 M443.7 1232 L426 1211.9 L410.9 1196 L406.1 1190 L372 1141.2 L367.8 1134 L361.9 1122 L358.2 1116 L334 1085 L328.1 1076 L314.2 1048 L305.2 1018 L302 1004 L300 999.6 L293.2 988 L290.8 982 L285 962 L283.4 940 M447.5 1232 L428.1 1210 L414.8 1196 L409.9 1190 L374.6 1138 L366 1121.2 L361.7 1114 L348.7 1096 L337.5 1082 L332.5 1074 L320.1 1046 L312.9 1018 L310 1002 L308 997.3 L300.9 984 L292.5 964 L290.7 956 L289.4 940 M451.3 1232 L443.7 1224 L430.1 1208 L418.7 1196 L412.4 1188 L389.3 1152 L378.1 1136 L368.8 1118 L358 1100.9 L352 1092.2 L342.2 1080 L338.5 1074 L326.6 1046 L323.6 1032 L319.8 1018 L317.9 1006 L316 999 L298.3 960 L297 954 L295.5 940 M455.2 1232 L447.4 1224 L434 1208 L421 1194 L416.3 1188 L403.5 1168 L394 1151.3 L381.8 1134 L373.4 1118 L360 1095.3 L345.1 1074 L334.1 1048 L330.3 1032 L326 1018 L322.2 1000 L313.5 976 L305 958 L301.5 940 M459.2 1232 L449.3 1222 L437.8 1208 L425 1194 L418.9 1186 L407.8 1168 L398.3 1150 L385.7 1132 L363.6 1092 L352 1074 L340.7 1046 L337 1032 L331.2 1016 L328 1002 L320 975.3 L311.9 956 L307.7 940 M463.3 1232 L451.3 1220 L441.5 1208 L427.4 1192 L422 1184.5 L412 1168 L402.2 1148 L390.9 1132 L377.9 1110 L368 1090.2 L359.7 1076 L348.6 1048 L343.6 1032 L336.7 1016 L328.7 988 L325 972 L318.9 956 L313.8 940 M467.4 1232 L455 1220 L433.1 1194 L427.1 1186 L416.1 1168 L406 1146.1 L395 1130 L379.3 1104 L373 1090 L364.8 1074 L354.7 1046 L350.2 1032 L341.6 1014 L333.7 988 L329.9 970 L320.1 940 M471.5 1232 L464 1225.3 L458 1219.1 L437.2 1194 L431.2 1186 L420.3 1168 L412.7 1150 L410 1144.7 L388.6 1112 L384 1104 L370.4 1074 L360.8 1046 L356.5 1032 L348.3 1016 L345.9 1010 L338.6 988 L335 970 L326.6 940 M475.5 1232 L466.5 1224 L460.7 1218 L441.2 1194 L435.4 1186 L424 1167 L417.1 1150 L414 1143.6 L401.7 1124 L392 1109.7 L388 1102.5 L375.6 1074 L366.4 1046 L361.8 1030 L352.9 1012 L344.1 990 L342.5 984 L335.1 946 L333.5 940 M479.5 1232 L470.3 1224 L464 1217.5 L446.8 1196 L441 1188 L427.7 1166 L420.6 1148 L416.5 1140 L407 1124 L396 1108 L392.6 1102 L380.6 1074 L371.6 1046 L366.9 1028 L348.8 988 L346.7 980 L343.2 960 L341.7 946 L340.5 940 M483.5 1232 L472.2 1222 L466.5 1216 L446.6 1190 L431.9 1166 L424 1146 L414 1127 L409.8 1120 L400 1106.1 L396.7 1100 L384.9 1072 L376.6 1046 L373.4 1032 L371.6 1026 L362.6 1004 L355.5 990 L353.3 984 L349.3 960 L348.6 946 L347.7 940 M487.6 1232 L476.2 1222 L470.4 1216 L457.8 1200 L450.8 1190 L435.2 1164 L427.3 1144 L417.5 1124 L413.9 1118 L405.4 1106 L401.1 1098 L390 1072 L381.5 1046 L377.3 1028 L369.6 1004 L360 983.4 L358.8 978 L356.3 960 L355.9 946 L355.2 940 M491.5 1232 L480.3 1222 L472.6 1214 L463.1 1202 L454.8 1190 L438.5 1162 L430.4 1142 L425.6 1132 L425.2 1130 L423.9 1128 L423.7 1126 L422.4 1122 L416 1114 L409.6 1104 L398.7 1080 L386.5 1046 L382 1027 L378.7 1016 L375.3 1000 L368.6 982 L364.5 958 L363.9 940 M498.6 1232 L484 1221.8 L477.9 1216 L470.3 1206 L462.6 1194 L460.9 1190 L458.6 1180 L456.7 1176 L447.3 1166 L444.8 1162 L444.2 1158 L445.7 1148 L445.4 1134 L446.5 1130 L450.8 1120 L451.4 1116 L450.1 1110 L446 1102.4 L440.5 1094 L436 1089.6 L426.1 1084 L410 1078 L406 1076 L403.6 1074 L401 1070 L397.6 1060 L396 1057.7 L390.6 1044 L387 1028 L386 1026 L384.5 1018 L384.6 1012 L387.2 1002 L387.7 998 L387.2 994 L384.4 984 L384.2 980 L384.8 974 L384.2 970 L382 967.1 L376 963.9 L374 961.3 L373.7 960 L373 954 L373.5 948 L374 945.8 L377.6 942 L378.1 940 M515.4 1232 L494.5 1210 L482 1198.1 L478 1192 L476.8 1188 L475.2 1176 L468.4 1160 L467.4 1148 L464.3 1136 L464.4 1130 L467.1 1120 L467.6 1114 L465.6 1102 L464.7 1092 L463.1 1088 L459.2 1084 L446.6 1076 L442.2 1072 L439.7 1068 L436 1057.8 L432 1051.4 L424 1043.4 L420 1040.8 L412 1037.2 L408 1034.2 L404 1028.6 L400 1020.9 L398.9 1014 L402.1 998 L402.9 986 L404 982 L408.1 972 L408.9 968 L408.7 964 L406.2 952 L406.6 940 M527.1 1232 L515.5 1206 L511.6 1202 L498 1193 L495.2 1190 L493.3 1186 L491.2 1176 L486.1 1162 L485 1146 L480.5 1132 L480.3 1128 L481.8 1116 L480.7 1100 L482.2 1088 L481.8 1084 L480.3 1080 L478 1076.6 L474 1072.7 L460 1064 L452 1055.8 L447.4 1050 L443.9 1044 L442.4 1040 L440.1 1030 L438 1025.7 L434 1021.1 L424.1 1014 L422.1 1012 L420.9 1010 L420.5 1006 L421.2 998 L420.2 988 L420.5 984 L422.5 978 L428.6 966 L430.7 952 L435.3 940 M533.3 1232 L530.2 1220 L528.1 1204 L526 1197 L517.7 1180 L515 1176 L506 1165.9 L503.6 1162 L502.4 1158 L501.5 1144 L497.6 1134 L496.7 1130 L497 1116 L494.3 1104 L494 1100 L495.6 1084 L493.3 1070 L493.2 1060 L492.4 1056 L490 1052.4 L486 1050 L482 1049.1 L468 1047.5 L463.8 1046 L460 1043.3 L456.6 1038 L453.1 1026 L448.3 1016 L446.3 1010 L445.7 998 L443.4 986 L443.9 982 L445.6 978 L451.4 968 L455.4 954 L464.9 940 M538.3 1232 L535.7 1220 L534.2 1204 L531 1188 L529.6 1176 L528.1 1170 L523.7 1158 L522.3 1142 L519 1130 L519.1 1126 L521 1118 L521.1 1114 L519.4 1110 L513.8 1104 L511.5 1100 L510.7 1096 L510.4 1086 L506.8 1072 L506.9 1066 L508.6 1054 L507 1042 L506.9 1038 L510 1026 L509.7 1022 L508 1018.6 L506 1016.3 L504 1014.7 L500 1013.2 L494 1014.7 L481.4 1020 L478 1020.8 L474 1020.9 L471.2 1020 L468 1018 L466 1015.6 L464.5 1012 L464.3 1010 L465 1006 L469 998 L470.3 994 L470.1 986 L470.7 984 L472 981.9 L476 980 L480 980.2 L484 982.3 L485.3 984 L485.7 986 L485.7 992 L486.3 994 L489.2 998 L494 1001.9 L498 1003.9 L500 1004.3 L504 1002.9 L506.7 1000 L508 997.2 L508.3 994 L507.8 992 L503.4 984 L502.8 982 L503.6 978 L508.8 970 L510 967.4 L510.7 964 L510.2 960 L506.6 950 L506.4 946 L506.9 940 M542.5 1232 L540.1 1218 L539 1204 L536.7 1188 L535.8 1174 L532.2 1154 L531 1132 L532.9 1114 L531.8 1098 L531.7 1086 L530.4 1080 L526.2 1070 L525.5 1066 L526.4 1054 L525.7 1042 L526.2 1038 L529.8 1024 L529.7 1010 L531 996 L530.7 992 L527.7 980 L527.4 976 L528 964 L527.2 950 L529 940 M546.5 1232 L544.4 1220 L543.3 1204 L541.5 1190 L540.6 1172 L538.3 1156 L537.4 1136 L537.6 1128 L539 1114 L538.9 1098 L539.6 1084 L537.4 1066 L536.3 1040 L538.6 1024 L538.9 1010 L540.3 994 L537.9 976 L537.7 964 L536.7 950 L537.6 940 M550.2 1232 L548.2 1220 L547.3 1204 L545.5 1188 L544.9 1172 L543.2 1154 L542.5 1134 L544 1114 L544.1 1098 L545.2 1082 L543.6 1040 L545.3 1024 L545.8 1010 L547.3 994 L545.9 976 L545.6 964 L544.1 950 L544.4 940 M553.6 1232 L551.9 1220 L551 1202 L549.2 1186 L547.1 1134 L550 1082 L549.9 1038 L553.4 992 L552.3 964 L550.6 948 L550.6 940 M556.9 1232 L555.3 1220 L554.7 1202 L552.8 1184 L551.6 1132 L554.4 1080 L555.5 1038 L558.7 992 L558.1 962 L556.6 940 M560.1 1232 L558.6 1220 L558 1200 L556.4 1182 L556.7 1148 L556 1130 L557.2 1112 L557.5 1094 L560.3 1056 L560.8 1038 L563.4 992 L563.3 960 L562.4 940 M563.3 1232 L561.7 1218 L561.2 1200 L559.9 1182 L561.1 1148 L560.5 1130 L561.6 1112 L561.8 1092 L565.2 1054 L566.6 1026 L567.7 990 L567.9 940 M566.3 1232 L564.7 1216 L563.2 1176 L565.5 1146 L565.2 1128 L566 1112 L566 1092 L570 1052 L571.1 1032 L571.8 974 L573.3 940 M569.2 1232 L567.6 1214 L566.4 1176 L569.4 1144 L570.4 1088 L574.6 1052 L575.5 1040 L575.8 1028 L575.2 1006 L575.9 974 L579 940 M572.1 1232 L570.4 1214 L569.7 1174 L573.2 1142 L574.8 1086 L579.3 1052 L580.5 1038 L580.7 1028 L579.4 1006 L580.4 972 L582 959.1 L586.2 940 M574.9 1232 L573.2 1212 L572.8 1174 L573.7 1164 L577.1 1140 L578.7 1086 L580.2 1074 L584.5 1048 L585.9 1034 L585.9 1026 L583.8 1004 L585.6 972 L587.3 962 L590 954.2 L594 947.2 L599.7 940 M577.6 1232 L575.9 1210 L576 1174 L576.9 1164 L580.9 1140 L582.1 1096 L582.9 1084 L588.8 1050 L590.9 1034 L591 1024 L589.2 1004 L589.6 994 L592 979.4 L594.8 968 L596.4 964 L606 946.8 L608.8 940 M580.4 1232 L578.6 1208 L579.2 1174 L580.3 1164 L584 1146 L585.1 1138 L586.3 1096 L587.2 1084 L594.4 1048 L596.9 1032 L597.1 1024 L595 1006 L595.3 998 L598 986.9 L606 968.7 L615.1 940 M583.2 1232 L581.5 1206 L582.9 1172 L584 1163.7 L588.7 1144 L590 1136 L591.2 1096 L592.3 1084 L594 1075.6 L600.4 1052 L604.5 1028 L604.9 1020 L602.7 1004 L603 998 L605.2 990 L612.9 974 L615.1 968 L621 940 M586.2 1232 L584.7 1206 L586.5 1176 L588.1 1164 L594.5 1142 L596 1134 L598 1090 L600 1080 L606.5 1058 L611.8 1024 L612.4 1016 L611.2 1002 L611.6 996 L614 988 L621.8 972 L624.1 966 L625.2 960 L626.1 946 L627.2 940 M589.4 1232 L589.5 1224 L588.3 1210 L588.3 1202 L591.9 1172 L594 1162.6 L601.3 1144 L603.8 1134 L605 1122 L606.5 1088 L608.3 1078 L613.2 1058 L616 1036 L620.2 1016 L620.8 1010 L620.3 998 L620.7 994 L623.1 986 L630.3 972 L633.2 964 L633.9 958 L633.4 946 L633.9 940 M593.2 1232 L593.6 1222 L592.6 1206 L593.5 1196 L596 1185.1 L606.6 1152 L610 1138 L612 1120 L613.8 1088 L614.7 1080 L620.1 1056 L623.4 1032 L625.9 1024 L631 1012 L632.9 1006 L633.4 1002 L632.8 992 L633.5 986 L639.8 968 L641.2 962 L641.6 956 L640.7 940 M597.9 1232 L599.5 1222 L599.5 1208 L600 1201.7 L601.7 1196 L606.8 1184 L609.4 1176 L615.4 1142 L620.2 1104 L621.5 1082 L622.7 1074 L628.5 1052 L630.4 1038 L632 1031 L634.9 1024 L642.4 1010 L645 1002 L645.3 996 L643.6 982 L644.4 976 L647.9 958 L648.1 952 L647.2 940 M604.4 1232 L607.8 1220 L611.5 1200 L616 1184 L617.7 1176 L620 1152 L623.8 1124 L629.8 1096 L630.6 1078 L631.5 1072 L638.3 1050 L642.4 1028 L650.7 1008 L653 1000 L653.2 994 L650.7 978 L651.1 972 L654.1 954 L653.7 940 M610.8 1232 L618.4 1210 L623.5 1190 L625.6 1176 L626.7 1150 L630.1 1128 L633.7 1114 L641.5 1094 L642.4 1088 L641.4 1074 L642.2 1066 L648.2 1044 L651.3 1024 L658.5 1004 L660 998 L660.3 992 L657.6 980 L656.9 974 L657.4 968 L660.7 950 L661 940 M617.3 1232 L620 1225.3 L629.4 1206 L633.1 1194 L634.3 1182 L633.4 1158 L634.4 1146 L636.7 1134 L639.8 1122 L642.6 1114 L649.2 1098 L651.5 1090 L651.9 1084 L650.2 1070 L650.6 1062 L656.1 1040 L659.1 1020 L666.3 1000 L667.8 994 L667.7 988 L664 976 L663.5 968 L665.2 960 L671.2 940 M624.5 1232 L628 1225.4 L638.1 1210 L640.5 1204 L642 1198.3 L643.1 1184 L641 1160 L641.5 1148 L643.7 1138 L648.9 1120 L659 1090 L660 1082 L657.5 1066 L657.9 1058 L664.3 1036 L667.5 1016 L675 996 L676.5 990 L676.4 984 L672.6 974 L671.6 970 L671.8 964 L674.6 956 L683.1 940 M634.5 1232 L644 1217 L646.1 1212 L648.3 1204 L649.7 1194 L650.1 1184 L649.8 1176 L647.9 1158 L648.5 1148 L650.9 1138 L667.6 1086 L668.3 1078 L665.2 1064 L665.4 1056 L667.7 1048 L674 1032 L675.2 1026 L676.8 1012 L683.6 992 L685 986 L685.1 980 L681.8 968 L681.7 962 L683.6 956 L691.6 940 M646.2 1232 L652.1 1216 L653.9 1208 L655 1200 L656 1180 L654.5 1158 L655.1 1148 L657.9 1138 L666.4 1118 L670.6 1102 L676.7 1082 L677.4 1074 L674.1 1060 L674.1 1054 L675.7 1048 L681.8 1034 L683.7 1028 L684.6 1022 L684.9 1012 L685.7 1006 L692 986 L693.1 980 L693 974 L691.1 964 L691.5 958 L693.4 952 L699 940 M654.6 1232 L658.9 1214 L660.5 1202 L662.3 1174 L661.6 1156 L662 1149.6 L665 1140 L675.7 1122 L678.4 1114 L680.4 1096 L684.5 1080 L685.7 1072 L685.3 1066 L683.3 1056 L683.4 1050 L685 1044 L691.4 1026 L692.3 1020 L692.4 1008 L693.1 1002 L694.8 996 L700.6 980 L701.9 974 L702 970 L700.6 960 L700.7 956 L702.2 950 L706.6 940 M661.8 1232 L665.7 1210 L667.8 1186 L671.2 1164 L672.2 1150 L674.9 1142 L684 1124.8 L686.7 1116 L687.3 1110 L687.5 1094 L692.1 1074 L693 1068 L692.8 1062 L691.3 1052 L691.6 1046 L699.1 1022 L699.8 1016 L699.7 1004 L700.7 998 L703.6 990 L710.8 976 L713.1 970 L713.6 964 L712 952 L713 946 L714.8 940 M669.3 1232 L672.4 1210 L675.1 1186 L678 1176.4 L686 1158 L687 1152 L687.8 1138 L693.2 1116 L693.9 1110 L693.4 1096 L693.9 1090 L700.6 1064 L700.5 1058 L699.2 1048 L699.6 1042 L701.3 1036 L707.8 1018 L708.5 1012 L708.5 1000 L709.9 994 L712.7 988 L720.7 974 L723.6 966 L724.1 960 L722.2 948 L722.5 940 M677.5 1232 L678.4 1220 L683.5 1186 L686.3 1178 L694.3 1162 L696.9 1154 L697.2 1148 L696.1 1134 L699.8 1110 L699.7 1090 L702 1080 L709.2 1064 L711 1058 L711.1 1054 L709 1044 L709.3 1038 L711 1032 L716.1 1020 L718 1014 L718.8 1008 L718.9 998 L719.9 992 L722.1 986 L728.6 972 L731.1 964 L731.5 956 L729.8 946 L729.4 940 M685.6 1232 L685.4 1224 L686.1 1216 L691.7 1186 L695.2 1176 L704 1158 L705.7 1152 L705.8 1146 L703.3 1134 L703 1128 L706.3 1106 L706.2 1092 L706.9 1086 L710 1077.7 L720.3 1062 L722.4 1058 L723.7 1054 L723.7 1048 L720.9 1038 L720.8 1032 L726.8 1010 L727.9 994 L728.8 988 L736.2 968 L738.2 960 L738.3 954 L736 940 M692.8 1232 L692.2 1222 L692.9 1214 L699.3 1188 L703.3 1176 L712.2 1158 L714.6 1150 L714.6 1144 L710.8 1132 L709.9 1124 L710.7 1118 L714.2 1102 L715.8 1086 L718.8 1078 L729.6 1060 L732.4 1052 L732.7 1046 L729.8 1034 L729.6 1026 L734.2 1006 L735.5 990 L736.5 984 L743.7 964 L745.4 958 L745.6 950 L743.5 940 M699.8 1232 L698.8 1220 L700.3 1210 L703 1202 L710.4 1184 L720 1157.5 L722.1 1150 L722.5 1142 L721.7 1138 L717.6 1126 L717.6 1118 L719.1 1112 L724.3 1096 L728.2 1078 L737.2 1058 L739.7 1050 L740.1 1044 L736.8 1030 L736.7 1022 L741.6 1002 L744.1 982 L746 975.6 L752.5 960 L754.2 954 L754.7 948 L753.5 940 M707.9 1232 L706.4 1220 L707.4 1212 L710 1205.5 L719.4 1190 L721.9 1184 L725 1164 L728.9 1146 L729.1 1138 L725.2 1124 L724.8 1120 L725.2 1116 L727.5 1108 L734 1092 L738.4 1072 L745.2 1054 L747 1048 L747.5 1040 L743.8 1026 L744.1 1018 L750.8 996 L754.2 976 L762.8 952 L763.9 946 L764 940 M718.8 1232 L717.4 1218 L718 1212 L720.2 1206 L728.2 1190 L730.8 1180 L731.5 1162 L734.9 1144 L735.5 1138 L734.9 1132 L732.3 1120 L732.6 1114 L735.2 1106 L742.5 1092 L745 1086 L748.1 1066 L755.2 1044 L755.6 1036 L752.5 1024 L752.1 1020 L752.5 1016 L754.2 1010 L759.1 998 L761 992 L763.9 972 L770.4 950 L772.2 940 M728.9 1232 L729.8 1224 L729.1 1214 L729.3 1208 L730.7 1202 L735.5 1188 L737 1182 L737.6 1176 L737.5 1158 L742.3 1134 L742.1 1128 L740.2 1118 L740.4 1114 L741.3 1110 L743 1106 L753.4 1090 L756.8 1082 L757.3 1078 L756.7 1068 L757.1 1062 L762.6 1042 L763.7 1036 L763.6 1030 L761.8 1018 L762 1014 L763.4 1008 L769.4 990 L772.4 966 L779.7 940 M739.1 1232 L741.2 1226 L742.1 1220 L741.7 1216 L739.5 1208 L739.3 1202 L740.4 1196 L744.6 1182 L745.5 1176 L743.5 1160 L744 1152.9 L746.2 1146 L750 1138.6 L754 1133.1 L760.3 1126 L762.5 1122 L762.7 1118 L761.8 1116 L757.8 1112 L756.7 1110 L756.8 1108 L764.9 1092 L768 1082 L768.2 1074 L766.3 1064 L766 1058 L767.1 1052 L772.3 1036 L773.5 1030 L773.6 1026 L771.9 1016 L771.8 1010 L773.2 1004 L777.4 992 L778.9 986 L780 968 L781.1 962 L784 954 L791 940 M749 1232 L756 1220 L757.3 1214 L756.4 1210 L752 1202.8 L750.6 1198 L751 1192 L755.1 1178 L756.4 1172 L756.4 1168 L754.4 1158 L754.3 1154 L755.4 1150 L757.6 1146 L773.4 1128 L777 1122 L778.3 1118 L778.3 1112 L774.6 1102 L773.8 1098 L774 1092 L776.1 1076 L775.8 1070 L774.3 1060 L774.3 1054 L777 1044 L787.2 1024 L788.6 1020 L789 1016 L787.3 1008 L787.2 1004 L788.2 998 L792.5 982 L794.1 964 L796.3 956 L803.6 940 M760.8 1232 L767.5 1220 L770.2 1212 L770 1206 L768.4 1202 L764 1194 L763.1 1188 L764.3 1182 L769.4 1166 L771.3 1148 L775 1140 L786.7 1122 L788.5 1118 L789.5 1114 L788.9 1108 L783.8 1098 L782.2 1092 L782.3 1086 L783.9 1072 L782.9 1058 L783.1 1052 L784.2 1048 L787.6 1042 L792 1037.1 L802.1 1028 L806 1022.2 L807.6 1018 L808.5 1010 L805.8 996 L805.2 990 L806.1 968 L807.8 956 L812.9 940 M771.1 1232 L778.3 1214 L780.3 1206 L779.4 1200 L775.4 1192 L774 1188 L773.7 1184 L774.2 1180 L776.2 1174 L784.1 1156 L787.8 1140 L797.6 1120 L800.1 1112 L800.4 1108 L799.8 1104 L798 1100 L794 1094 L792 1089.5 L791.5 1084 L792.4 1078 L799.5 1052 L812.4 1030 L815.8 1022 L817.3 1016 L817.7 1006 L814.7 986 L815 970 L816.9 956 L822.2 940 M780.6 1232 L782.6 1224 L792.2 1204 L793.6 1198 L792.5 1194 L786 1185.6 L785 1182 L785.3 1178 L786.8 1174 L789.2 1170 L800.7 1156 L802.8 1152 L804 1148 L804.4 1144 L803.9 1130 L808.8 1110 L809.5 1104 L808.8 1098 L804.2 1086 L803.9 1080 L806.4 1072 L816 1052 L825.6 1018 L826.9 1006 L824.3 982 L825 968 L826 961.7 L828 954.9 L830.2 950 L835.8 940 M794.7 1232 L794.4 1226 L795.9 1220 L807 1200 L809.9 1192 L809.9 1186 L806.2 1176 L805.8 1172 L807.3 1166 L812.6 1152 L813.9 1146 L814.1 1140 L812.9 1130 L813 1124 L814 1118 L818.1 1102 L818.7 1096 L816.8 1082 L816.9 1078 L818 1074 L819.8 1070 L828.9 1056 L831.9 1048 L833.8 1028 L837.4 1006 L839.5 982 L843.1 958 L846 946.7 M811.2 1232 L809.9 1220 L810.3 1214 L812.2 1208 L819.3 1192 L821.2 1184 L821 1180 L818.2 1170 L817.8 1166 L818.6 1160 L821.6 1148 L822.5 1142 L822.3 1136 L821 1126 L821.6 1118 L824 1110.4 L827.3 1104 L832 1097.2 L840 1088 L842.2 1084 L843.4 1080 L844.6 1050 L844 1028 L846 1011.3 M820.9 1232 L821.2 1226 L819.9 1214 L820.7 1208 L823.9 1200 L832.8 1184 L834.5 1178 L834.2 1174 L830 1165 L829 1160 L829.5 1154 L833.1 1138 L832.6 1120 L833.6 1116 L835.8 1112 L846 1100.1 M846 1161 L844 1156 L843.4 1152 L843.9 1146 L846 1137.4 M830.5 1232 L832.1 1224 L831.1 1212 L831.7 1206 L834.2 1200 L846 1181.5 M841.2 1232 L845.3 1218 L846 1206.8" fill="none" stroke="#8c8c8c" stroke-width="0.9" /><path clip-path="url(#c15)" d="M784.8 1233 L778 1219.8 M796.5 1233 L796 1228.5 L793.9 1224 L791.3 1221 L782.5 1213.4 L778 1208 M803.6 1233 L802.1 1225.5 L799 1219.5 L796 1215.8 L785.5 1205.9 L782.2 1201.5 L778 1193.8 M811.7 1233 L807.4 1222.5 L804.4 1216.5 L793.1 1200 L787.2 1185 L778 1172.7 M825.2 1233 L818.5 1227.3 L814 1221.1 L801.2 1194 L794.5 1178.2 L789.4 1170 M834.5 1233 L823.7 1221 L820.8 1216.5 L815.5 1200 L806.8 1188 L803.8 1182 L802 1176 L801.3 1170 M841.8 1233 L830.7 1215 L826.4 1200 L824.5 1195.5 L821.5 1191.3 L814 1184.5 L811 1180.5 L809.3 1176 L808.7 1170 M850.6 1233 L845.8 1225.5 L838 1209.5 L827.5 1180.7 L826 1178.5 L820.1 1173 L818.4 1170 M862.9 1233 L856.6 1225.5 L850.7 1213.5 L843.4 1203 L840.2 1197 L838.7 1192.5 L837.9 1188 L838.3 1174.5 L837.4 1170 M873.9 1233 L865.9 1222.5 L856.4 1206 L848.9 1197 L847 1193.9 L845.3 1188 L845.8 1176 L844.9 1170 M885.7 1233 L882.5 1228.5 L872.5 1218.9 L867.7 1212 L864.3 1204.5 L862.4 1198.5 L861.4 1192.5 L861.3 1183.5 L859.7 1180.5 L856 1176.1 L852.2 1170 M897.4 1233 L891.8 1225.5 L888.5 1222.5 L877 1214.2 L874 1210.8 L872.1 1207.5 L870.6 1203 L870.1 1198.5 L870.7 1194 L873 1185 L872.9 1179 L871 1174.5 L868.1 1171.5 L865.7 1170 M907.2 1233 L895 1219.2 L890.5 1215.4 L881.5 1209.4 L877.9 1204.5 L877 1201.5 L876.9 1198.5 L879.5 1186.5 L879.8 1180.5 L878.7 1174.5 L876.8 1170 M918.9 1233 L910 1226.7 L905.5 1222.5 L895 1209 L888.2 1201.5 L886.8 1197 L887.4 1188 L887.1 1183.5 L883.9 1170 M929.4 1233 L925 1228.3 L911.5 1220.6 L906.6 1215 L904.4 1210.5 L903.3 1206 L903.1 1194 L902 1188 L899.9 1183.5 L894.8 1176 L892.1 1170 M936.6 1233 L932.5 1226.1 L929.5 1222.8 L926.5 1220.6 L916 1215.7 L913.6 1213.5 L911.7 1210.5 L910.4 1204.5 L910.4 1192.5 L909.6 1183.5 L908.2 1176 L906.2 1170 M943.7 1233 L933.8 1215 L929.5 1211.3 L921.6 1207.5 L920 1206 L918.4 1203 L917 1197 L916.3 1188 L917 1170 M955 1233 L950.5 1229.3 L947.2 1225.5 L944.7 1221 L940 1209.6 L937 1204.9 L934 1201.9 L927.4 1197 L925 1194 L923.5 1189.5 L923.1 1185 L926.1 1170 M964 1224.5 L961 1222.5 L955 1219.8 L950.5 1215.5 L941.5 1198.7 L935.8 1189.5 L934.7 1186.5 L934.5 1183.5 L936.4 1174.5 L936.4 1170 M964 1213.8 L958 1211.3 L955 1209.2 L952 1205.7 L949 1200 L946.4 1191 L946.3 1186.5 L947.3 1176 L946 1170 M964 1206 L961 1204.5 L958 1202.1 L955.6 1198.5 L954.6 1195.5 L954.3 1189.5 L956.3 1177.5 L956 1174.5 L954.5 1170" fill="none" stroke="#8c8c8c" stroke-width="0.9" /><path clip-path="url(#c16)" d="M1088.5 1170 L1100.5 1170 M1046.8 1170 L1064 1172.7 L1092.5 1174.4 L1113.5 1173.2 L1130.1 1170 M1030.7 1170 L1040 1173.5 L1050.5 1175.8 L1070 1178.1 L1085 1178.8 L1109 1178 L1124 1176.8 L1137.5 1174.2 L1150.5 1170 M1012.9 1170 L1029.5 1176.3 L1040 1179.1 L1065.5 1182.7 L1080.5 1183.6 L1121 1181.8 L1131.5 1180.7 L1140.5 1178.9 L1152.5 1175.6 L1159.8 1173 L1165.7 1170 M995.5 1170 L1008.5 1175.8 L1022 1180.6 L1031 1183.2 L1040 1184.7 L1067 1187.9 L1077.5 1188.5 L1103 1186.6 L1125.5 1186 L1134.5 1184.9 L1166 1177.3 L1173 1174.5 L1179.6 1170 M983.6 1170 L989.9 1174.5 L996.5 1177.8 L1015.7 1185 L1025 1187.9 L1035.5 1189.8 L1076 1193.5 L1083.5 1193.1 L1103 1190.8 L1130 1189.9 L1167.5 1182.9 L1175 1181 L1181 1178.5 L1187 1174.7 L1192.8 1170 M971.8 1170 L981.5 1177 L989 1181 L1022 1192.7 L1032.5 1194.7 L1052 1195.8 L1076 1198.2 L1083.5 1197.9 L1104.5 1195.1 L1130 1194.2 L1154 1189.7 L1176.2 1186.5 L1182.5 1184.6 L1188.5 1181.8 L1195.3 1177.5 L1205.4 1170 M956.5 1170 L975.5 1181.1 L983 1184.9 L1010.3 1194 L1023.5 1199 L1032.5 1200.4 L1049 1200.3 L1060 1201.5 L1070 1203.3 L1076 1203.7 L1082 1203.3 L1090 1201.5 L1103 1199.6 L1130 1198.3 L1155.5 1193.6 L1176.5 1192 L1182.5 1191.1 L1187 1189.6 L1191.5 1187.4 L1211.9 1174.5 L1217.9 1170 M956 1180.1 L972.5 1189.8 L978.5 1192.7 L1001 1198.6 L1022 1206.3 L1031 1207.8 L1050.5 1208 L1070 1210.6 L1079 1210.9 L1088 1210 L1106 1206.4 L1130 1205 L1155.5 1199.3 L1178 1199 L1187 1197.6 L1193.6 1195.5 L1208 1189.1 L1224.5 1182.7 L1230.5 1178.7 L1239.1 1170 M956 1191.8 L968.7 1200 L975.5 1203 L981.5 1204.4 L998 1206.3 L1022 1213.2 L1031 1214.3 L1050.5 1215 L1071.5 1216.9 L1085 1216.9 L1128.5 1212.6 L1157 1206.4 L1178 1205.4 L1185.5 1204.6 L1209.5 1198.5 L1225.4 1195.5 L1230.5 1193.8 L1235.5 1191 L1248.5 1178.8 L1254.5 1174.3 M956 1205 L965 1210.5 L974 1213.7 L980 1214.5 L998 1215.3 L1023.5 1220 L1068.5 1222.7 L1104.5 1222.5 L1133 1219.1 L1161.5 1213.8 L1187 1210.8 L1230.5 1203.6 L1236.9 1201.5 L1242.3 1198.5 L1254.5 1187.6 M956 1218.8 L965 1221.5 L972.5 1222.9 L1013 1226 L1055 1228.9 L1080.5 1228.7 L1107.5 1229.6 L1131.5 1226.3 L1154 1224.4 L1179.5 1218.9 L1230.5 1211.5 L1244 1208.1 L1248.7 1206 L1254.5 1202.4 M956 1228.8 L996.3 1233 M1158.4 1233 L1182.5 1226.4 L1208 1224.3 L1229 1219.5 L1254.5 1215 M1216.3 1233 L1227.5 1228.7 L1234 1227 L1241 1226.1 L1254.5 1225.7" fill="none" stroke="#8c8c8c" stroke-width="0.9" /><path clip-path="url(#c17)" d="M1246 1178.2 L1250.7 1170 M1246 1195.2 L1255.7 1182 L1263.2 1170 M1246 1208.3 L1266.8 1182 L1275.3 1170 M1246 1220.2 L1253.5 1210.5 L1262.5 1200.3 L1284.2 1179 L1290.3 1170 M1246.6 1233 L1254.8 1221 L1264 1211.3 L1274.5 1202.4 L1290.8 1191 L1295.5 1186.6 L1300 1180.3 L1304.8 1170 M1257.3 1233 L1261 1228.2 L1266.6 1222.5 L1295.5 1198.9 L1302.3 1192.5 L1308.6 1183.5 L1314.9 1170 M1271.2 1233 L1292 1212 L1305.4 1200 L1310.5 1194.6 L1316 1186.5 L1324.3 1170 M1284.2 1233 L1299.7 1215 L1313.5 1202.7 L1318.9 1197 L1324.3 1189.5 L1336.4 1170 M1297.3 1233 L1303.2 1224 L1306.9 1219.5 L1324 1204.2 L1336 1189.9 L1346.2 1179 L1349.5 1174.5 L1351.6 1170 M1310.3 1233 L1313.2 1227 L1317.9 1221 L1330.4 1209 L1343.5 1194.4 L1356.9 1182 L1360.1 1177.5 L1363.6 1170 M1320.3 1233 L1322.6 1228.5 L1326 1224 L1346.5 1201.8 L1352.5 1196.6 L1364.5 1188.1 L1367.6 1185 L1370.7 1180.5 L1375.3 1170 M1329.1 1233 L1334.5 1225.6 L1352.5 1206.6 L1359.7 1201.5 L1372 1195.3 L1377.3 1191 L1380.6 1186.5 L1389.7 1170 M1339.4 1233 L1360 1212.5 L1365.1 1209 L1376.7 1203 L1382.7 1198.5 L1387 1193.2 L1394.4 1180.5 L1401.5 1170 M1357.5 1233 L1369.5 1218 L1385.3 1206 L1389.8 1201.5 L1400.5 1185 L1408.4 1174.5 L1411.1 1170 M1371.6 1233 L1374.5 1227 L1377.4 1222.5 L1381.6 1218 L1390.6 1210.5 L1395 1206 L1406.2 1189.5 L1418.3 1176 L1421.3 1170 M1381.8 1233 L1383.7 1228.5 L1386.8 1224 L1401.2 1210.5 L1412.5 1194.7 L1417 1190.7 L1424.9 1185 L1429 1181.1 L1431.3 1177.5 L1434.6 1170 M1392.7 1233 L1396.7 1227 L1408 1216.5 L1418.8 1201.5 L1423 1197.8 L1433.5 1190.9 L1438 1186.6 L1448.2 1170 M1405.5 1233 L1415.5 1222.1 L1422.9 1210.5 L1426 1206.7 L1430.5 1202.7 L1441 1195.7 L1444.5 1192.5 L1447.8 1188 L1453.6 1177.5 L1460.3 1170 M1417.5 1233 L1423 1226.5 L1429 1216.4 L1432.2 1212 L1437.4 1207.5 L1447.6 1201.5 L1451.5 1198.5 L1455 1194 L1462 1181.3 L1473.6 1170 M1430.1 1233 L1437.1 1221 L1440.8 1216.5 L1445.5 1213.2 L1456 1208.4 L1460.9 1204.5 L1463.5 1200.8 L1467.8 1191 L1470.6 1186.5 L1481 1176 L1485.2 1170 M1445.8 1233 L1448.5 1227.3 L1451.1 1224 L1454.8 1221 L1464.2 1215 L1468.6 1210.5 L1471 1206.6 L1477.3 1192.5 L1489.1 1179 L1494.1 1170 M1458.3 1233 L1462 1227.9 L1471.5 1219.5 L1475.3 1215 L1483.5 1197 L1486.8 1192.5 L1496.3 1182 L1502.5 1170 M1468.7 1233 L1478.2 1224 L1481.5 1220.2 L1483.6 1216.5 L1487.5 1206 L1489.8 1201.5 L1493.3 1197 L1501 1190.1 L1504 1186.7 L1510.1 1174.5 L1513.4 1170 M1481.1 1233 L1486.7 1228.5 L1490.4 1224 L1495.7 1210.5 L1498.5 1206 L1501.7 1203 L1513 1195.3 L1516 1191 L1519.5 1182 L1522.2 1177.5 L1525.6 1174.5 L1533.5 1170 M1496.3 1233 L1499.8 1228.5 L1504.6 1218 L1507 1214.3 L1511.2 1210.5 L1520.3 1204.5 L1523.5 1201.1 L1525.8 1197 L1529.4 1186.5 L1532.1 1182 L1545.8 1170 M1507.4 1233 L1512.4 1224 L1515.8 1219.5 L1519.3 1216.5 L1528.5 1210.5 L1531.5 1207.5 L1533.9 1203 L1536.8 1192.5 L1538.7 1188 L1542.2 1183.5 L1551.8 1174.5 L1555 1170 M1517.4 1233 L1520.5 1228.2 L1524.8 1224 L1537 1217.6 L1541.8 1213.5 L1543.8 1209 L1545.6 1197 L1547.3 1192.5 L1550.5 1188.2 L1559.5 1179 L1564.2 1170 M1530.4 1233 L1534.7 1230 L1546 1224.3 L1551 1219.5 L1553.5 1213.9 L1555.6 1203 L1557.3 1198.5 L1559.1 1195.5 L1567.7 1185 L1574.1 1170 M1547.1 1233 L1555 1227.2 L1558.7 1222.5 L1565.3 1204.5 L1575.1 1191 L1577.1 1186.5 L1580.7 1176 L1582.4 1173 L1584.9 1170 M1558.8 1233 L1562.5 1229.4 L1565.3 1225.5 L1570.1 1213.5 L1572.5 1209 L1581.5 1198.5 L1583.3 1195.5 L1585.1 1191 L1587.4 1182 L1589.5 1177.5 L1593.8 1173 L1599 1170 M1569.2 1233 L1572.4 1228.5 L1576.8 1219.5 L1579.7 1215 L1583.5 1211.5 L1591.9 1206 L1594.6 1203 L1596.1 1198.5 L1596.6 1189.5 L1597.6 1185 L1600 1181.1 L1604.5 1178 M1580.2 1233 L1585 1225.5 L1588 1222.3 L1592.1 1219.5 L1601.2 1215 L1604.5 1212.5 M1591.2 1233 L1597 1227.3 L1604.5 1222.9 M1602.3 1233 L1604.5 1231.4" fill="none" stroke="#8c8c8c" stroke-width="0.9" /><path clip-path="url(#c18)" d="M1235.9 16 L1250.5 19.5 M1205.2 16 L1213 19.5 L1219 21.3 L1250.5 26.2 M1191.4 16 L1211.5 25 L1217.5 27.1 L1238.5 31.3 L1250.5 32.9 M1176.9 16 L1213 31 L1223.4 34 M1142.1 16 L1148.5 18.9 L1154.5 20.7 L1159 21.1 L1169.5 20.7 L1175.5 21.7 L1195 28.5 L1207.9 34 M1129.1 16 L1154.5 26.1 L1160.5 27.1 L1175.5 27.6 L1183 29.5 L1196.4 34 M1116.1 16 L1124.5 19.6 L1138 24.3 L1156 32.2 L1162 33.5 L1174.9 34 M1081.7 16 L1090 18.3 L1102 17.1 L1108 17.8 L1126 25.5 L1138 30 L1146.5 34 M1069.1 16 L1085.5 23.6 L1090 25.2 L1094.5 25.7 L1103.5 24 L1109.5 24.3 L1115.5 26.4 L1132.3 34 M1054.5 16 L1061.5 19.3 L1073.5 23.8 L1092 32.5 L1097.5 33.4 L1109.5 31.8 L1114 32.6 L1118 34 M1021 16 L1025.5 16.5 L1031.7 16 M1040.4 16 L1046.5 18 L1061.5 25.6 L1075 30.5 L1082.7 34 M1003.5 16 L1018 21.7 L1024 23.6 L1030 24.1 L1040.5 23.1 L1045 23.8 L1068.9 34 M991.1 16 L1001.5 20.7 L1025.5 29.8 L1031.5 30.6 L1040.5 29.7 L1045 29.9 L1049.5 31 L1056.6 34 M975.6 16 L985 18.7 L1022.2 34 M941.8 16 L955 19.2 L980.5 22.5 L986.5 24.5 L1000 30.5 L1009.5 34 M940 20.4 L949 23.7 L959.5 26.3 L976 27.4 L982 28.3 L988 30.4 L995.6 34 M940 25.9 L950.5 30.3 L961.9 34 M940 31.9 L944.4 34" fill="none" stroke="#8c8c8c" stroke-width="0.9" /><path d="M1160 4 L1199 29 L1246 60 L1457 198 L1562 425 M1511 20 L1600 80 L1675 125 M1600 80 L1654 203 L1668 232 L1675 246 M1654 203 L1675 197 M1675 1013 L1649 1057 L1612 1116 L1580 1165 M1649 1057 L1675 1067 M1578 1144 L1586 1174 L1600 1228 M238 1064 L384 1228 M760 1150 L782 1174 L830 1228 M1290 1166 L1310 1174 L1362 1194 L1376 1174" fill="none" stroke="#161616" stroke-width="1.1"/><path d="M1511 20.5H1675" stroke="#222" stroke-width="1.6"/><path d="M238.5 945V1228" stroke="#9a9a9a" stroke-width="1"/><path d="M238.8 945V1064" stroke="#111" stroke-width="1.6"/><path d="M943 19.5H1511" stroke="#a6a6a6" stroke-width="1.4"/><path d="M943 20H1188" stroke="#111" stroke-width="1.6"/><path d="M1520 468L1562 425L1675 672M1675 687L1600 811" fill="none" stroke="#f8bd80" stroke-width="5"/><path d="M1520 468L1562 425L1675 672M1675 687L1600 811" fill="none" stroke="#3a2a18" stroke-width="1"/><rect x="1455.5" y="419.5" width="11" height="11" fill="#5aa7f7" stroke="#000" stroke-width="1"/><rect x="1240" y="419" width="7" height="12" fill="#000"/></g></svg>
<div class="b" style="left:0px;top:57px;width:27px;height:44px;background:#ffffff;"></div>
<div class="b" style="left:0px;top:58px;width:27px;height:42px;background:#383838;"></div>
<div class="b" style="left:237px;top:0;width:707px;height:947px;background:#fff;"></div>
<div class="dlg" style="left:238px;top:0;width:705px;height:946px;background:#252525;border:2px solid #000;border-top:none;">
<div class="in" style="left:-240px;top:0;">
<div class="b" style="left:240px;top:0px;width:701px;height:2px;background:#3a3a3a;"></div>
<div class="t" style="left:267.50px;top:18px;font-size:16px;line-height:20px;color:#f4f4f4;letter-spacing:0.420px;">Name:</div>
<div class="b" style="left:422px;top:12px;width:315px;height:32px;background:#303030;border:2px solid #4a4a4a;"></div>
<div class="t" style="left:425.50px;top:16px;font-size:16px;line-height:20px;color:#f4f4f4;letter-spacing:-0.150px;">AC_Parcel_polygon</div>
<div class="b" style="left:785px;top:10px;width:131px;height:36px;background:#303030;border:1px solid #414141;"></div>
<div class="t" style="left:801.00px;top:18px;font-size:16px;line-height:20px;color:#f4f4f4;letter-spacing:0.420px;">Description...</div>
<div class="b" style="left:267px;top:790px;width:648px;height:70px;border:1px solid #4b4b4b;border-radius:4px;"></div>
</div></div>
<div class="b" style="left:26px;top:28px;width:212px;height:825px;background:#fff;"></div>
<div class="dlg" style="left:27px;top:29px;width:1219px;height:823px;background:#252525;border:2px solid #000;">
<div class="in" style="left:-29px;top:-31px;">
<div class="b" style="left:29px;top:31px;width:1215px;height:43px;background:#383838;"></div>
<div class="t" style="left:44.60px;top:46px;font-size:17.4px;line-height:24px;color:#a0a0a0;letter-spacing:-0.044px;">Advanced Layer Georeferencing</div>
<div class="t" style="left:1132.70px;top:37px;font-size:16.5px;line-height:20px;color:#8e8e8e;font-weight:bold;">?</div>
<svg class="b" style="left:1198.5px;top:36.5px" width="20" height="20" viewBox="-10 -10 20 20"><path d="M-6.75 -6.75 L6.75 6.75 M6.75 -6.75 L-6.75 6.75" stroke="#8e8e8e" stroke-width="1.3" fill="none"/></svg>
<div class="t" style="left:56.40px;top:90px;font-size:16px;line-height:20px;color:#f4f4f4;letter-spacing:0.402px;">This layer is georeferenced:</div>
<svg class="b" style="left:83px;top:126.19999999999999px" width="20" height="20" viewBox="0 0 20 20"><circle cx="10" cy="10" r="8.7" fill="none" stroke="#6e6e6e" stroke-width="1.0"/><circle cx="10" cy="10" r="3.2" fill="#e8e8e8"/></svg>
<div class="t" style="left:106.50px;top:127px;font-size:16px;line-height:20px;color:#f4f4f4;letter-spacing:0.452px;">By the document</div>
<svg class="b" style="left:83px;top:176.2px" width="20" height="20" viewBox="0 0 20 20"><circle cx="10" cy="10" r="8.7" fill="none" stroke="#6e6e6e" stroke-width="1.0"/></svg>
<div class="t" style="left:106.50px;top:177px;font-size:16px;line-height:20px;color:#f4f4f4;letter-spacing:0.572px;">By custom settings</div>
<div class="b" style="left:283px;top:117px;width:277px;height:35px;background:#303030;border:1px solid #414141;border-width:1px 2px 2px 1px;"></div>
<div class="t" style="left:300.30px;top:125px;font-size:16px;line-height:20px;color:#f4f4f4;letter-spacing:0.353px;">Edit Document Georeferencing...</div>
<div class="b" style="left:283px;top:167px;width:169px;height:35px;background:#303030;border:1px solid #414141;border-width:1px 2px 2px 1px;"></div>
<div class="t" style="left:299.00px;top:175px;font-size:16px;line-height:20px;color:#8e8e8e;letter-spacing:0.322px;">Copy from Layer...</div>
<svg class="b" style="left:56px;top:234px" width="1161" height="464"><path d="M11 0.5 H3.5 Q0.5 0.5 0.5 3.5 V460.5 Q0.5 463.5 3.5 463.5 H1157.5 Q1160.5 463.5 1160.5 460.5 V3.5 Q1160.5 0.5 1157.5 0.5 H80" fill="none" stroke="#4b4b4b" stroke-width="1"/></svg>
<div class="t" style="left:71.40px;top:225px;font-size:16px;line-height:20px;color:#a2a2a2;letter-spacing:0.484px;">Settings</div>
<div class="t" style="left:74.70px;top:255px;font-size:16px;line-height:20px;color:#a2a2a2;letter-spacing:0.382px;">Coordinate System:</div>
<div class="b" style="left:229px;top:249px;width:432px;height:33px;background:#303030;border:1px solid #414141;"></div>
<div class="b" style="left:628px;top:251px;width:30px;height:29px;background:#363636;"></div>
<div class="t" style="left:236.00px;top:256px;font-size:16px;line-height:20px;color:#f4f4f4;letter-spacing:-0.153px;">WKT (Well Known Text)</div>
<svg class="b" style="left:637px;top:262px" width="11" height="6"><path d="M1.5 0.5 H9.5 L5.5 5 Z" fill="#9c9c9c"/></svg>
<div class="t" style="left:74.30px;top:315px;font-size:16px;line-height:20px;color:#a2a2a2;letter-spacing:0.878px;">Text:</div>
<div class="b" style="left:229px;top:309px;width:432px;height:200px;background:#313131;border:1px solid #8d8d8d;"></div>
<div class="b" style="left:633px;top:310px;width:27px;height:198px;background:#424242;"></div>
<svg class="b" style="left:638px;top:319px" width="15" height="9"><path d="M0.5 8.5 L7.5 0.8 L14.5 8.5 Z" fill="#9c9c9c"/></svg>
<div class="b" style="left:230px;top:310px;width:402px;height:198px;overflow:hidden;">
<div class="t" style="left:2.30px;top:3px;font-size:16px;line-height:20px;color:#8e8e8e;letter-spacing:-0.094px;">PROJCS["NZGD2000 / New Zealand Transverse</div>
<div class="t" style="left:2.30px;top:23px;font-size:16px;line-height:20px;color:#8e8e8e;letter-spacing:0.029px;">Mercator 2000",</div>
<div class="t" style="left:18.30px;top:43px;font-size:16px;line-height:20px;color:#8e8e8e;letter-spacing:0.099px;">GEOGCS["NZGD2000",</div>
<div class="t" style="left:34.30px;top:63px;font-size:16px;line-height:20px;color:#8e8e8e;letter-spacing:0.086px;">DATUM["New_Zealand_Geodetic_Datum_2000",</div>
<div class="t" style="left:50.30px;top:83px;font-size:16px;line-height:20px;color:#8e8e8e;letter-spacing:0.294px;">SPHEROID["GRS</div>
<div class="t" style="left:2.30px;top:103px;font-size:16px;line-height:20px;color:#8e8e8e;letter-spacing:0.040px;">1980",6378137,298.257222101,</div>
<div class="t" style="left:66.30px;top:123px;font-size:16px;line-height:20px;color:#8e8e8e;letter-spacing:0.066px;">AUTHORITY["EPSG","7019"]],</div>
<div class="t" style="left:50.30px;top:143px;font-size:16px;line-height:20px;color:#8e8e8e;letter-spacing:0.066px;">AUTHORITY["EPSG","6167"]],</div>
<div class="t" style="left:34.30px;top:163px;font-size:16px;line-height:20px;color:#8e8e8e;letter-spacing:-0.029px;">PRIMEM["Greenwich",0,</div>
<div class="t" style="left:50.30px;top:183px;font-size:16px;line-height:20px;color:#8e8e8e;letter-spacing:0.066px;">AUTHORITY["EPSG","8901"]],</div>
</div>
<div class="b" style="left:74px;top:523px;width:189px;height:34px;background:#303030;border:1px solid #414141;border-width:1px 2px 2px 1px;"></div>
<div class="t" style="left:90.30px;top:530px;font-size:16px;line-height:20px;color:#b4b4b4;letter-spacing:0.249px;">EPSG/CRS Lookup...</div>
<div class="b" style="left:414px;top:523px;width:146px;height:34px;background:#303030;border:1px solid #414141;border-width:1px 2px 2px 1px;"></div>
<div class="t" style="left:446.50px;top:530px;font-size:16px;line-height:20px;color:#b4b4b4;letter-spacing:0.420px;">Save...</div>
<div class="b" style="left:56px;top:724px;width:1161px;height:43px;border:1px solid #4b4b4b;border-radius:4px;"></div>
<div class="t" style="left:65.20px;top:735px;font-size:16px;line-height:20px;color:#f4f4f4;letter-spacing:0.382px;">Edit the georeferencing settings of the document.</div>
<div class="b" style="left:56px;top:784px;width:113px;height:35px;background:#303030;border:1px solid #414141;border-width:1px 2px 2px 1px;"></div>
<div class="t" style="left:90.30px;top:792px;font-size:16px;line-height:20px;color:#f4f4f4;letter-spacing:0.701px;">Reset</div>
<svg class="b" style="left:721px;top:264px" width="478" height="426"><path d="M10 0.5 H3.5 Q0.5 0.5 0.5 3.5 V422.5 Q0.5 425.5 3.5 425.5 H474.5 Q477.5 425.5 477.5 422.5 V3.5 Q477.5 0.5 474.5 0.5 H376" fill="none" stroke="#4b4b4b" stroke-width="1"/></svg>
<svg class="b" style="left:735px;top:255px" width="18" height="18" viewBox="0 0 18 18"><rect x="0.5" y="0.5" width="17" height="17" fill="#393939" stroke="#474747"/><path d="M3.4 8.9 L6.9 12.2 L13.4 5.5" fill="none" stroke="#8e8e8e" stroke-width="2.1"/></svg>
<div class="t" style="left:760.30px;top:255px;font-size:16px;line-height:20px;color:#a2a2a2;letter-spacing:0.366px;">Location and orientation of the internal origin</div>
<svg class="b" style="left:737.8px;top:286.2px" width="20" height="20" viewBox="0 0 20 20"><circle cx="10" cy="10" r="8.7" fill="none" stroke="#a2a2a2" stroke-width="1.0"/><circle cx="10" cy="10" r="3.2" fill="#555555"/></svg>
<div class="t" style="left:761.20px;top:287px;font-size:16px;line-height:20px;color:#a2a2a2;letter-spacing:0.383px;">Specify geographical coordinates:</div>
<div class="t" style="left:756.20px;top:325px;font-size:16px;line-height:20px;color:#a2a2a2;letter-spacing:0.477px;">Latitude:</div>
<div class="b" style="left:911px;top:319px;width:270px;height:30px;background:#313131;border:1px solid #8d8d8d;"></div>
<div class="t" style="left:914.50px;top:323px;font-size:16px;line-height:20px;color:#8e8e8e;">-36.94277247</div>
<div class="t" style="left:756.20px;top:365px;font-size:16px;line-height:20px;color:#a2a2a2;letter-spacing:0.418px;">Longitude:</div>
<div class="b" style="left:911px;top:359px;width:270px;height:30px;background:#313131;border:1px solid #8d8d8d;"></div>
<div class="t" style="left:914.50px;top:363px;font-size:16px;line-height:20px;color:#8e8e8e;">174.76331592</div>
<svg class="b" style="left:737.8px;top:406.3px" width="20" height="20" viewBox="0 0 20 20"><circle cx="10" cy="10" r="8.7" fill="none" stroke="#a2a2a2" stroke-width="1.0"/></svg>
<div class="t" style="left:761.20px;top:407px;font-size:16px;line-height:20px;color:#a2a2a2;letter-spacing:0.415px;">Specify geographical (WGS-84) coordinates:</div>
<div class="t" style="left:756.20px;top:445px;font-size:16px;line-height:20px;color:#a2a2a2;letter-spacing:0.477px;">Latitude:</div>
<div class="b" style="left:911px;top:439px;width:270px;height:30px;background:#313131;border:1px solid #8d8d8d;"></div>
<div class="t" style="left:914.50px;top:443px;font-size:16px;line-height:20px;color:#8e8e8e;">-36.94277247</div>
</div></div>
<div class="dlg" style="left:493px;top:461px;width:1120px;height:714px;background:#252525;border:2px solid #949494;">
<div class="in" style="left:-495px;top:-463px;">
<div class="b" style="left:495px;top:463px;width:1116px;height:43px;background:#383838;"></div>
<div class="t" style="left:511.00px;top:478px;font-size:17.4px;line-height:24px;color:#f4f4f4;letter-spacing:0.146px;">Document Georeferencing</div>
<div class="t" style="left:1499.30px;top:469px;font-size:16.5px;line-height:20px;color:#f4f4f4;font-weight:bold;">?</div>
<svg class="b" style="left:1565.5px;top:468.6px" width="20" height="20" viewBox="-10 -10 20 20"><path d="M-6.5 -6.5 L6.5 6.5 M6.5 -6.5 L-6.5 6.5" stroke="#f4f4f4" stroke-width="1.3" fill="none"/></svg>
<div class="t" style="left:522.20px;top:522px;font-size:16px;line-height:20px;color:#f4f4f4;letter-spacing:0.424px;">Select a Coordinate System:</div>
<svg class="b" style="left:539.8px;top:552.8px" width="20" height="20" viewBox="0 0 20 20"><circle cx="10" cy="10" r="8.7" fill="none" stroke="#a2a2a2" stroke-width="1.0"/></svg>
<div class="t" style="left:563.40px;top:554px;font-size:16px;line-height:20px;color:#8e8e8e;letter-spacing:0.450px;">Use WGS 84 / Pseudo-Mercator for worldwide use</div>
<svg class="b" style="left:539.8px;top:578.2px" width="20" height="20" viewBox="0 0 20 20"><circle cx="10" cy="10" r="8.7" fill="none" stroke="#a2a2a2" stroke-width="1.0"/><circle cx="10" cy="10" r="3.2" fill="#555555"/></svg>
<div class="t" style="left:563.40px;top:579px;font-size:16px;line-height:20px;color:#8e8e8e;letter-spacing:0.407px;">Use an EPSG code or CRS name</div>
<svg class="b" style="left:539.8px;top:603.6px" width="20" height="20" viewBox="0 0 20 20"><circle cx="10" cy="10" r="8.7" fill="none" stroke="#a2a2a2" stroke-width="1.0"/></svg>
<div class="t" style="left:563.40px;top:604px;font-size:16px;line-height:20px;color:#8e8e8e;letter-spacing:0.342px;">Use a projection (.prj, .proj4, .xml) file on your computer</div>
<svg class="b" style="left:539.8px;top:628.6px" width="20" height="20" viewBox="0 0 20 20"><circle cx="10" cy="10" r="8.7" fill="none" stroke="#a2a2a2" stroke-width="1.0"/></svg>
<div class="t" style="left:563.40px;top:629px;font-size:16px;line-height:20px;color:#8e8e8e;letter-spacing:0.466px;">Use a common coordinate system or enter Well Known Text (WKT)</div>
<div class="t" style="left:549.30px;top:667px;font-size:16px;line-height:20px;color:#f4f4f4;letter-spacing:0.499px;">Current EPSG:</div>
<div class="t" style="left:668.00px;top:667px;font-size:16px;line-height:20px;color:#2f7fe0;text-decoration:underline;letter-spacing:0.335px;">2193</div>
<div class="t" style="left:549.30px;top:702px;font-size:16px;line-height:20px;color:#f4f4f4;letter-spacing:0.468px;">CRS Name:</div>
<div class="t" style="left:668.00px;top:702px;font-size:16px;line-height:20px;color:#f4f4f4;letter-spacing:0.398px;">NZGD2000 / New Zealand Transverse Mercator</div>
<div class="t" style="left:549.30px;top:737px;font-size:16px;line-height:20px;color:#f4f4f4;letter-spacing:0.620px;">Units:</div>
<div class="t" style="left:668.00px;top:737px;font-size:16px;line-height:20px;color:#f4f4f4;letter-spacing:0.675px;">metre</div>
<div class="t" style="left:549.30px;top:782px;font-size:16px;line-height:20px;color:#f4f4f4;letter-spacing:0.420px;">You can search the web to find a coordinate system and its EPSG</div>
<div class="t" style="left:549.30px;top:802px;font-size:16px;line-height:20px;color:#f4f4f4;letter-spacing:0.394px;">code for a particular location or region.</div>
<div class="b" style="left:549px;top:829px;width:189px;height:35px;background:#303030;border:1px solid #414141;border-width:1px 2px 2px 1px;"></div>
<div class="t" style="left:565.20px;top:837px;font-size:16px;line-height:20px;color:#8e8e8e;letter-spacing:0.279px;">EPSG/CRS Lookup...</div>
<svg class="b" style="left:1105px;top:531px" width="479" height="425"><path d="M10 0.5 H3.5 Q0.5 0.5 0.5 3.5 V421.5 Q0.5 424.5 3.5 424.5 H475.5 Q478.5 424.5 478.5 421.5 V3.5 Q478.5 0.5 475.5 0.5 H377" fill="none" stroke="#4b4b4b" stroke-width="1"/></svg>
<svg class="b" style="left:1120px;top:522px" width="18" height="18" viewBox="0 0 18 18"><rect x="0.5" y="0.5" width="17" height="17" fill="#393939" stroke="#474747"/><path d="M3.4 8.9 L6.9 12.2 L13.4 5.5" fill="none" stroke="#8e8e8e" stroke-width="2.1"/></svg>
<div class="t" style="left:1145.40px;top:522px;font-size:16px;line-height:20px;color:#b6b6b6;letter-spacing:0.359px;">Location and orientation of the internal origin</div>
<svg class="b" style="left:1123px;top:553px" width="20" height="20" viewBox="0 0 20 20"><circle cx="10" cy="10" r="8.7" fill="none" stroke="#a6a6a6" stroke-width="1.0"/><circle cx="10" cy="10" r="3.2" fill="#555555"/></svg>
<div class="t" style="left:1146.30px;top:554px;font-size:16px;line-height:20px;color:#b6b6b6;letter-spacing:0.380px;">Specify geographical coordinates:</div>
<svg class="b" style="left:1123px;top:673px" width="20" height="20" viewBox="0 0 20 20"><circle cx="10" cy="10" r="8.7" fill="none" stroke="#a6a6a6" stroke-width="1.0"/></svg>
<div class="t" style="left:1146.30px;top:674px;font-size:16px;line-height:20px;color:#b6b6b6;letter-spacing:0.407px;">Specify geographical (WGS-84) coordinates:</div>
<svg class="b" style="left:1123px;top:793px" width="20" height="20" viewBox="0 0 20 20"><circle cx="10" cy="10" r="8.7" fill="none" stroke="#a6a6a6" stroke-width="1.0"/></svg>
<div class="t" style="left:1146.30px;top:794px;font-size:16px;line-height:20px;color:#b6b6b6;letter-spacing:0.431px;">Specify Cartesian coordinates:</div>
<div class="t" style="left:1141.60px;top:592px;font-size:16px;line-height:20px;color:#b6b6b6;letter-spacing:0.477px;">Latitude:</div>
<div class="b" style="left:1296px;top:586px;width:270px;height:30px;background:#313131;border:1px solid #8d8d8d;"></div>
<div class="t" style="left:1299.50px;top:590px;font-size:16px;line-height:20px;color:#8e8e8e;">-36.94277247</div>
<div class="t" style="left:1141.60px;top:632px;font-size:16px;line-height:20px;color:#b6b6b6;letter-spacing:0.352px;">Longitude:</div>
<div class="b" style="left:1296px;top:626px;width:270px;height:30px;background:#313131;border:1px solid #8d8d8d;"></div>
<div class="t" style="left:1299.50px;top:630px;font-size:16px;line-height:20px;color:#8e8e8e;">174.76331592</div>
<div class="t" style="left:1141.60px;top:712px;font-size:16px;line-height:20px;color:#b6b6b6;letter-spacing:0.477px;">Latitude:</div>
<div class="b" style="left:1296px;top:706px;width:270px;height:30px;background:#313131;border:1px solid #8d8d8d;"></div>
<div class="t" style="left:1299.50px;top:710px;font-size:16px;line-height:20px;color:#8e8e8e;">-36.94277247</div>
<div class="t" style="left:1141.60px;top:752px;font-size:16px;line-height:20px;color:#b6b6b6;letter-spacing:0.352px;">Longitude:</div>
<div class="b" style="left:1296px;top:746px;width:270px;height:30px;background:#313131;border:1px solid #8d8d8d;"></div>
<div class="t" style="left:1299.50px;top:750px;font-size:16px;line-height:20px;color:#8e8e8e;">174.76331592</div>
<div class="t" style="left:1141.60px;top:832px;font-size:16px;line-height:20px;color:#b6b6b6;letter-spacing:0.519px;">Easting (X):</div>
<div class="b" style="left:1296px;top:826px;width:270px;height:30px;background:#313131;border:1px solid #8d8d8d;"></div>
<div class="t" style="left:1299.50px;top:830px;font-size:16px;line-height:20px;color:#8e8e8e;">1757017.363m</div>
<div class="t" style="left:1141.60px;top:872px;font-size:16px;line-height:20px;color:#b6b6b6;letter-spacing:0.358px;">Northing (Y):</div>
<div class="b" style="left:1296px;top:866px;width:270px;height:30px;background:#313131;border:1px solid #8d8d8d;"></div>
<div class="t" style="left:1299.50px;top:870px;font-size:16px;line-height:20px;color:#8e8e8e;">5910023.620m</div>
<div class="t" style="left:1123.20px;top:917px;font-size:16px;line-height:20px;color:#b6b6b6;letter-spacing:0.427px;">Angle to True North:</div>
<div class="b" style="left:1283px;top:911px;width:284px;height:30px;background:#313131;border:1px solid #8d8d8d;"></div>
<div class="t" style="left:1286.50px;top:915px;font-size:16px;line-height:20px;color:#8e8e8e;">0.00000000</div>
<div class="b" style="left:522px;top:1026px;width:1062px;height:63px;border:1px solid #4b4b4b;border-radius:4px;"></div>
<div class="t" style="left:531.60px;top:1037px;font-size:16px;line-height:20px;color:#f4f4f4;letter-spacing:0.432px;">For Help, press F1 or click the ? icon.</div>
<div class="b" style="left:522px;top:1106px;width:113px;height:35px;background:#303030;border:1px solid #414141;border-width:1px 2px 2px 1px;"></div>
<div class="t" style="left:556.60px;top:1114px;font-size:16px;line-height:20px;color:#8e8e8e;letter-spacing:0.651px;">Reset</div>
<div class="b" style="left:1337px;top:1106px;width:113px;height:35px;background:#303030;border:1px solid #414141;border-width:1px 2px 2px 1px;"></div>
<div class="t" style="left:1381.50px;top:1114px;font-size:16px;line-height:20px;color:#f4f4f4;letter-spacing:1.582px;">OK</div>
<div class="b" style="left:1472px;top:1106px;width:113px;height:35px;background:#303030;border:1px solid #414141;border-width:1px 2px 2px 1px;"></div>
<div class="t" style="left:1502.30px;top:1114px;font-size:16px;line-height:20px;color:#f4f4f4;letter-spacing:0.499px;">Cancel</div>
<svg class="b" style="left:1588px;top:1151px" width="12" height="12"><rect x="8" y="0" width="3" height="3" fill="#d8d8d8"/><rect x="4" y="4" width="3" height="3" fill="#d8d8d8"/><rect x="8" y="4" width="3" height="3" fill="#d8d8d8"/><rect x="0" y="8" width="3" height="3" fill="#d8d8d8"/><rect x="4" y="8" width="3" height="3" fill="#d8d8d8"/><rect x="8" y="8" width="3" height="3" fill="#d8d8d8"/></svg>
</div></div>
<svg class="b" style="left:812px;top:1151px" width="20" height="29" viewBox="0 0 20 29"><path d="M0.8 1 V23.4 L5.5 19.3 L9.3 26.8 L13.3 25.2 L9.9 17.9 H17.2 Z" fill="#fff" stroke="#000" stroke-width="1.05" stroke-linejoin="miter"/></svg>
</body></html>
